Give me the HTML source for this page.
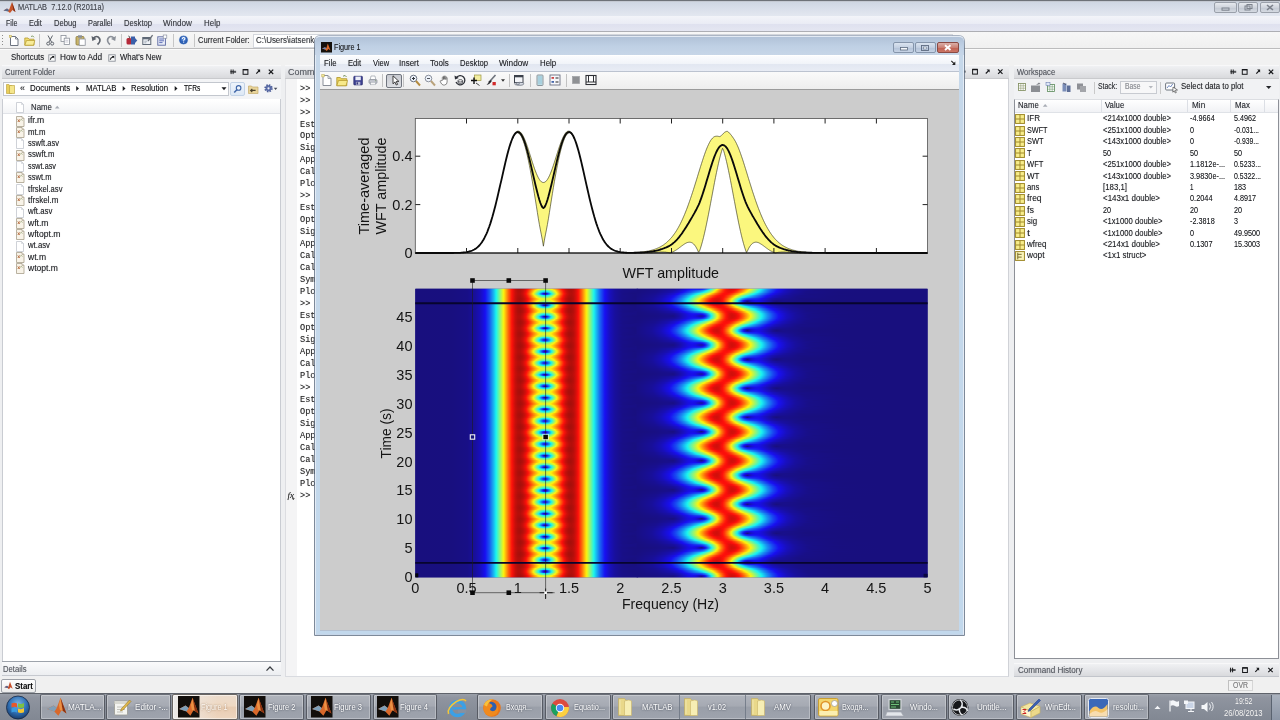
<!DOCTYPE html>
<html><head><meta charset="utf-8"><title>MATLAB 7.12.0 (R2011a)</title>
<style>
html,body{margin:0;padding:0;}
body{width:1280px;height:720px;overflow:hidden;position:relative;background:#f0f0f0;font-family:"Liberation Sans",sans-serif;}
#root{position:absolute;left:0;top:0;width:1280px;height:720px;overflow:hidden;will-change:transform;}
#root div{position:absolute;box-sizing:border-box;}
#root svg{position:absolute;overflow:visible;}
.t{position:absolute;white-space:pre;text-shadow:0 0 .7px rgba(30,30,35,.45);}
.fs{font-family:"Liberation Sans",sans-serif;}
.fm{font-family:"Liberation Mono",monospace;}
</style></head>
<body><div id="root">
<div style="left:0px;top:0px;width:1280px;height:16px;background:linear-gradient(#ccd4e0 0%,#d8dee9 50%,#e3e7f0 100%);"></div>
<div style="left:0px;top:0px;width:1280px;height:1px;background:#6e7278;"></div>
<div style="left:0px;top:1px;width:1280px;height:1px;background:#c4c9d2;"></div>
<svg style="left:3px;top:1px" width="13" height="13" viewBox="0 0 13 13"><path d="M0.5 9.5 L4 7.5 L6 9 L9 1 L12.5 11 L9.5 9 L7 12 L4.5 10 Z" fill="#c8552a"/><path d="M0.5 9.5 L4 7.5 L6 9 L5 10.5 Z" fill="#5a6b8c"/><path d="M9 1 L12.5 11 L10.5 9.5 Z" fill="#7a2a14"/></svg>
<span class="t fs" style="left:18.00px;top:1.00px;font-size:8.6px;line-height:12px;color:#4a4e57;transform:scaleX(0.860);transform-origin:0 50%;">MATLAB  7.12.0 (R2011a)</span>
<div style="left:1214px;top:2px;width:23px;height:11px;border:1px solid #9aa0aa;border-radius:2px;background:linear-gradient(#e6e9ee,#cfd4dc 50%,#c2c8d2 51%,#d5dae2);"></div>
<div style="left:1238px;top:2px;width:20px;height:11px;border:1px solid #9aa0aa;border-radius:2px;background:linear-gradient(#e6e9ee,#cfd4dc 50%,#c2c8d2 51%,#d5dae2);"></div>
<div style="left:1260px;top:2px;width:20px;height:11px;border:1px solid #9aa0aa;border-radius:2px;background:linear-gradient(#e6e9ee,#cfd4dc 50%,#c2c8d2 51%,#d5dae2);"></div>
<svg style="left:1214px;top:2px" width="66" height="11" viewBox="0 0 66 11"><rect x="8" y="6" width="7" height="2.2" fill="none" stroke="#7c828c" stroke-width="1"/><rect x="31" y="4" width="5" height="4" fill="none" stroke="#7c828c"/><rect x="33" y="2.5" width="5" height="4" fill="none" stroke="#7c828c"/><path d="M53 3 L59 8 M59 3 L53 8" stroke="#7c828c" stroke-width="1.6"/></svg>
<div style="left:0px;top:16px;width:1280px;height:16px;background:linear-gradient(#f3f4f9 0%,#eaecf5 48%,#dfe1ef 52%,#e5e7f2 100%);"></div>
<div style="left:0px;top:31px;width:1280px;height:1px;background:#adaeb4;"></div>
<span class="t fs" style="left:5.50px;top:17.10px;font-size:8.4px;line-height:12px;color:#3c3f46;transform:scaleX(0.852);transform-origin:0 50%;">File</span>
<span class="t fs" style="left:28.60px;top:17.10px;font-size:8.4px;line-height:12px;color:#3c3f46;transform:scaleX(0.887);transform-origin:0 50%;">Edit</span>
<span class="t fs" style="left:53.60px;top:17.10px;font-size:8.4px;line-height:12px;color:#3c3f46;transform:scaleX(0.907);transform-origin:0 50%;">Debug</span>
<span class="t fs" style="left:87.50px;top:17.10px;font-size:8.4px;line-height:12px;color:#3c3f46;transform:scaleX(0.877);transform-origin:0 50%;">Parallel</span>
<span class="t fs" style="left:124.00px;top:17.10px;font-size:8.4px;line-height:12px;color:#3c3f46;transform:scaleX(0.911);transform-origin:0 50%;">Desktop</span>
<span class="t fs" style="left:163.00px;top:17.10px;font-size:8.4px;line-height:12px;color:#3c3f46;transform:scaleX(0.973);transform-origin:0 50%;">Window</span>
<span class="t fs" style="left:203.70px;top:17.10px;font-size:8.4px;line-height:12px;color:#3c3f46;transform:scaleX(0.946);transform-origin:0 50%;">Help</span>
<div style="left:0px;top:32px;width:1280px;height:17px;background:linear-gradient(#f7f7f7,#efefef);"></div>
<div style="left:0px;top:48px;width:1280px;height:1px;background:#bcbcbd;"></div>
<div style="left:0px;top:49px;width:1280px;height:1px;background:#fbfbfb;"></div>
<svg style="left:1px;top:33px" width="4" height="30" viewBox="0 0 4 30"><g fill="#8c8c8c"><rect x="1" y="2" width="1" height="1"/><rect x="1" y="5" width="1" height="1"/><rect x="1" y="8" width="1" height="1"/><rect x="1" y="11" width="1" height="1"/><rect x="1" y="19" width="1" height="1"/><rect x="1" y="22" width="1" height="1"/><rect x="1" y="25" width="1" height="1"/></g></svg>
<svg style="left:8.6px;top:34px" width="11" height="12" viewBox="0 0 11 12"><path d="M1.5 2.5 h5 l2.5 2.5 v6.5 h-7.5z" fill="#fff" stroke="#6d7480" stroke-width="1"/><path d="M6.5 2.5 v2.5 h2.5" fill="none" stroke="#6d7480" stroke-width=".8"/><rect x="0.3" y="1.3" width="2.2" height="2.2" fill="#f4e9a0" stroke="#b9a64a" stroke-width=".5"/></svg>
<svg style="left:23.5px;top:34px" width="11" height="12" viewBox="0 0 11 12"><path d="M0.8 4 h3.2 l1 1.2 h5 v6 h-9.2z" fill="#f0dc6e" stroke="#b59a2e" stroke-width=".8"/><path d="M2.5 6.5 h8.3 l-1.3 4.7 h-8.7z" fill="#f8ec98" stroke="#b59a2e" stroke-width=".7"/><path d="M7 2.5 q2-1.5 3 .8" fill="none" stroke="#6a8a4a" stroke-width=".8"/></svg>
<svg style="left:45px;top:34px" width="11" height="12" viewBox="0 0 11 12"><path d="M3 1.5 L6.5 8 M7.5 1.5 L4 8" stroke="#60656d" stroke-width="1"/><circle cx="3.2" cy="9.6" r="1.5" fill="none" stroke="#60656d" stroke-width="1"/><circle cx="7.2" cy="9.6" r="1.5" fill="none" stroke="#60656d" stroke-width="1"/></svg>
<svg style="left:60px;top:34px" width="11" height="12" viewBox="0 0 11 12"><rect x="1" y="1.5" width="5" height="6" fill="#fff" stroke="#8a9099" stroke-width=".8"/><rect x="4.2" y="4.2" width="5.3" height="6.3" fill="#fff" stroke="#8a9099" stroke-width=".8"/><path d="M5.3 6.3h3M5.3 8h3" stroke="#aab" stroke-width=".6"/></svg>
<svg style="left:75px;top:34px" width="11" height="12" viewBox="0 0 11 12"><rect x="1" y="2.5" width="8" height="8.5" rx="1" fill="#c9b46a" stroke="#8a7a3a" stroke-width=".8"/><rect x="3" y="1.3" width="4" height="2.4" fill="#8a8f98"/><rect x="4.2" y="5" width="6" height="6.3" fill="#fff" stroke="#8a9099" stroke-width=".8"/></svg>
<svg style="left:91px;top:34px" width="11" height="12" viewBox="0 0 11 12"><path d="M2 4.5 q4-4 6.5 0 q1.5 3-2 6" fill="none" stroke="#5d626b" stroke-width="1.7"/><path d="M0.5 2 L1.3 7 L5.5 5z" fill="#5d626b"/></svg>
<svg style="left:106px;top:34px" width="11" height="12" viewBox="0 0 11 12"><path d="M8.5 4.5 q-4-4 -6.5 0 q-1.5 3 2 6" fill="none" stroke="#8b9099" stroke-width="1.7"/><path d="M10 2 L9.2 7 L5 5z" fill="#8b9099"/></svg>
<svg style="left:126px;top:34px" width="11" height="12" viewBox="0 0 11 12"><rect x="0.5" y="4" width="5" height="6.5" rx="1.5" fill="#b52a3a"/><rect x="5" y="2.5" width="4" height="8" fill="#3b5fa8"/><path d="M9 4 l2.3 2.5 l-2.3 2.5z" fill="#3b5fa8"/><path d="M2 1.3 l2.5 1.7 l-1 1.5z" fill="#5a5a5a"/></svg>
<svg style="left:142px;top:34px" width="11" height="12" viewBox="0 0 11 12"><rect x="0.8" y="3.5" width="8" height="7" fill="#eef1f6" stroke="#5e6876" stroke-width="1"/><rect x="0.8" y="3.5" width="8" height="1.8" fill="#5e6876"/><path d="M6 7 L10.6 1.2" stroke="#6a707a" stroke-width="1.3"/><path d="M2.3 7.2h3M2.3 8.8h2" stroke="#8d96a5" stroke-width=".7"/></svg>
<svg style="left:157px;top:34px" width="11" height="12" viewBox="0 0 11 12"><rect x="0.8" y="2.8" width="7.6" height="8.4" fill="#e9edf8" stroke="#5a67a0" stroke-width=".9"/><path d="M2.2 5h4.8M2.2 6.8h4.8M2.2 8.6h3.3" stroke="#5463b0" stroke-width=".9"/><rect x="6.2" y="1" width="3.6" height="3.2" fill="#fff" stroke="#7d8496" stroke-width=".6"/></svg>
<svg style="left:178px;top:34px" width="11" height="12" viewBox="0 0 11 12"><circle cx="5.5" cy="6" r="4.9" fill="#cfe0f6" opacity=".7"/><circle cx="5.5" cy="6" r="4" fill="#2f62b8" stroke="#214f9c" stroke-width=".5"/><circle cx="5.5" cy="4.800" r="2.500" fill="#6fa0ea" opacity=".5"/><path d="M4.300 4.900 q0-1.500 1.300-1.500 q1.300 0 1.300 1.200 q0 .8-1.200 1.500 v.6" fill="none" stroke="#fff" stroke-width="1.050"/><rect x="5.100" y="7.600" width="1.100" height="1" fill="#fff"/></svg>
<div style="left:39px;top:34px;width:1px;height:13px;background:#c6c6c6;"></div>
<div style="left:121px;top:34px;width:1px;height:13px;background:#c6c6c6;"></div>
<div style="left:172.5px;top:34px;width:1px;height:13px;background:#c6c6c6;"></div>
<div style="left:193.5px;top:34px;width:1px;height:13px;background:#c6c6c6;"></div>
<span class="t fs" style="left:198.40px;top:34.30px;font-size:8.4px;line-height:12px;color:#303236;transform:scaleX(0.916);transform-origin:0 50%;">Current Folder:</span>
<div style="left:253px;top:33.5px;width:700px;height:14px;background:#fff;border:1px solid #d3d6dc;"></div>
<span class="t fs" style="left:255.60px;top:34.30px;font-size:8.4px;line-height:12px;color:#3a3d42;transform:scaleX(0.949);transform-origin:0 50%;">C:\Users\iatsenko\</span>
<div style="left:0px;top:50px;width:1280px;height:16px;background:#f1f1f1;"></div>
<span class="t fs" style="left:10.60px;top:51.40px;font-size:8.5px;line-height:12px;color:#26282c;transform:scaleX(0.922);transform-origin:0 50%;">Shortcuts</span>
<svg style="left:48.2px;top:53.5px" width="8" height="8" viewBox="0 0 8 8"><rect x="0.800" y="0.800" width="6.400" height="6.400" fill="#fdfdfd" stroke="#8b9098" stroke-width=".9"/><path d="M2.300 5.800 q.3-2.300 2.600-2.500" stroke="#15171a" stroke-width="1.100" fill="none"/><path d="M3.600 2 h2.600 v2.600z" fill="#15171a"/></svg>
<span class="t fs" style="left:59.70px;top:51.40px;font-size:8.5px;line-height:12px;color:#26282c;transform:scaleX(0.970);transform-origin:0 50%;">How to Add</span>
<svg style="left:108.2px;top:53.5px" width="8" height="8" viewBox="0 0 8 8"><rect x="0.800" y="0.800" width="6.400" height="6.400" fill="#fdfdfd" stroke="#8b9098" stroke-width=".9"/><path d="M2.300 5.800 q.3-2.300 2.600-2.500" stroke="#15171a" stroke-width="1.100" fill="none"/><path d="M3.600 2 h2.600 v2.600z" fill="#15171a"/></svg>
<span class="t fs" style="left:120.30px;top:51.40px;font-size:8.5px;line-height:12px;color:#26282c;transform:scaleX(0.918);transform-origin:0 50%;">What's New</span>
<div style="left:0px;top:66px;width:1280px;height:628px;background:#eeeff1;"></div>
<div style="left:2px;top:65px;width:279px;height:13.5px;background:linear-gradient(#f0f1f3 0%,#e6e7ea 45%,#d9dadd 100%);border-top:1px solid #f8f8f9;border-bottom:1px solid #c9cacd;"></div>
<span class="t fs" style="left:5.00px;top:66.30px;font-size:8.3px;line-height:12px;color:#5c6068;transform:scaleX(0.935);transform-origin:0 50%;">Current Folder</span>
<svg style="left:0;top:0" width="1280" height="720"><path d="M230.3 71.8 h2.8 M231.1 69.5 v4.6 M233.1 69.5 v4.6" stroke="#17181b" stroke-width="1" fill="none"/><rect x="233.1" y="70.8" width="3" height="2" fill="#17181b" opacity=".7"/><rect x="243.1" y="69.5" width="4.8" height="4.8" fill="none" stroke="#17181b" stroke-width="1"/><path d="M243.1 69.8 h4.8" stroke="#17181b" stroke-width="1.3"/><path d="M256.3 73.7 L259.4 70.5" stroke="#17181b" stroke-width="1.15" fill="none"/><path d="M257.1 69.6 h3 v3z" fill="#17181b"/><path d="M268.8 69.6 L273.2 74.0 M273.2 69.6 L268.8 74.0" stroke="#17181b" stroke-width="1.2"/></svg>
<div style="left:2px;top:78.5px;width:279px;height:20.5px;background:#f3f4f6;"></div>
<div style="left:3px;top:81.5px;width:226px;height:14px;background:#fff;border:1px solid #c3c7ce;"></div>
<svg style="left:5.5px;top:83px" width="9" height="11" viewBox="0 0 9 11"><path d="M0.5 1.5 h2.4 l1 1 h1.6 v8 h-5z" fill="#e9cf5a" stroke="#b79c32" stroke-width=".6"/><path d="M3.5 2.5 h5 v8 h-5z" fill="#f5e68c" stroke="#b79c32" stroke-width=".6"/></svg>
<span class="t fs" style="left:20.00px;top:81.70px;font-size:9px;line-height:13px;color:#2a2c30;">«</span>
<span class="t fs" style="left:30.00px;top:82.00px;font-size:8.4px;line-height:12px;color:#111215;transform:scaleX(0.951);transform-origin:0 50%;">Documents</span>
<span class="t fs" style="left:85.60px;top:82.00px;font-size:8.4px;line-height:12px;color:#111215;transform:scaleX(0.924);transform-origin:0 50%;">MATLAB</span>
<span class="t fs" style="left:131.00px;top:82.00px;font-size:8.4px;line-height:12px;color:#111215;transform:scaleX(0.935);transform-origin:0 50%;">Resolution</span>
<span class="t fs" style="left:183.70px;top:82.00px;font-size:8.4px;line-height:12px;color:#111215;transform:scaleX(0.796);transform-origin:0 50%;">TFRs</span>
<svg style="left:0;top:0" width="1280" height="720"><path d="M76.2 86.1 L79.0 88.5 L76.2 90.9z" fill="#1c1d20"/><path d="M122.7 86.1 L125.5 88.5 L122.7 90.9z" fill="#1c1d20"/><path d="M174.7 86.1 L177.5 88.5 L174.7 90.9z" fill="#1c1d20"/><path d="M221.5 87.2 h5 l-2.5 3z" fill="#1c1d20"/></svg>
<div style="left:229.5px;top:81.5px;width:15px;height:14px;background:linear-gradient(#eef4fb,#dde8f5);border:1px solid #c3d3e6;border-radius:2px;"></div>
<svg style="left:232px;top:83.5px" width="11" height="11" viewBox="0 0 11 11"><circle cx="6.6" cy="3.9" r="2.3" fill="#eef4fb" stroke="#3f66a8" stroke-width="1.1"/><path d="M4.9 5.7 L2.2 8.6" stroke="#3f66a8" stroke-width="1.5"/></svg>
<svg style="left:248px;top:83.5px" width="11" height="11" viewBox="0 0 11 11"><path d="M0.5 2 h3 l1 1 h5.5 v6.5 h-9.5z" fill="#e8d49a" stroke="#c4ab6a" stroke-width=".7"/><path d="M2.6 6.400 h5 M4.300 4.800 L2.600 6.400 L4.300 8" stroke="#4a412a" stroke-width="1.100" fill="none"/></svg>
<svg style="left:263px;top:83px" width="16" height="12" viewBox="0 0 16 12"><circle cx="5.500" cy="5.300" r="3.300" fill="none" stroke="#4b5d9a" stroke-width="1.800" stroke-dasharray="1.500 1.090"/><circle cx="5.500" cy="5.300" r="2.700" fill="#5c6fae" stroke="#44568f" stroke-width=".5"/><circle cx="5.500" cy="5.300" r="1.100" fill="#eef0f6"/><path d="M10.800 4.800 h3.600 l-1.800 2.200z" fill="#444a5a"/></svg>
<div style="left:2px;top:99px;width:279px;height:563px;background:#fff;border-left:1px solid #c9ccd2;border-right:1px solid #c9ccd2;"></div>
<div style="left:3px;top:100px;width:277px;height:14px;background:linear-gradient(#ffffff,#f3f4f6);border-bottom:1px solid #e1e3e8;"></div>
<svg style="left:15.8px;top:101.5px" width="9" height="11" viewBox="0 0 9 11"><path d="M0.5 0.5 h5 l2 2 v8 h-7z" fill="#fff" stroke="#c3c7ce" stroke-width=".8"/><path d="M5.5 0.5 v2 h2" fill="none" stroke="#c3c7ce" stroke-width=".6"/></svg>
<span class="t fs" style="left:30.60px;top:101.30px;font-size:8.4px;line-height:12px;color:#2d3036;transform:scaleX(0.940);transform-origin:0 50%;">Name</span>
<svg style="left:0;top:0" width="1280" height="720"><path d="M54.8 108.6 l2.4-2.8 l2.4 2.8z" fill="#a9adb5"/></svg>
<svg style="left:15.5px;top:115.6px" width="9" height="11" viewBox="0 0 9 11"><path d="M0.5 0.5 h5.5 l2 2 v8 h-7.5z" fill="#f8f3e8" stroke="#a89f8c" stroke-width=".8"/><path d="M6 0.5 v2 h2" fill="none" stroke="#a89f8c" stroke-width=".6"/><path d="M1.800 3.400 l1.900 2.600 M3.700 3.400 l-1.900 2.600" stroke="#b3683a" stroke-width=".9"/><path d="M4.300 4.200 q1.200-1.300 2.200.2" stroke="#7d8f5a" stroke-width=".7" fill="none"/></svg>
<span class="t fs" style="left:27.50px;top:115.30px;font-size:8.2px;line-height:12px;color:#1f2125;transform:scaleX(1.047);transform-origin:0 50%;">ifr.m</span>
<svg style="left:15.5px;top:126.97px" width="9" height="11" viewBox="0 0 9 11"><path d="M0.5 0.5 h5.5 l2 2 v8 h-7.5z" fill="#f8f3e8" stroke="#a89f8c" stroke-width=".8"/><path d="M6 0.5 v2 h2" fill="none" stroke="#a89f8c" stroke-width=".6"/><path d="M1.800 3.400 l1.900 2.600 M3.700 3.400 l-1.900 2.600" stroke="#b3683a" stroke-width=".9"/><path d="M4.300 4.200 q1.200-1.300 2.200.2" stroke="#7d8f5a" stroke-width=".7" fill="none"/></svg>
<span class="t fs" style="left:27.50px;top:126.67px;font-size:8.2px;line-height:12px;color:#1f2125;transform:scaleX(0.961);transform-origin:0 50%;">mt.m</span>
<svg style="left:15.5px;top:138.34px" width="9" height="11" viewBox="0 0 9 11"><path d="M0.5 0.5 h5 l2 2 v8 h-7z" fill="#fff" stroke="#c3c7ce" stroke-width=".8"/><path d="M5.5 0.5 v2 h2" fill="none" stroke="#c3c7ce" stroke-width=".6"/></svg>
<span class="t fs" style="left:27.50px;top:138.04px;font-size:8.2px;line-height:12px;color:#1f2125;transform:scaleX(0.921);transform-origin:0 50%;">sswft.asv</span>
<svg style="left:15.5px;top:149.70999999999998px" width="9" height="11" viewBox="0 0 9 11"><path d="M0.5 0.5 h5.5 l2 2 v8 h-7.5z" fill="#f8f3e8" stroke="#a89f8c" stroke-width=".8"/><path d="M6 0.5 v2 h2" fill="none" stroke="#a89f8c" stroke-width=".6"/><path d="M1.800 3.400 l1.900 2.600 M3.700 3.400 l-1.900 2.600" stroke="#b3683a" stroke-width=".9"/><path d="M4.300 4.200 q1.200-1.300 2.200.2" stroke="#7d8f5a" stroke-width=".7" fill="none"/></svg>
<span class="t fs" style="left:27.50px;top:149.41px;font-size:8.2px;line-height:12px;color:#1f2125;transform:scaleX(0.955);transform-origin:0 50%;">sswft.m</span>
<svg style="left:15.5px;top:161.07999999999998px" width="9" height="11" viewBox="0 0 9 11"><path d="M0.5 0.5 h5 l2 2 v8 h-7z" fill="#fff" stroke="#c3c7ce" stroke-width=".8"/><path d="M5.5 0.5 v2 h2" fill="none" stroke="#c3c7ce" stroke-width=".6"/></svg>
<span class="t fs" style="left:27.50px;top:160.78px;font-size:8.2px;line-height:12px;color:#1f2125;transform:scaleX(0.892);transform-origin:0 50%;">sswt.asv</span>
<svg style="left:15.5px;top:172.45px" width="9" height="11" viewBox="0 0 9 11"><path d="M0.5 0.5 h5.5 l2 2 v8 h-7.5z" fill="#f8f3e8" stroke="#a89f8c" stroke-width=".8"/><path d="M6 0.5 v2 h2" fill="none" stroke="#a89f8c" stroke-width=".6"/><path d="M1.800 3.400 l1.900 2.600 M3.700 3.400 l-1.900 2.600" stroke="#b3683a" stroke-width=".9"/><path d="M4.300 4.200 q1.200-1.300 2.200.2" stroke="#7d8f5a" stroke-width=".7" fill="none"/></svg>
<span class="t fs" style="left:27.50px;top:172.15px;font-size:8.2px;line-height:12px;color:#1f2125;transform:scaleX(0.922);transform-origin:0 50%;">sswt.m</span>
<svg style="left:15.5px;top:183.82px" width="9" height="11" viewBox="0 0 9 11"><path d="M0.5 0.5 h5 l2 2 v8 h-7z" fill="#fff" stroke="#c3c7ce" stroke-width=".8"/><path d="M5.5 0.5 v2 h2" fill="none" stroke="#c3c7ce" stroke-width=".6"/></svg>
<span class="t fs" style="left:27.50px;top:183.52px;font-size:8.2px;line-height:12px;color:#1f2125;transform:scaleX(0.936);transform-origin:0 50%;">tfrskel.asv</span>
<svg style="left:15.5px;top:195.19px" width="9" height="11" viewBox="0 0 9 11"><path d="M0.5 0.5 h5.5 l2 2 v8 h-7.5z" fill="#f8f3e8" stroke="#a89f8c" stroke-width=".8"/><path d="M6 0.5 v2 h2" fill="none" stroke="#a89f8c" stroke-width=".6"/><path d="M1.800 3.400 l1.900 2.600 M3.700 3.400 l-1.900 2.600" stroke="#b3683a" stroke-width=".9"/><path d="M4.300 4.200 q1.200-1.300 2.200.2" stroke="#7d8f5a" stroke-width=".7" fill="none"/></svg>
<span class="t fs" style="left:27.50px;top:194.89px;font-size:8.2px;line-height:12px;color:#1f2125;transform:scaleX(0.986);transform-origin:0 50%;">tfrskel.m</span>
<svg style="left:15.5px;top:206.56px" width="9" height="11" viewBox="0 0 9 11"><path d="M0.5 0.5 h5 l2 2 v8 h-7z" fill="#fff" stroke="#c3c7ce" stroke-width=".8"/><path d="M5.5 0.5 v2 h2" fill="none" stroke="#c3c7ce" stroke-width=".6"/></svg>
<span class="t fs" style="left:27.50px;top:206.26px;font-size:8.2px;line-height:12px;color:#1f2125;transform:scaleX(0.961);transform-origin:0 50%;">wft.asv</span>
<svg style="left:15.5px;top:217.93px" width="9" height="11" viewBox="0 0 9 11"><path d="M0.5 0.5 h5.5 l2 2 v8 h-7.5z" fill="#f8f3e8" stroke="#a89f8c" stroke-width=".8"/><path d="M6 0.5 v2 h2" fill="none" stroke="#a89f8c" stroke-width=".6"/><path d="M1.800 3.400 l1.900 2.600 M3.700 3.400 l-1.900 2.600" stroke="#b3683a" stroke-width=".9"/><path d="M4.300 4.200 q1.200-1.300 2.200.2" stroke="#7d8f5a" stroke-width=".7" fill="none"/></svg>
<span class="t fs" style="left:27.50px;top:217.63px;font-size:8.2px;line-height:12px;color:#1f2125;transform:scaleX(1.048);transform-origin:0 50%;">wft.m</span>
<svg style="left:15.5px;top:229.29999999999998px" width="9" height="11" viewBox="0 0 9 11"><path d="M0.5 0.5 h5.5 l2 2 v8 h-7.5z" fill="#f8f3e8" stroke="#a89f8c" stroke-width=".8"/><path d="M6 0.5 v2 h2" fill="none" stroke="#a89f8c" stroke-width=".6"/><path d="M1.800 3.400 l1.900 2.600 M3.700 3.400 l-1.900 2.600" stroke="#b3683a" stroke-width=".9"/><path d="M4.300 4.200 q1.200-1.300 2.200.2" stroke="#7d8f5a" stroke-width=".7" fill="none"/></svg>
<span class="t fs" style="left:27.50px;top:229.00px;font-size:8.2px;line-height:12px;color:#1f2125;transform:scaleX(1.050);transform-origin:0 50%;">wftopt.m</span>
<svg style="left:15.5px;top:240.67px" width="9" height="11" viewBox="0 0 9 11"><path d="M0.5 0.5 h5 l2 2 v8 h-7z" fill="#fff" stroke="#c3c7ce" stroke-width=".8"/><path d="M5.5 0.5 v2 h2" fill="none" stroke="#c3c7ce" stroke-width=".6"/></svg>
<span class="t fs" style="left:27.50px;top:240.37px;font-size:8.2px;line-height:12px;color:#1f2125;transform:scaleX(0.948);transform-origin:0 50%;">wt.asv</span>
<svg style="left:15.5px;top:252.03999999999996px" width="9" height="11" viewBox="0 0 9 11"><path d="M0.5 0.5 h5.5 l2 2 v8 h-7.5z" fill="#f8f3e8" stroke="#a89f8c" stroke-width=".8"/><path d="M6 0.5 v2 h2" fill="none" stroke="#a89f8c" stroke-width=".6"/><path d="M1.800 3.400 l1.900 2.600 M3.700 3.400 l-1.900 2.600" stroke="#b3683a" stroke-width=".9"/><path d="M4.300 4.200 q1.200-1.300 2.200.2" stroke="#7d8f5a" stroke-width=".7" fill="none"/></svg>
<span class="t fs" style="left:27.50px;top:251.74px;font-size:8.2px;line-height:12px;color:#1f2125;transform:scaleX(1.041);transform-origin:0 50%;">wt.m</span>
<svg style="left:15.5px;top:263.40999999999997px" width="9" height="11" viewBox="0 0 9 11"><path d="M0.5 0.5 h5.5 l2 2 v8 h-7.5z" fill="#f8f3e8" stroke="#a89f8c" stroke-width=".8"/><path d="M6 0.5 v2 h2" fill="none" stroke="#a89f8c" stroke-width=".6"/><path d="M1.800 3.400 l1.900 2.600 M3.700 3.400 l-1.900 2.600" stroke="#b3683a" stroke-width=".9"/><path d="M4.300 4.200 q1.200-1.300 2.200.2" stroke="#7d8f5a" stroke-width=".7" fill="none"/></svg>
<span class="t fs" style="left:27.50px;top:263.11px;font-size:8.2px;line-height:12px;color:#1f2125;transform:scaleX(1.046);transform-origin:0 50%;">wtopt.m</span>
<div style="left:2px;top:661px;width:279px;height:15px;background:linear-gradient(#fafafb,#eceef1);border-top:1px solid #9ea3ab;border-bottom:1px solid #c6c9cf;"></div>
<span class="t fs" style="left:3.00px;top:663.00px;font-size:8.4px;line-height:12px;color:#5e626a;transform:scaleX(0.918);transform-origin:0 50%;">Details</span>
<svg style="left:0;top:0" width="1280" height="720"><path d="M266.5 670.6 L270 667 L273.5 670.6" fill="none" stroke="#3a3d42" stroke-width="1.3"/></svg>
<div style="left:285px;top:65px;width:724px;height:13.5px;background:linear-gradient(#f0f1f3 0%,#e6e7ea 45%,#d9dadd 100%);border-top:1px solid #f8f8f9;border-bottom:1px solid #c9cacd;"></div>
<span class="t fs" style="left:288.00px;top:66.30px;font-size:8.3px;line-height:12px;color:#5c6068;transform:scaleX(1.084);transform-origin:0 50%;">Command Window</span>
<svg style="left:0;top:0" width="1280" height="720"><path d="M959.8 71.6 h2.8 M960.6 69.3 v4.6 M962.6 69.3 v4.6" stroke="#17181b" stroke-width="1" fill="none"/><rect x="962.6" y="70.6" width="3" height="2" fill="#17181b" opacity=".7"/><rect x="972.6" y="69.3" width="4.8" height="4.8" fill="none" stroke="#17181b" stroke-width="1"/><path d="M972.6 69.6 h4.8" stroke="#17181b" stroke-width="1.3"/><path d="M985.8 73.5 L988.9 70.3" stroke="#17181b" stroke-width="1.15" fill="none"/><path d="M986.6 69.39999999999999 h3 v3z" fill="#17181b"/><path d="M998.0999999999999 69.39999999999999 L1002.5 73.8 M1002.5 69.39999999999999 L998.0999999999999 73.8" stroke="#17181b" stroke-width="1.2"/></svg>
<div style="left:285px;top:78.5px;width:724px;height:598.5px;background:#fff;border-left:1px solid #dcdde1;border-right:1px solid #d0d2d7;border-bottom:1px solid #d9dbe0;"></div>
<div style="left:286px;top:78.5px;width:11px;height:597.5px;background:#f4f4f5;"></div>
<span class="t fm" style="left:300.00px;top:82.60px;font-size:8.6px;line-height:12px;color:#2b2b2b;">&gt;&gt;</span>
<span class="t fm" style="left:300.00px;top:94.57px;font-size:8.6px;line-height:12px;color:#2b2b2b;">&gt;&gt;</span>
<span class="t fm" style="left:300.00px;top:106.54px;font-size:8.6px;line-height:12px;color:#2b2b2b;">&gt;&gt;</span>
<span class="t fm" style="left:300.00px;top:118.51px;font-size:8.6px;line-height:12px;color:#2b2b2b;">Estim</span>
<span class="t fm" style="left:300.00px;top:130.48px;font-size:8.6px;line-height:12px;color:#2b2b2b;">Optim</span>
<span class="t fm" style="left:300.00px;top:142.45px;font-size:8.6px;line-height:12px;color:#2b2b2b;">Sigma</span>
<span class="t fm" style="left:300.00px;top:154.42px;font-size:8.6px;line-height:12px;color:#2b2b2b;">Appro</span>
<span class="t fm" style="left:300.00px;top:166.39px;font-size:8.6px;line-height:12px;color:#2b2b2b;">Calcu</span>
<span class="t fm" style="left:300.00px;top:178.36px;font-size:8.6px;line-height:12px;color:#2b2b2b;">Plott</span>
<span class="t fm" style="left:300.00px;top:190.33px;font-size:8.6px;line-height:12px;color:#2b2b2b;">&gt;&gt;</span>
<span class="t fm" style="left:300.00px;top:202.30px;font-size:8.6px;line-height:12px;color:#2b2b2b;">Estim</span>
<span class="t fm" style="left:300.00px;top:214.27px;font-size:8.6px;line-height:12px;color:#2b2b2b;">Optim</span>
<span class="t fm" style="left:300.00px;top:226.24px;font-size:8.6px;line-height:12px;color:#2b2b2b;">Sigma</span>
<span class="t fm" style="left:300.00px;top:238.21px;font-size:8.6px;line-height:12px;color:#2b2b2b;">Appro</span>
<span class="t fm" style="left:300.00px;top:250.18px;font-size:8.6px;line-height:12px;color:#2b2b2b;">Calcu</span>
<span class="t fm" style="left:300.00px;top:262.15px;font-size:8.6px;line-height:12px;color:#2b2b2b;">Calcu</span>
<span class="t fm" style="left:300.00px;top:274.12px;font-size:8.6px;line-height:12px;color:#2b2b2b;">Symbo</span>
<span class="t fm" style="left:300.00px;top:286.09px;font-size:8.6px;line-height:12px;color:#2b2b2b;">Plott</span>
<span class="t fm" style="left:300.00px;top:298.06px;font-size:8.6px;line-height:12px;color:#2b2b2b;">&gt;&gt;</span>
<span class="t fm" style="left:300.00px;top:310.03px;font-size:8.6px;line-height:12px;color:#2b2b2b;">Estim</span>
<span class="t fm" style="left:300.00px;top:322.00px;font-size:8.6px;line-height:12px;color:#2b2b2b;">Optim</span>
<span class="t fm" style="left:300.00px;top:333.97px;font-size:8.6px;line-height:12px;color:#2b2b2b;">Sigma</span>
<span class="t fm" style="left:300.00px;top:345.94px;font-size:8.6px;line-height:12px;color:#2b2b2b;">Appro</span>
<span class="t fm" style="left:300.00px;top:357.91px;font-size:8.6px;line-height:12px;color:#2b2b2b;">Calcu</span>
<span class="t fm" style="left:300.00px;top:369.88px;font-size:8.6px;line-height:12px;color:#2b2b2b;">Plott</span>
<span class="t fm" style="left:300.00px;top:381.85px;font-size:8.6px;line-height:12px;color:#2b2b2b;">&gt;&gt;</span>
<span class="t fm" style="left:300.00px;top:393.82px;font-size:8.6px;line-height:12px;color:#2b2b2b;">Estim</span>
<span class="t fm" style="left:300.00px;top:405.79px;font-size:8.6px;line-height:12px;color:#2b2b2b;">Optim</span>
<span class="t fm" style="left:300.00px;top:417.76px;font-size:8.6px;line-height:12px;color:#2b2b2b;">Sigma</span>
<span class="t fm" style="left:300.00px;top:429.73px;font-size:8.6px;line-height:12px;color:#2b2b2b;">Appro</span>
<span class="t fm" style="left:300.00px;top:441.70px;font-size:8.6px;line-height:12px;color:#2b2b2b;">Calcu</span>
<span class="t fm" style="left:300.00px;top:453.67px;font-size:8.6px;line-height:12px;color:#2b2b2b;">Calcu</span>
<span class="t fm" style="left:300.00px;top:465.64px;font-size:8.6px;line-height:12px;color:#2b2b2b;">Symbo</span>
<span class="t fm" style="left:300.00px;top:477.61px;font-size:8.6px;line-height:12px;color:#2b2b2b;">Plott</span>
<span class="t fm" style="left:300.00px;top:489.58px;font-size:8.6px;line-height:12px;color:#2b2b2b;">&gt;&gt;</span>
<span class="t" style="left:287.5px;top:487.5px;font-family:'Liberation Serif',serif;font-style:italic;font-size:9px;line-height:14px;color:#222;">fx</span>
<svg style="left:0;top:0" width="1280" height="720"><path d="M291.8 498.2 h3 l-1.500 1.800z" fill="#222"/></svg>
<div style="left:1014px;top:65px;width:265px;height:13.5px;background:linear-gradient(#f0f1f3 0%,#e6e7ea 45%,#d9dadd 100%);border-top:1px solid #f8f8f9;border-bottom:1px solid #c9cacd;"></div>
<span class="t fs" style="left:1017.30px;top:66.30px;font-size:8.3px;line-height:12px;color:#5c6068;transform:scaleX(0.924);transform-origin:0 50%;">Workspace</span>
<svg style="left:0;top:0" width="1280" height="720"><path d="M1230.3999999999999 71.8 h2.8 M1231.1999999999998 69.5 v4.6 M1233.1999999999998 69.5 v4.6" stroke="#17181b" stroke-width="1" fill="none"/><rect x="1233.1999999999998" y="70.8" width="3" height="2" fill="#17181b" opacity=".7"/><rect x="1242.3" y="69.5" width="4.8" height="4.8" fill="none" stroke="#17181b" stroke-width="1"/><path d="M1242.3 69.8 h4.8" stroke="#17181b" stroke-width="1.3"/><path d="M1256.3 73.7 L1259.4 70.5" stroke="#17181b" stroke-width="1.15" fill="none"/><path d="M1257.1 69.6 h3 v3z" fill="#17181b"/><path d="M1268.8 69.6 L1273.2 74.0 M1273.2 69.6 L1268.8 74.0" stroke="#17181b" stroke-width="1.2"/></svg>
<div style="left:1014px;top:78.5px;width:265px;height:20.5px;background:#f1f2f4;"></div>
<svg style="left:1017px;top:82px" width="78" height="11" viewBox="0 0 78 11"><rect x="1.5" y="1.5" width="7" height="7" fill="#fff" stroke="#7d8a5a" stroke-width=".8"/><path d="M3.8 1.5v7M6.2 1.5v7M1.5 3.8h7M1.5 6.2h7" stroke="#7d8a5a" stroke-width=".5"/>
<rect x="14" y="3.5" width="9" height="6.5" fill="#8b8e93"/><path d="M19 3 l3-2.5 l1.5 1.5z" fill="#7b7e84"/>
<rect x="30.5" y="2.5" width="7" height="7" fill="#fff" stroke="#5a8a5a" stroke-width=".8"/><path d="M32.8 2.5v7M35.2 2.5v7M30.500 4.8h7M30.5 7.200h7" stroke="#5a8a5a" stroke-width=".5"/><rect x="29" y="0.5" width="4" height="3" fill="#dfe8f7" stroke="#5a6fa8" stroke-width=".5"/>
<rect x="45.5" y="1.5" width="4" height="8" fill="#7a8db8"/><rect x="50" y="3.500" width="3.500" height="6.5" fill="#5e6f98"/><path d="M46 1 l3 1.500" stroke="#445" stroke-width=".8"/>
<rect x="60" y="1.5" width="6" height="6" fill="#8e9096"/><rect x="63" y="4" width="6" height="6" fill="#a3a5aa"/></svg>
<div style="left:1093.5px;top:82px;width:1px;height:12px;background:#c9c9c9;"></div>
<span class="t fs" style="left:1097.80px;top:81.00px;font-size:8.2px;line-height:12px;color:#2f3237;transform:scaleX(0.843);transform-origin:0 50%;">Stack:</span>
<div style="left:1119.7px;top:81px;width:37px;height:13px;background:#f7f7f8;border:1px solid #c8cbd1;"></div>
<span class="t fs" style="left:1125.00px;top:81.00px;font-size:8.2px;line-height:12px;color:#9a9da3;transform:scaleX(0.830);transform-origin:0 50%;">Base</span>
<svg style="left:0;top:0" width="1280" height="720"><path d="M1148.6 86 h4.400 l-2.2 2.600z" fill="#b5b8be"/><path d="M1266 86 h5.4 l-2.700 3z" fill="#24262a"/></svg>
<div style="left:1159.5px;top:82px;width:1px;height:12px;background:#c9c9c9;"></div>
<svg style="left:1164.5px;top:81.5px" width="14" height="12" viewBox="0 0 14 12"><rect x="0.600" y="1" width="9" height="7" rx="1" fill="#fff" stroke="#5f6670" stroke-width=".9"/><path d="M2 6 l2-2.500 l1.500 1.500 l2.200-3" fill="none" stroke="#4a6ab0" stroke-width=".8"/><path d="M8 5 l4.500 3 l-2.200.3 l1 2.200 l-1 .5 l-1-2.200 l-1.500 1.400z" fill="#fff" stroke="#333" stroke-width=".6"/></svg>
<span class="t fs" style="left:1180.50px;top:81.00px;font-size:8.2px;line-height:12px;color:#26282c;transform:scaleX(0.954);transform-origin:0 50%;">Select data to plot</span>
<div style="left:1014px;top:99px;width:265px;height:560px;background:#fff;border:1px solid #8d9097;border-top:1px solid #dcdee2;"></div>
<div style="left:1015px;top:100px;width:263px;height:13px;background:linear-gradient(#ffffff,#f1f2f5);border-bottom:1px solid #dfe2e7;"></div>
<div style="left:1100.5px;top:100px;width:1px;height:12px;background:#dcdfe5;"></div>
<div style="left:1187.3px;top:100px;width:1px;height:12px;background:#dcdfe5;"></div>
<div style="left:1230px;top:100px;width:1px;height:12px;background:#dcdfe5;"></div>
<div style="left:1263.8px;top:100px;width:1px;height:12px;background:#dcdfe5;"></div>
<span class="t fs" style="left:1018.30px;top:99.40px;font-size:8.3px;line-height:12px;color:#2d3036;transform:scaleX(0.935);transform-origin:0 50%;">Name</span>
<svg style="left:0;top:0" width="1280" height="720"><path d="M1042.8 106.8 l2.400-2.800 l2.400 2.800z" fill="#a9adb5"/></svg>
<span class="t fs" style="left:1104.80px;top:99.40px;font-size:8.3px;line-height:12px;color:#2d3036;transform:scaleX(0.932);transform-origin:0 50%;">Value</span>
<span class="t fs" style="left:1191.60px;top:99.40px;font-size:8.3px;line-height:12px;color:#2d3036;transform:scaleX(0.987);transform-origin:0 50%;">Min</span>
<span class="t fs" style="left:1235.00px;top:99.40px;font-size:8.3px;line-height:12px;color:#2d3036;transform:scaleX(0.956);transform-origin:0 50%;">Max</span>
<svg style="left:1014.8px;top:114.2px" width="10" height="10" viewBox="0 0 9 9"><rect x="0.500" y="0.500" width="8" height="8" fill="#f7ec8a" stroke="#a08a2a" stroke-width=".9"/><path d="M4.500 0.500v8M0.500 4.500h8" stroke="#a08a2a" stroke-width=".9"/></svg>
<span class="t fs" style="left:1027.00px;top:113.40px;font-size:8.2px;line-height:12px;color:#1f2125;transform:scaleX(0.985);transform-origin:0 50%;">IFR</span>
<span class="t fs" style="left:1103.40px;top:113.40px;font-size:8.2px;line-height:12px;color:#1f2125;transform:scaleX(0.939);transform-origin:0 50%;">&lt;214x1000 double&gt;</span>
<span class="t fs" style="left:1190.20px;top:113.40px;font-size:8.2px;line-height:12px;color:#1f2125;transform:scaleX(0.889);transform-origin:0 50%;">-4.9664</span>
<span class="t fs" style="left:1233.60px;top:113.40px;font-size:8.2px;line-height:12px;color:#1f2125;transform:scaleX(0.878);transform-origin:0 50%;">5.4962</span>
<svg style="left:1014.8px;top:125.62px" width="10" height="10" viewBox="0 0 9 9"><rect x="0.500" y="0.500" width="8" height="8" fill="#f7ec8a" stroke="#a08a2a" stroke-width=".9"/><path d="M4.500 0.500v8M0.500 4.500h8" stroke="#a08a2a" stroke-width=".9"/></svg>
<span class="t fs" style="left:1027.00px;top:124.82px;font-size:8.2px;line-height:12px;color:#1f2125;transform:scaleX(0.884);transform-origin:0 50%;">SWFT</span>
<span class="t fs" style="left:1103.40px;top:124.82px;font-size:8.2px;line-height:12px;color:#1f2125;transform:scaleX(0.939);transform-origin:0 50%;">&lt;251x1000 double&gt;</span>
<span class="t fs" style="left:1190.20px;top:124.82px;font-size:8.2px;line-height:12px;color:#1f2125;transform:scaleX(0.877);transform-origin:0 50%;">0</span>
<span class="t fs" style="left:1233.60px;top:124.82px;font-size:8.2px;line-height:12px;color:#1f2125;transform:scaleX(0.832);transform-origin:0 50%;">-0.031...</span>
<svg style="left:1014.8px;top:137.04px" width="10" height="10" viewBox="0 0 9 9"><rect x="0.500" y="0.500" width="8" height="8" fill="#f7ec8a" stroke="#a08a2a" stroke-width=".9"/><path d="M4.500 0.500v8M0.500 4.500h8" stroke="#a08a2a" stroke-width=".9"/></svg>
<span class="t fs" style="left:1027.00px;top:136.24px;font-size:8.2px;line-height:12px;color:#1f2125;transform:scaleX(0.906);transform-origin:0 50%;">SWT</span>
<span class="t fs" style="left:1103.40px;top:136.24px;font-size:8.2px;line-height:12px;color:#1f2125;transform:scaleX(0.939);transform-origin:0 50%;">&lt;143x1000 double&gt;</span>
<span class="t fs" style="left:1190.20px;top:136.24px;font-size:8.2px;line-height:12px;color:#1f2125;transform:scaleX(0.877);transform-origin:0 50%;">0</span>
<span class="t fs" style="left:1233.60px;top:136.24px;font-size:8.2px;line-height:12px;color:#1f2125;transform:scaleX(0.832);transform-origin:0 50%;">-0.939...</span>
<svg style="left:1014.8px;top:148.46px" width="10" height="10" viewBox="0 0 9 9"><rect x="0.500" y="0.500" width="8" height="8" fill="#f7ec8a" stroke="#a08a2a" stroke-width=".9"/><path d="M4.500 0.500v8M0.500 4.500h8" stroke="#a08a2a" stroke-width=".9"/></svg>
<span class="t fs" style="left:1027.00px;top:147.66px;font-size:8.2px;line-height:12px;color:#1f2125;transform:scaleX(0.897);transform-origin:0 50%;">T</span>
<span class="t fs" style="left:1103.40px;top:147.66px;font-size:8.2px;line-height:12px;color:#1f2125;transform:scaleX(0.878);transform-origin:0 50%;">50</span>
<span class="t fs" style="left:1190.20px;top:147.66px;font-size:8.2px;line-height:12px;color:#1f2125;transform:scaleX(0.878);transform-origin:0 50%;">50</span>
<span class="t fs" style="left:1233.60px;top:147.66px;font-size:8.2px;line-height:12px;color:#1f2125;transform:scaleX(0.878);transform-origin:0 50%;">50</span>
<svg style="left:1014.8px;top:159.88px" width="10" height="10" viewBox="0 0 9 9"><rect x="0.500" y="0.500" width="8" height="8" fill="#f7ec8a" stroke="#a08a2a" stroke-width=".9"/><path d="M4.500 0.500v8M0.500 4.500h8" stroke="#a08a2a" stroke-width=".9"/></svg>
<span class="t fs" style="left:1027.00px;top:159.08px;font-size:8.2px;line-height:12px;color:#1f2125;transform:scaleX(0.930);transform-origin:0 50%;">WFT</span>
<span class="t fs" style="left:1103.40px;top:159.08px;font-size:8.2px;line-height:12px;color:#1f2125;transform:scaleX(0.939);transform-origin:0 50%;">&lt;251x1000 double&gt;</span>
<span class="t fs" style="left:1190.20px;top:159.08px;font-size:8.2px;line-height:12px;color:#1f2125;transform:scaleX(0.894);transform-origin:0 50%;">1.1812e-...</span>
<span class="t fs" style="left:1233.60px;top:159.08px;font-size:8.2px;line-height:12px;color:#1f2125;transform:scaleX(0.847);transform-origin:0 50%;">0.5233...</span>
<svg style="left:1014.8px;top:171.3px" width="10" height="10" viewBox="0 0 9 9"><rect x="0.500" y="0.500" width="8" height="8" fill="#f7ec8a" stroke="#a08a2a" stroke-width=".9"/><path d="M4.500 0.500v8M0.500 4.500h8" stroke="#a08a2a" stroke-width=".9"/></svg>
<span class="t fs" style="left:1027.00px;top:170.50px;font-size:8.2px;line-height:12px;color:#1f2125;transform:scaleX(0.982);transform-origin:0 50%;">WT</span>
<span class="t fs" style="left:1103.40px;top:170.50px;font-size:8.2px;line-height:12px;color:#1f2125;transform:scaleX(0.939);transform-origin:0 50%;">&lt;143x1000 double&gt;</span>
<span class="t fs" style="left:1190.20px;top:170.50px;font-size:8.2px;line-height:12px;color:#1f2125;transform:scaleX(0.894);transform-origin:0 50%;">3.9830e-...</span>
<span class="t fs" style="left:1233.60px;top:170.50px;font-size:8.2px;line-height:12px;color:#1f2125;transform:scaleX(0.847);transform-origin:0 50%;">0.5322...</span>
<svg style="left:1014.8px;top:182.72px" width="10" height="10" viewBox="0 0 9 9"><rect x="0.500" y="0.500" width="8" height="8" fill="#f7ec8a" stroke="#a08a2a" stroke-width=".9"/><path d="M4.500 0.500v8M0.500 4.500h8" stroke="#a08a2a" stroke-width=".9"/></svg>
<span class="t fs" style="left:1027.00px;top:181.92px;font-size:8.2px;line-height:12px;color:#1f2125;transform:scaleX(0.947);transform-origin:0 50%;">ans</span>
<span class="t fs" style="left:1103.40px;top:181.92px;font-size:8.2px;line-height:12px;color:#1f2125;transform:scaleX(0.958);transform-origin:0 50%;">[183,1]</span>
<span class="t fs" style="left:1190.20px;top:181.92px;font-size:8.2px;line-height:12px;color:#1f2125;transform:scaleX(0.767);transform-origin:0 50%;">1</span>
<span class="t fs" style="left:1233.60px;top:181.92px;font-size:8.2px;line-height:12px;color:#1f2125;transform:scaleX(0.878);transform-origin:0 50%;">183</span>
<svg style="left:1014.8px;top:194.14px" width="10" height="10" viewBox="0 0 9 9"><rect x="0.500" y="0.500" width="8" height="8" fill="#f7ec8a" stroke="#a08a2a" stroke-width=".9"/><path d="M4.500 0.500v8M0.500 4.500h8" stroke="#a08a2a" stroke-width=".9"/></svg>
<span class="t fs" style="left:1027.00px;top:193.34px;font-size:8.2px;line-height:12px;color:#1f2125;transform:scaleX(1.028);transform-origin:0 50%;">freq</span>
<span class="t fs" style="left:1103.40px;top:193.34px;font-size:8.2px;line-height:12px;color:#1f2125;transform:scaleX(0.970);transform-origin:0 50%;">&lt;143x1 double&gt;</span>
<span class="t fs" style="left:1190.20px;top:193.34px;font-size:8.2px;line-height:12px;color:#1f2125;transform:scaleX(0.898);transform-origin:0 50%;">0.2044</span>
<span class="t fs" style="left:1233.60px;top:193.34px;font-size:8.2px;line-height:12px;color:#1f2125;transform:scaleX(0.878);transform-origin:0 50%;">4.8917</span>
<svg style="left:1014.8px;top:205.56px" width="10" height="10" viewBox="0 0 9 9"><rect x="0.500" y="0.500" width="8" height="8" fill="#f7ec8a" stroke="#a08a2a" stroke-width=".9"/><path d="M4.500 0.500v8M0.500 4.500h8" stroke="#a08a2a" stroke-width=".9"/></svg>
<span class="t fs" style="left:1027.00px;top:204.76px;font-size:8.2px;line-height:12px;color:#1f2125;transform:scaleX(1.098);transform-origin:0 50%;">fs</span>
<span class="t fs" style="left:1103.40px;top:204.76px;font-size:8.2px;line-height:12px;color:#1f2125;transform:scaleX(0.878);transform-origin:0 50%;">20</span>
<span class="t fs" style="left:1190.20px;top:204.76px;font-size:8.2px;line-height:12px;color:#1f2125;transform:scaleX(0.878);transform-origin:0 50%;">20</span>
<span class="t fs" style="left:1233.60px;top:204.76px;font-size:8.2px;line-height:12px;color:#1f2125;transform:scaleX(0.878);transform-origin:0 50%;">20</span>
<svg style="left:1014.8px;top:216.98000000000002px" width="10" height="10" viewBox="0 0 9 9"><rect x="0.500" y="0.500" width="8" height="8" fill="#f7ec8a" stroke="#a08a2a" stroke-width=".9"/><path d="M4.500 0.500v8M0.500 4.500h8" stroke="#a08a2a" stroke-width=".9"/></svg>
<span class="t fs" style="left:1027.00px;top:216.18px;font-size:8.2px;line-height:12px;color:#1f2125;transform:scaleX(0.955);transform-origin:0 50%;">sig</span>
<span class="t fs" style="left:1103.40px;top:216.18px;font-size:8.2px;line-height:12px;color:#1f2125;transform:scaleX(0.940);transform-origin:0 50%;">&lt;1x1000 double&gt;</span>
<span class="t fs" style="left:1190.20px;top:216.18px;font-size:8.2px;line-height:12px;color:#1f2125;transform:scaleX(0.889);transform-origin:0 50%;">-2.3818</span>
<span class="t fs" style="left:1233.60px;top:216.18px;font-size:8.2px;line-height:12px;color:#1f2125;transform:scaleX(0.877);transform-origin:0 50%;">3</span>
<svg style="left:1014.8px;top:228.4px" width="10" height="10" viewBox="0 0 9 9"><rect x="0.500" y="0.500" width="8" height="8" fill="#f7ec8a" stroke="#a08a2a" stroke-width=".9"/><path d="M4.500 0.500v8M0.500 4.500h8" stroke="#a08a2a" stroke-width=".9"/></svg>
<span class="t fs" style="left:1027.00px;top:227.60px;font-size:8.2px;line-height:12px;color:#1f2125;transform:scaleX(1.315);transform-origin:0 50%;">t</span>
<span class="t fs" style="left:1103.40px;top:227.60px;font-size:8.2px;line-height:12px;color:#1f2125;transform:scaleX(0.940);transform-origin:0 50%;">&lt;1x1000 double&gt;</span>
<span class="t fs" style="left:1190.20px;top:227.60px;font-size:8.2px;line-height:12px;color:#1f2125;transform:scaleX(0.877);transform-origin:0 50%;">0</span>
<span class="t fs" style="left:1233.60px;top:227.60px;font-size:8.2px;line-height:12px;color:#1f2125;transform:scaleX(0.878);transform-origin:0 50%;">49.9500</span>
<svg style="left:1014.8px;top:239.82px" width="10" height="10" viewBox="0 0 9 9"><rect x="0.500" y="0.500" width="8" height="8" fill="#f7ec8a" stroke="#a08a2a" stroke-width=".9"/><path d="M4.500 0.500v8M0.500 4.500h8" stroke="#a08a2a" stroke-width=".9"/></svg>
<span class="t fs" style="left:1027.00px;top:239.02px;font-size:8.2px;line-height:12px;color:#1f2125;transform:scaleX(0.973);transform-origin:0 50%;">wfreq</span>
<span class="t fs" style="left:1103.40px;top:239.02px;font-size:8.2px;line-height:12px;color:#1f2125;transform:scaleX(0.970);transform-origin:0 50%;">&lt;214x1 double&gt;</span>
<span class="t fs" style="left:1190.20px;top:239.02px;font-size:8.2px;line-height:12px;color:#1f2125;transform:scaleX(0.898);transform-origin:0 50%;">0.1307</span>
<span class="t fs" style="left:1233.60px;top:239.02px;font-size:8.2px;line-height:12px;color:#1f2125;transform:scaleX(0.878);transform-origin:0 50%;">15.3003</span>
<svg style="left:1014.8px;top:251.24px" width="10" height="10" viewBox="0 0 9 9"><rect x="0.500" y="0.500" width="8" height="8" fill="#f9f3b8" stroke="#a08a2a" stroke-width=".9"/><path d="M2.500 1.500v6M2.500 3h3.500M2.500 5.500h3.500" stroke="#6b5e1f" stroke-width=".8" fill="none"/></svg>
<span class="t fs" style="left:1027.00px;top:250.44px;font-size:8.2px;line-height:12px;color:#1f2125;transform:scaleX(1.012);transform-origin:0 50%;">wopt</span>
<span class="t fs" style="left:1103.40px;top:250.44px;font-size:8.2px;line-height:12px;color:#1f2125;transform:scaleX(0.965);transform-origin:0 50%;">&lt;1x1 struct&gt;</span>
<div style="left:1014px;top:663px;width:265px;height:14px;background:linear-gradient(#f0f1f3 0%,#e6e7ea 45%,#d9dadd 100%);border-top:1px solid #f8f8f9;border-bottom:1px solid #c9cacd;border-bottom:1px solid #c2c5cb;"></div>
<span class="t fs" style="left:1018.00px;top:664.00px;font-size:8.3px;line-height:12px;color:#5c6068;transform:scaleX(0.971);transform-origin:0 50%;">Command History</span>
<svg style="left:0;top:0" width="1280" height="720"><path d="M1229.8 670 h2.8 M1230.6 667.7 v4.6 M1232.6 667.7 v4.6" stroke="#17181b" stroke-width="1" fill="none"/><rect x="1232.6" y="669" width="3" height="2" fill="#17181b" opacity=".7"/><rect x="1242.6" y="667.7" width="4.8" height="4.8" fill="none" stroke="#17181b" stroke-width="1"/><path d="M1242.6 668 h4.8" stroke="#17181b" stroke-width="1.3"/><path d="M1255.3 671.9 L1258.4 668.7" stroke="#17181b" stroke-width="1.15" fill="none"/><path d="M1256.1 667.8 h3 v3z" fill="#17181b"/><path d="M1268.3 667.8 L1272.7 672.2 M1272.7 667.8 L1268.3 672.2" stroke="#17181b" stroke-width="1.2"/></svg>
<div style="left:0px;top:677px;width:1280px;height:17px;background:#f0f0f0;"></div>
<div style="left:1px;top:678.5px;width:35px;height:14px;background:linear-gradient(#fdfdfd,#ececec);border:1px solid #9da1a8;border-radius:2px;"></div>
<svg style="left:4px;top:681px" width="9" height="9" viewBox="0 0 9 9"><path d="M0.300 6.300 L3 4.800 L4.300 6 L6 0.800 L8.700 7.700 L6.500 6.200 L5 8.300 L3.200 6.800z" fill="#c54e2a"/><path d="M0.300 6.300 L3 4.800 L4.300 6 L3.500 7z" fill="#4f6696"/></svg>
<span class="t fs" style="left:14.50px;top:679.80px;font-size:8.8px;line-height:13px;color:#111;font-weight:bold;transform:scaleX(0.898);transform-origin:0 50%;">Start</span>
<div style="left:1228px;top:680px;width:25px;height:11px;border:1px solid #d6d6d6;border-top-color:#c0c0c0;border-left-color:#c0c0c0;background:#f3f3f3;"></div>
<span class="t fs" style="left:1232.50px;top:679.70px;font-size:8.2px;line-height:12px;color:#8d8d8d;transform:scaleX(0.845);transform-origin:0 50%;">OVR</span>
<div style="left:314px;top:35px;width:651px;height:601px;background:linear-gradient(#9aa6b8 0px,#5d6c80 14px);border-radius:6px 6px 1px 1px;opacity:.8;"></div>
<div style="left:315px;top:36px;width:649px;height:599px;background:linear-gradient(#b3c4da 0px,#c3d3e6 12px,#c6d8ea 20px,#c2d8ec 100%);border-radius:5px 5px 0 0;border:1px solid #e4ecf6;border-bottom-color:#c5d5e8;"></div>
<div style="left:315px;top:36px;width:649px;height:19px;background:linear-gradient(#b1c2d8,#bfd0e4 50%,#c7d6e8);border-radius:5px 5px 0 0;border-top:1px solid #e2eaf4;"></div>
<svg style="left:320.5px;top:42px" width="11" height="10.5" viewBox="0 0 11 10.5"><rect width="11" height="10.500" fill="#15100c"/><path d="M1 6.500 L4 5.300 L5.300 6.300 L6.800 1.500 L9.500 8.500 L7.300 7 L5.800 9 L4 7.600z" fill="#d9682a"/><path d="M1 6.500 L4 5.300 L5.300 6.300 L4.400 7.400z" fill="#6c84b4"/></svg>
<span class="t fs" style="left:334.40px;top:41.30px;font-size:8.4px;line-height:12px;color:#1e2024;transform:scaleX(0.865);transform-origin:0 50%;">Figure 1</span>
<div style="left:893px;top:42px;width:21px;height:11px;border:1px solid #8595ab;border-radius:2px;background:linear-gradient(#dbe4f0,#c3d0e2 50%,#b2c2d8 51%,#c6d3e5);"></div>
<div style="left:915px;top:42px;width:21px;height:11px;border:1px solid #8595ab;border-radius:2px;background:linear-gradient(#dbe4f0,#c3d0e2 50%,#b2c2d8 51%,#c6d3e5);"></div>
<div style="left:937px;top:42px;width:21.5px;height:11px;border:1px solid #8a4a44;border-radius:2px;background:linear-gradient(#dbb0a9,#cb8074 50%,#bf6052 51%,#cb7565);"></div>
<svg style="left:893px;top:42px" width="66" height="11" viewBox="0 0 66 11"><rect x="7.500" y="5.500" width="7" height="2.500" fill="#f4f7fb" stroke="#5d6b80" stroke-width=".8"/><rect x="28.500" y="3.500" width="7" height="5" fill="none" stroke="#5d6b80" stroke-width=".9"/><rect x="30.500" y="5" width="3" height="2" fill="#f4f7fb" stroke="#5d6b80" stroke-width=".5"/><path d="M52 3.200 L57.500 8 M57.500 3.200 L52 8" stroke="#fff" stroke-width="1.800"/></svg>
<div style="left:320px;top:55px;width:639px;height:17px;background:linear-gradient(#fbfcfe 0%,#f1f4f9 48%,#e2e7f1 52%,#e9edf5 100%);border-top:1px solid #fff;"></div>
<div style="left:320px;top:71px;width:639px;height:1px;background:#bcc3d0;"></div>
<span class="t fs" style="left:324.40px;top:57.20px;font-size:8.4px;line-height:12px;color:#26282d;transform:scaleX(0.926);transform-origin:0 50%;">File</span>
<span class="t fs" style="left:347.80px;top:57.20px;font-size:8.4px;line-height:12px;color:#26282d;transform:scaleX(0.914);transform-origin:0 50%;">Edit</span>
<span class="t fs" style="left:372.80px;top:57.20px;font-size:8.4px;line-height:12px;color:#26282d;transform:scaleX(0.899);transform-origin:0 50%;">View</span>
<span class="t fs" style="left:399.40px;top:57.20px;font-size:8.4px;line-height:12px;color:#26282d;transform:scaleX(0.955);transform-origin:0 50%;">Insert</span>
<span class="t fs" style="left:430.30px;top:57.20px;font-size:8.4px;line-height:12px;color:#26282d;transform:scaleX(0.956);transform-origin:0 50%;">Tools</span>
<span class="t fs" style="left:460.00px;top:57.20px;font-size:8.4px;line-height:12px;color:#26282d;transform:scaleX(0.911);transform-origin:0 50%;">Desktop</span>
<span class="t fs" style="left:499.40px;top:57.20px;font-size:8.4px;line-height:12px;color:#26282d;transform:scaleX(0.983);transform-origin:0 50%;">Window</span>
<span class="t fs" style="left:540.00px;top:57.20px;font-size:8.4px;line-height:12px;color:#26282d;transform:scaleX(0.940);transform-origin:0 50%;">Help</span>
<svg style="left:0;top:0" width="1280" height="720"><path d="M951.300 60.800 L954.600 64.100" stroke="#222" stroke-width="1.100" fill="none"/><path d="M955.300 61.600 v3.300 h-3.300z" fill="#222"/></svg>
<div style="left:320px;top:72px;width:639px;height:17px;background:linear-gradient(#fafafa,#eeeeee);"></div>
<div style="left:320px;top:89px;width:639px;height:1px;background:#9b9b9b;"></div>
<div style="left:386.3px;top:73.5px;width:15.5px;height:14px;border:1px solid #70757e;border-radius:2px;background:linear-gradient(#c9cbd1,#dddfe3);"></div>
<svg style="left:321px;top:74.2px" width="12" height="12" viewBox="0 0 12 12"><path d="M2 1.500 h5 l3 3 v7 h-8z" fill="#fff" stroke="#8a8f98" stroke-width="1"/><path d="M7 1.500 v3 h3" fill="none" stroke="#8a8f98" stroke-width=".8"/><rect x="0.800" y="0.500" width="2.400" height="2.400" fill="#f5eaa0" stroke="#bba84a" stroke-width=".5"/></svg>
<svg style="left:336px;top:74.2px" width="12" height="12" viewBox="0 0 12 12"><path d="M0.800 3.500 h3.500 l1 1.200 h5.500 v7 h-10z" fill="#ead25a" stroke="#b0952a" stroke-width=".8"/><path d="M2.500 6.500 h9 l-1.500 5.200 h-9.200z" fill="#f7e98a" stroke="#b0952a" stroke-width=".7"/><path d="M7 2.200 q2.500-1.800 3.500.8" fill="none" stroke="#5a7a3a" stroke-width=".8"/></svg>
<svg style="left:352px;top:74.2px" width="12" height="12" viewBox="0 0 12 12"><rect x="1.800" y="2.300" width="8.600" height="8.600" rx=".6" fill="#3f4292" stroke="#2a2c6e" stroke-width=".7"/><rect x="3.400" y="2.600" width="5.400" height="3.600" fill="#eceef8"/><rect x="3.900" y="7.800" width="4.400" height="3.100" fill="#b9bbd6"/><rect x="4.600" y="8.300" width="1.300" height="2.200" fill="#2a2c6e"/></svg>
<svg style="left:367px;top:74.2px" width="12" height="12" viewBox="0 0 12 12"><path d="M4 2 h4 l.8 3.800 h-5.600z" fill="#fff" stroke="#9a9fa8" stroke-width=".7"/><rect x="2" y="5.600" width="8" height="3.800" rx="1" fill="#c5c8cf" stroke="#858a93" stroke-width=".7"/><rect x="3.600" y="8.200" width="4.800" height="2.600" fill="#f6f6f6" stroke="#9a9fa8" stroke-width=".5"/><circle cx="8.600" cy="6.800" r=".5" fill="#6a8a5a"/></svg>
<svg style="left:388.5px;top:74.2px" width="12" height="12" viewBox="0 0 12 12"><path d="M4 1.800 v8 l1.900-1.800 l1.400 3 l1.300-.6 l-1.400-3 h2.700z" fill="#fff" stroke="#222" stroke-width=".85"/></svg>
<svg style="left:408.5px;top:74.2px" width="12" height="12" viewBox="0 0 12 12"><circle cx="4.500" cy="4.500" r="3.300" fill="#eef3fb" stroke="#6c7482" stroke-width="1"/><path d="M3 4.500h3M4.500 3v3" stroke="#30343b" stroke-width="1"/><path d="M7 7 L11 11.500" stroke="#b48a3c" stroke-width="1.900"/></svg>
<svg style="left:423.5px;top:74.2px" width="12" height="12" viewBox="0 0 12 12"><circle cx="4.500" cy="4.500" r="3.300" fill="#eef3fb" stroke="#8a909c" stroke-width="1"/><path d="M3 4.500h3" stroke="#50545b" stroke-width="1"/><path d="M7 7 L11 11.500" stroke="#b9a27a" stroke-width="1.900"/></svg>
<svg style="left:438.5px;top:74.2px" width="12" height="12" viewBox="0 0 12 12"><path d="M3.300 6.500 v-3.300 q.6-.8 1.200 0 v2.300 v-3.300 q.6-.8 1.200 0 v3.200 v-2.800 q.6-.8 1.200 0 v3 v-2 q.6-.8 1.200 0 v4.400 q0 2.600-2.400 3 h-1.600 q-1.400-.3-2.800-3.200 q-.5-1.300.7-1.100z" fill="#fff" stroke="#5a5a5a" stroke-width=".7" stroke-linejoin="round"/></svg>
<svg style="left:454px;top:74.2px" width="12" height="12" viewBox="0 0 12 12"><path d="M2.500 3.500 A4.600 4.600 0 1 1 2 8" fill="none" stroke="#2c2f36" stroke-width="1.300"/><path d="M0.500 1.500 L1 5.500 L4.800 4z" fill="#2c2f36"/><ellipse cx="6.300" cy="6.800" rx="2.300" ry="1.200" fill="none" stroke="#2c2f36" stroke-width=".7"/><path d="M4 6.800 v2 q2.300 1.500 4.600 0 v-2" fill="none" stroke="#2c2f36" stroke-width=".7"/></svg>
<svg style="left:469.5px;top:74.2px" width="12" height="12" viewBox="0 0 12 12"><rect x="4.500" y="1" width="6.500" height="5.500" fill="#f3eea0" stroke="#9a9440" stroke-width=".7"/><path d="M1 6.500 h6 M4 3.500 v6.500" stroke="#111" stroke-width="1.400"/><path d="M6 9 l3.500 2.500" stroke="#333" stroke-width=".9"/></svg>
<svg style="left:485px;top:74.2px" width="12" height="12" viewBox="0 0 12 12"><path d="M10.500 1 L5.500 6.500" stroke="#6d727b" stroke-width="1.600"/><path d="M5.800 6 l1 1 q-2 3.500-5.300 3.700 q2.500-1.800 2.300-3.800z" fill="#2a2c30"/><rect x="7.500" y="8" width="3.300" height="3.300" fill="#d22a2a"/></svg>
<svg style="left:513px;top:74.2px" width="12" height="12" viewBox="0 0 12 12"><rect x="1.500" y="1.500" width="8.500" height="7" fill="#f5f6f9" stroke="#3c414a" stroke-width="1"/><rect x="1.500" y="1.500" width="8.500" height="1.800" fill="#3c414a"/><ellipse cx="7" cy="9.800" rx="3.800" ry="1.500" fill="#d9dde5" stroke="#6d7480" stroke-width=".8"/><ellipse cx="4" cy="9.800" rx="2.500" ry="1.200" fill="none" stroke="#6d7480" stroke-width=".8"/></svg>
<svg style="left:534px;top:74.2px" width="12" height="12" viewBox="0 0 12 12"><rect x="3" y="1" width="6" height="10.500" rx=".800" fill="#cfe6e9" stroke="#7f8a93" stroke-width=".9"/><rect x="4" y="2" width="4" height="8.500" fill="#a8d0de"/></svg>
<svg style="left:549.3px;top:74.2px" width="12" height="12" viewBox="0 0 12 12"><rect x="1" y="1" width="10" height="10" fill="#f7f7fb" stroke="#6b6f80" stroke-width=".9"/><rect x="2.500" y="3" width="2.500" height="1.800" fill="#c44"/><rect x="2.500" y="7" width="2.500" height="1.800" fill="#46a"/><path d="M6.500 4h3M6.500 8h3" stroke="#222" stroke-width="1.200"/></svg>
<svg style="left:570px;top:74.2px" width="12" height="12" viewBox="0 0 12 12"><rect x="2.500" y="2.500" width="7" height="7" fill="#8f9194" stroke="#a3a5a8" stroke-width=".8"/></svg>
<svg style="left:585.3px;top:74.2px" width="12" height="12" viewBox="0 0 12 12"><rect x="1" y="1.500" width="10" height="9" fill="#fff" stroke="#2e3035" stroke-width="1.100"/><path d="M3.500 1.500 v6.500 M8.500 1.500 v6.500 M1 8 h10" stroke="#2e3035" stroke-width="1"/></svg>
<div style="left:382px;top:74px;width:1px;height:13px;background:#c2c2c2;"></div>
<div style="left:403.3px;top:74px;width:1px;height:13px;background:#c2c2c2;"></div>
<div style="left:508.7px;top:74px;width:1px;height:13px;background:#c2c2c2;"></div>
<div style="left:529.7px;top:74px;width:1px;height:13px;background:#c2c2c2;"></div>
<div style="left:565.6px;top:74px;width:1px;height:13px;background:#c2c2c2;"></div>
<svg style="left:0;top:0" width="1280" height="720"><path d="M501 79.300 h4 l-2 2.500z" fill="#333"/></svg>
<div style="left:320px;top:90px;width:639px;height:539.5px;background:#cccccc;"></div>
<div style="left:320px;top:629.5px;width:639px;height:1px;background:#b4c0d0;"></div>
<svg style="left:0;top:0;font-family:'Liberation Sans',sans-serif" width="1280" height="720" viewBox="0 0 1280 720"><rect x="415.3" y="118.5" width="512.3" height="134.5" fill="#fff"/><polygon points="512.4,138.2 513.4,136.0 514.4,134.2 515.4,132.8 516.4,131.8 517.4,131.2 518.4,131.1 519.4,131.4 520.4,132.1 521.4,133.2 522.4,134.7 523.4,136.5 524.4,138.7 525.4,141.1 526.4,143.8 527.4,146.6 528.4,149.6 529.4,152.8 530.4,155.9 531.4,159.1 532.4,162.3 533.4,165.3 534.4,168.3 535.4,171.0 536.4,173.5 537.4,175.8 538.4,177.8 539.4,179.5 540.4,180.8 541.4,181.8 542.4,182.3 543.4,182.5 544.4,182.3 545.4,181.8 546.4,180.8 547.4,179.5 548.4,177.8 549.4,175.8 550.4,173.5 551.4,171.0 552.4,168.3 553.4,165.3 554.4,162.3 555.4,159.1 556.4,155.9 557.4,152.8 558.4,149.6 559.4,146.6 560.4,143.8 561.4,141.1 562.4,138.7 563.4,136.5 564.4,134.7 565.4,133.2 566.4,132.1 567.4,131.4 568.4,131.1 569.4,131.2 570.4,131.8 571.4,132.8 572.4,134.2 573.4,136.0 574.4,138.2 574.4,138.8 573.4,136.7 572.4,135.0 571.4,133.8 570.4,133.1 569.4,132.8 568.4,133.1 567.4,133.8 566.4,134.9 565.4,136.6 564.4,138.8 563.4,141.4 562.4,144.4 561.4,147.8 560.4,151.7 559.4,155.9 558.4,160.5 557.4,165.4 556.4,170.6 555.4,176.0 554.4,181.7 553.4,187.6 552.4,193.7 551.4,199.9 550.4,206.2 549.4,212.6 548.4,218.8 547.4,224.6 546.4,229.9 545.4,234.9 544.4,240.1 543.4,246.2 542.4,240.1 541.4,234.9 540.4,229.9 539.4,224.6 538.4,218.8 537.4,212.6 536.4,206.2 535.4,199.9 534.4,193.7 533.4,187.6 532.4,181.7 531.4,176.0 530.4,170.6 529.4,165.4 528.4,160.5 527.4,155.9 526.4,151.7 525.4,147.8 524.4,144.4 523.4,141.4 522.4,138.8 521.4,136.6 520.4,134.9 519.4,133.8 518.4,133.1 517.4,132.8 516.4,133.1 515.4,133.8 514.4,135.0 513.4,136.7 512.4,138.8" fill="#fbf77e" stroke="#2a2a10" stroke-width="0.6" stroke-linejoin="round"/><polygon points="634.4,252.5 635.4,252.4 636.4,252.4 637.4,252.3 638.4,252.2 639.4,252.2 640.4,252.1 641.4,252.0 642.4,251.9 643.4,251.8 644.4,251.6 645.4,251.5 646.4,251.3 647.4,251.1 648.4,251.0 649.4,250.7 650.4,250.5 651.4,250.3 652.4,250.0 653.4,249.7 654.4,249.4 655.4,249.0 656.4,248.7 657.4,248.2 658.4,247.8 659.4,247.3 660.4,246.8 661.4,246.2 662.4,245.6 663.4,245.0 664.4,244.2 665.4,243.5 666.4,242.7 667.4,241.8 668.4,240.8 669.4,239.8 670.4,238.7 671.5,237.6 672.5,236.3 673.5,235.0 674.5,233.6 675.5,232.2 676.5,230.6 677.5,228.9 678.5,227.2 679.5,225.3 680.5,223.4 681.5,221.3 682.5,219.2 683.5,216.9 684.5,214.6 685.5,212.1 686.5,209.6 687.5,207.0 688.5,204.2 689.5,201.4 690.5,198.5 691.5,195.5 692.5,192.5 693.5,189.4 694.5,186.2 695.5,183.0 696.5,179.8 697.5,176.5 698.5,173.2 699.5,170.0 700.5,166.7 701.5,163.6 702.5,160.5 703.5,157.4 704.5,154.5 705.5,151.7 706.5,149.1 707.5,146.7 708.5,144.5 709.5,142.5 710.5,140.7 711.5,139.3 712.5,138.1 713.5,137.2 714.5,136.6 715.5,136.3 716.5,136.2 717.5,136.2 718.5,136.4 719.5,136.6 720.5,136.2 721.5,135.4 722.5,134.4 723.5,133.3 724.5,132.4 725.5,131.8 726.5,131.4 727.5,131.4 728.5,132.1 729.5,133.1 730.5,134.3 731.5,135.5 732.5,136.9 733.5,138.3 734.5,139.9 735.5,141.6 736.5,143.6 737.5,145.8 738.5,148.1 739.5,150.7 740.5,153.4 741.5,156.3 742.5,159.2 743.5,162.3 744.5,165.5 745.5,168.7 746.5,171.9 747.5,175.2 748.5,178.5 749.5,181.7 750.5,184.9 751.5,188.1 752.5,191.3 753.5,194.3 754.5,197.3 755.5,200.3 756.5,203.1 757.5,205.9 758.5,208.6 759.5,211.1 760.5,213.6 761.5,216.0 762.5,218.3 763.5,220.5 764.5,222.6 765.5,224.6 766.5,226.4 767.5,228.2 768.5,229.9 769.5,231.5 770.5,233.1 771.5,234.5 772.5,235.8 773.5,237.1 774.5,238.3 775.5,239.4 776.5,240.4 777.5,241.4 778.5,242.3 779.5,243.2 780.5,243.9 781.5,244.7 782.5,245.4 783.5,246.0 784.5,246.6 785.5,247.1 786.5,247.6 787.5,248.1 788.5,248.5 789.5,248.9 790.5,249.2 791.5,249.6 792.5,249.9 793.5,250.2 794.5,250.4 795.5,250.7 796.5,250.9 797.5,251.1 798.5,251.3 799.5,251.4 800.5,251.6 801.5,251.7 802.5,251.8 803.5,251.9 804.5,252.0 805.5,252.1 806.5,252.2 807.5,252.3 808.5,252.4 809.5,252.4 809.5,252.9 808.5,252.9 807.5,252.9 806.5,252.9 805.5,252.9 804.5,252.9 803.5,253.0 802.5,253.0 801.5,253.0 800.5,253.0 799.5,253.0 798.5,252.9 797.5,252.9 796.5,252.8 795.5,252.8 794.5,252.7 793.5,252.6 792.5,252.6 791.5,252.5 790.5,252.4 789.5,252.3 788.5,252.2 787.5,252.2 786.5,252.1 785.5,252.1 784.5,252.0 783.5,252.0 782.5,252.0 781.5,252.0 780.5,252.1 779.5,252.2 778.5,252.3 777.5,252.5 776.5,252.7 775.5,253.0 774.5,252.7 773.5,252.3 772.5,251.8 771.5,251.3 770.5,250.8 769.5,250.2 768.5,249.5 767.5,248.8 766.5,248.1 765.5,247.3 764.5,246.6 763.5,245.8 762.5,245.1 761.5,244.4 760.5,243.8 759.5,243.2 758.5,242.7 757.5,242.4 756.5,242.2 755.5,242.2 754.5,242.4 753.5,242.8 752.5,243.4 751.5,244.3 750.5,245.5 749.5,246.9 748.5,248.7 747.5,250.8 746.5,252.6 745.5,250.0 744.5,246.9 743.5,243.5 742.5,239.8 741.5,235.8 740.5,231.5 739.5,226.9 738.5,222.2 737.5,217.2 736.5,212.1 735.5,206.9 734.5,201.6 733.5,196.3 732.5,190.9 731.5,185.7 730.5,180.5 729.5,175.4 728.5,170.6 727.5,165.9 726.5,161.5 725.5,157.4 724.5,153.7 723.5,150.2 722.5,148.3 721.5,151.6 720.5,155.1 719.5,159.0 718.5,163.3 717.5,167.8 716.5,172.5 715.5,177.4 714.5,182.5 713.5,187.8 712.5,193.1 711.5,198.4 710.5,203.7 709.5,209.0 708.5,214.2 707.5,219.2 706.5,224.1 705.5,228.8 704.5,233.2 703.5,237.4 702.5,241.3 701.5,244.9 700.5,248.2 699.5,251.1 698.5,252.2 697.5,249.9 696.5,248.0 695.5,246.3 694.5,245.0 693.5,243.9 692.5,243.1 691.5,242.6 690.5,242.3 689.5,242.2 688.5,242.3 687.5,242.5 686.5,242.9 685.5,243.4 684.5,244.0 683.5,244.7 682.5,245.4 681.5,246.1 680.5,246.9 679.5,247.6 678.5,248.4 677.5,249.1 676.5,249.8 675.5,250.4 674.5,251.0 673.5,251.5 672.5,252.0 671.5,252.4 670.4,252.8 669.4,252.9 668.4,252.6 667.4,252.4 666.4,252.3 665.4,252.1 664.4,252.1 663.4,252.0 662.4,252.0 661.4,252.0 660.4,252.0 659.4,252.1 658.4,252.1 657.4,252.2 656.4,252.3 655.4,252.4 654.4,252.4 653.4,252.5 652.4,252.6 651.4,252.7 650.4,252.7 649.4,252.8 648.4,252.8 647.4,252.9 646.4,252.9 645.4,253.0 644.4,253.0 643.4,253.0 642.4,253.0 641.4,253.0 640.4,252.9 639.4,252.9 638.4,252.9 637.4,252.9 636.4,252.9 635.4,253.0 634.4,253.0" fill="#fbf77e" stroke="#2a2a10" stroke-width="0.6" stroke-linejoin="round"/><polyline points="415.3,253.0 416.3,253.0 417.3,253.0 418.3,253.0 419.3,253.0 420.3,253.0 421.3,253.0 422.3,253.0 423.3,253.0 424.3,253.0 425.3,253.0 426.3,253.0 427.3,253.0 428.3,253.0 429.3,253.0 430.3,253.0 431.3,253.0 432.3,253.0 433.3,253.0 434.3,253.0 435.3,253.0 436.3,253.0 437.3,253.0 438.3,253.0 439.3,253.0 440.3,253.0 441.3,253.0 442.3,253.0 443.3,253.0 444.3,253.0 445.3,253.0 446.3,253.0 447.3,253.0 448.3,253.0 449.3,253.0 450.3,253.0 451.3,253.0 452.3,253.0 453.3,253.0 454.3,252.9 455.3,252.9 456.3,252.9 457.3,252.9 458.3,252.8 459.3,252.8 460.3,252.8 461.3,252.7 462.3,252.6 463.3,252.5 464.3,252.4 465.3,252.3 466.3,252.2 467.3,252.0 468.3,251.8 469.3,251.5 470.3,251.2 471.3,250.9 472.3,250.5 473.3,250.0 474.3,249.5 475.3,248.9 476.3,248.2 477.3,247.4 478.3,246.5 479.3,245.5 480.3,244.3 481.3,243.0 482.3,241.6 483.3,240.0 484.3,238.2 485.3,236.2 486.3,234.1 487.3,231.8 488.3,229.2 489.3,226.5 490.3,223.6 491.3,220.4 492.3,217.1 493.3,213.5 494.3,209.8 495.3,205.9 496.3,201.9 497.3,197.7 498.3,193.4 499.3,189.0 500.3,184.6 501.4,180.1 502.4,175.6 503.4,171.1 504.4,166.7 505.4,162.4 506.4,158.3 507.4,154.3 508.4,150.5 509.4,147.1 510.4,143.9 511.4,141.0 512.4,138.5 513.4,136.3 514.4,134.6 515.4,133.3 516.4,132.4 517.4,132.0 518.4,132.1 519.4,132.6 520.4,133.5 521.4,134.9 522.4,136.7 523.4,138.9 524.4,141.5 525.4,144.4 526.4,147.7 527.4,151.2 528.4,155.0 529.4,159.0 530.4,163.1 531.4,167.4 532.4,171.7 533.4,176.1 534.4,180.4 535.4,184.7 536.4,188.8 537.4,192.8 538.4,196.6 539.4,200.0 540.4,203.0 541.4,205.5 542.4,207.3 543.4,208.1 544.4,207.3 545.4,205.5 546.4,203.0 547.4,200.0 548.4,196.6 549.4,192.8 550.4,188.8 551.4,184.7 552.4,180.4 553.4,176.1 554.4,171.7 555.4,167.4 556.4,163.1 557.4,159.0 558.4,155.0 559.4,151.2 560.4,147.7 561.4,144.4 562.4,141.5 563.4,138.9 564.4,136.7 565.4,134.9 566.4,133.5 567.4,132.6 568.4,132.1 569.4,132.0 570.4,132.4 571.4,133.3 572.4,134.6 573.4,136.3 574.4,138.5 575.4,141.0 576.4,143.9 577.4,147.1 578.4,150.5 579.4,154.3 580.4,158.3 581.4,162.4 582.4,166.7 583.4,171.1 584.4,175.6 585.4,180.1 586.4,184.6 587.4,189.0 588.4,193.4 589.4,197.7 590.4,201.9 591.4,205.9 592.4,209.8 593.4,213.5 594.4,217.1 595.4,220.4 596.4,223.6 597.4,226.5 598.4,229.2 599.4,231.8 600.4,234.1 601.4,236.2 602.4,238.2 603.4,240.0 604.4,241.6 605.4,243.0 606.4,244.3 607.4,245.5 608.4,246.5 609.4,247.4 610.4,248.2 611.4,248.9 612.4,249.5 613.4,250.0 614.4,250.5 615.4,250.9 616.4,251.2 617.4,251.5 618.4,251.8 619.4,252.0 620.4,252.2 621.4,252.3 622.4,252.4 623.4,252.5 624.4,252.6 625.4,252.7 626.4,252.7 627.4,252.8 628.4,252.8 629.4,252.8 630.4,252.8 631.4,252.8 632.4,252.8 633.4,252.8 634.4,252.7 635.4,252.7 636.4,252.7 637.4,252.6 638.4,252.6 639.4,252.6 640.4,252.5 641.4,252.5 642.4,252.4 643.4,252.3 644.4,252.3 645.4,252.2 646.4,252.1 647.4,252.0 648.4,251.9 649.4,251.8 650.4,251.6 651.4,251.5 652.4,251.3 653.4,251.2 654.4,251.0 655.4,250.8 656.4,250.6 657.4,250.3 658.4,250.1 659.4,249.8 660.4,249.5 661.4,249.2 662.4,248.9 663.4,248.5 664.4,248.1 665.4,247.7 666.4,247.3 667.4,246.8 668.4,246.3 669.4,245.8 670.4,245.2 671.5,244.5 672.5,243.8 673.5,242.9 674.5,242.1 675.5,241.1 676.5,240.1 677.5,239.0 678.5,237.8 679.5,236.6 680.5,235.3 681.5,234.0 682.5,232.6 683.5,231.1 684.5,229.6 685.5,228.0 686.5,226.4 687.5,224.8 688.5,223.2 689.5,221.5 690.5,219.8 691.5,218.1 692.5,216.4 693.5,214.6 694.5,212.9 695.5,211.0 696.5,209.2 697.5,207.2 698.5,205.1 699.5,202.8 700.5,200.2 701.5,197.4 702.5,194.5 703.5,191.4 704.5,188.2 705.5,185.0 706.5,181.6 707.5,178.3 708.5,174.9 709.5,171.6 710.5,168.3 711.5,165.1 712.5,162.0 713.5,159.1 714.5,156.4 715.5,154.0 716.5,151.7 717.5,149.8 718.5,148.1 719.5,146.8 720.5,145.9 721.5,145.2 722.5,145.0 723.5,145.1 724.5,145.6 725.5,146.4 726.5,147.6 727.5,149.1 728.5,150.9 729.5,153.0 730.5,155.4 731.5,158.0 732.5,160.9 733.5,163.9 734.5,167.0 735.5,170.2 736.5,173.6 737.5,176.9 738.5,180.3 739.5,183.6 740.5,186.9 741.5,190.2 742.5,193.3 743.5,196.3 744.5,199.1 745.5,201.8 746.5,204.2 747.5,206.4 748.5,208.4 749.5,210.3 750.5,212.1 751.5,213.9 752.5,215.7 753.5,217.4 754.5,219.1 755.5,220.8 756.5,222.5 757.5,224.2 758.5,225.8 759.5,227.4 760.5,229.0 761.5,230.5 762.5,232.0 763.5,233.4 764.5,234.8 765.5,236.1 766.5,237.3 767.5,238.5 768.5,239.7 769.5,240.7 770.5,241.7 771.5,242.6 772.5,243.4 773.5,244.2 774.5,244.9 775.5,245.6 776.5,246.1 777.5,246.7 778.5,247.1 779.5,247.6 780.5,248.0 781.5,248.4 782.5,248.7 783.5,249.1 784.5,249.4 785.5,249.7 786.5,250.0 787.5,250.2 788.5,250.5 789.5,250.7 790.5,250.9 791.5,251.1 792.5,251.3 793.5,251.4 794.5,251.6 795.5,251.7 796.5,251.8 797.5,252.0 798.5,252.1 799.5,252.2 800.5,252.2 801.5,252.3 802.5,252.4 803.5,252.4 804.5,252.5 805.5,252.5 806.5,252.6 807.5,252.6 808.5,252.7 809.5,252.7 810.5,252.7 811.5,252.7 812.5,252.8 813.5,252.8 814.5,252.8 815.5,252.8 816.5,252.9 817.5,252.9 818.5,252.9 819.5,252.9 820.5,252.9 821.5,252.9 822.5,252.9 823.5,252.9 824.5,252.9 825.5,252.9 826.5,253.0 827.5,253.0 828.5,253.0 829.5,253.0 830.5,253.0 831.5,253.0 832.5,253.0 833.5,253.0 834.5,253.0 835.5,253.0 836.5,253.0 837.5,253.0 838.5,253.0 839.5,253.0 840.5,253.0 841.5,253.0 842.6,253.0 843.6,253.0 844.6,253.0 845.6,253.0 846.6,253.0 847.6,253.0 848.6,253.0 849.6,253.0 850.6,253.0 851.6,253.0 852.6,253.0 853.6,253.0 854.6,253.0 855.6,253.0 856.6,253.0 857.6,253.0 858.6,253.0 859.6,253.0 860.6,253.0 861.6,253.0 862.6,253.0 863.6,253.0 864.6,253.0 865.6,253.0 866.6,253.0 867.6,253.0 868.6,253.0 869.6,253.0 870.6,253.0 871.6,253.0 872.6,253.0 873.6,253.0 874.6,253.0 875.6,253.0 876.6,253.0 877.6,253.0 878.6,253.0 879.6,253.0 880.6,253.0 881.6,253.0 882.6,253.0 883.6,253.0 884.6,253.0 885.6,253.0 886.6,253.0 887.6,253.0 888.6,253.0 889.6,253.0 890.6,253.0 891.6,253.0 892.6,253.0 893.6,253.0 894.6,253.0 895.6,253.0 896.6,253.0 897.6,253.0 898.6,253.0 899.6,253.0 900.6,253.0 901.6,253.0 902.6,253.0 903.6,253.0 904.6,253.0 905.6,253.0 906.6,253.0 907.6,253.0 908.6,253.0 909.6,253.0 910.6,253.0 911.6,253.0 912.6,253.0 913.6,253.0 914.6,253.0 915.6,253.0 916.6,253.0 917.6,253.0 918.6,253.0 919.6,253.0 920.6,253.0 921.6,253.0 922.6,253.0 923.6,253.0 924.6,253.0 925.6,253.0 926.6,253.0 927.6,253.0" fill="none" stroke="#0a0a0a" stroke-width="1.85" stroke-linejoin="round"/><path d="M466.5 253.0 v-5 M466.5 118.5 v5 M517.8 253.0 v-5 M517.8 118.5 v5 M569.0 253.0 v-5 M569.0 118.5 v5 M620.2 253.0 v-5 M620.2 118.5 v5 M671.5 253.0 v-5 M671.5 118.5 v5 M722.7 253.0 v-5 M722.7 118.5 v5 M773.9 253.0 v-5 M773.9 118.5 v5 M825.1 253.0 v-5 M825.1 118.5 v5 M876.4 253.0 v-5 M876.4 118.5 v5 M415.3 204.6 h5 M927.6 204.6 h-5 M415.3 156.2 h5 M927.6 156.2 h-5" stroke="#222" stroke-width="1" fill="none"/><rect x="415.3" y="118.5" width="512.3" height="134.5" fill="none" stroke="#2a2a2a" stroke-width=".8" opacity=".8"/><path d="M415.3 253.0 H927.6" stroke="#000" stroke-width="1.2"/><text x="412.5" y="258.2" text-anchor="end" font-size="14.5" fill="#141414">0</text><text x="412.5" y="209.79999999999998" text-anchor="end" font-size="14.5" fill="#141414">0.2</text><text x="412.5" y="161.39999999999998" text-anchor="end" font-size="14.5" fill="#141414">0.4</text><text x="369.2" y="186" text-anchor="middle" font-size="14.5" fill="#141414" transform="rotate(-90 369.2 186)" textLength="97" lengthAdjust="spacingAndGlyphs">Time-averaged</text><text x="386" y="186" text-anchor="middle" font-size="14.5" fill="#141414" transform="rotate(-90 386 186)" textLength="97" lengthAdjust="spacingAndGlyphs">WFT amplitude</text><text x="670.8" y="278" text-anchor="middle" font-size="14.5" fill="#141414" textLength="96.5" lengthAdjust="spacingAndGlyphs">WFT amplitude</text><text x="412.5" y="581.9" text-anchor="end" font-size="14.5" fill="#141414">0</text><text x="412.5" y="553.05" text-anchor="end" font-size="14.5" fill="#141414">5</text><text x="412.5" y="524.1999999999999" text-anchor="end" font-size="14.5" fill="#141414">10</text><text x="412.5" y="495.35" text-anchor="end" font-size="14.5" fill="#141414">15</text><text x="412.5" y="466.5" text-anchor="end" font-size="14.5" fill="#141414">20</text><text x="412.5" y="437.65" text-anchor="end" font-size="14.5" fill="#141414">25</text><text x="412.5" y="408.8" text-anchor="end" font-size="14.5" fill="#141414">30</text><text x="412.5" y="379.95000000000005" text-anchor="end" font-size="14.5" fill="#141414">35</text><text x="412.5" y="351.1" text-anchor="end" font-size="14.5" fill="#141414">40</text><text x="412.5" y="322.25000000000006" text-anchor="end" font-size="14.5" fill="#141414">45</text><text x="415.3" y="592.5" text-anchor="middle" font-size="14.5" fill="#141414">0</text><text x="466.53000000000003" y="592.5" text-anchor="middle" font-size="14.5" fill="#141414">0.5</text><text x="517.76" y="592.5" text-anchor="middle" font-size="14.5" fill="#141414">1</text><text x="568.99" y="592.5" text-anchor="middle" font-size="14.5" fill="#141414">1.5</text><text x="620.22" y="592.5" text-anchor="middle" font-size="14.5" fill="#141414">2</text><text x="671.45" y="592.5" text-anchor="middle" font-size="14.5" fill="#141414">2.5</text><text x="722.6800000000001" y="592.5" text-anchor="middle" font-size="14.5" fill="#141414">3</text><text x="773.91" y="592.5" text-anchor="middle" font-size="14.5" fill="#141414">3.5</text><text x="825.14" y="592.5" text-anchor="middle" font-size="14.5" fill="#141414">4</text><text x="876.37" y="592.5" text-anchor="middle" font-size="14.5" fill="#141414">4.5</text><text x="927.5999999999999" y="592.5" text-anchor="middle" font-size="14.5" fill="#141414">5</text><text x="670.5" y="609" text-anchor="middle" font-size="14.5" fill="#141414" textLength="97" lengthAdjust="spacingAndGlyphs">Frequency (Hz)</text><text x="390.5" y="433.5" text-anchor="middle" font-size="14.5" fill="#141414" transform="rotate(-90 390.5 433.5)" textLength="50" lengthAdjust="spacingAndGlyphs">Time (s)</text><defs><linearGradient id="a0" gradientUnits="userSpaceOnUse" x1="417.00" y1="0" x2="638.31" y2="0"><stop offset="0.0000" stop-color="#180f7e"/><stop offset="0.1544" stop-color="#180f7f"/><stop offset="0.2278" stop-color="#180f86"/><stop offset="0.2625" stop-color="#180f9c"/><stop offset="0.2857" stop-color="#180fbc"/><stop offset="0.3050" stop-color="#180fe9"/><stop offset="0.3089" stop-color="#1813f1"/><stop offset="0.3282" stop-color="#185bf1"/><stop offset="0.3475" stop-color="#18bbf1"/><stop offset="0.3552" stop-color="#18e8f1"/><stop offset="0.3591" stop-color="#23f5e6"/><stop offset="0.3900" stop-color="#f4f515"/><stop offset="0.3938" stop-color="#fee40b"/><stop offset="0.4131" stop-color="#fe650b"/><stop offset="0.4286" stop-color="#fe100b"/><stop offset="0.4402" stop-color="#d00f0b"/><stop offset="0.4517" stop-color="#b10f0b"/><stop offset="0.4633" stop-color="#a60f0b"/><stop offset="0.4749" stop-color="#ad0f0b"/><stop offset="0.4865" stop-color="#c50f0b"/><stop offset="0.5019" stop-color="#fb0f0b"/><stop offset="0.5174" stop-color="#fe530b"/><stop offset="0.5405" stop-color="#febf0b"/><stop offset="0.5521" stop-color="#feeb0b"/><stop offset="0.5560" stop-color="#fcf50d"/><stop offset="0.5676" stop-color="#e3f526"/><stop offset="0.5792" stop-color="#daf52f"/><stop offset="0.5907" stop-color="#e4f525"/><stop offset="0.6023" stop-color="#fef40b"/><stop offset="0.6178" stop-color="#febc0b"/><stop offset="0.6525" stop-color="#fe1a0b"/><stop offset="0.6564" stop-color="#f80f0b"/><stop offset="0.6718" stop-color="#c20f0b"/><stop offset="0.6834" stop-color="#ab0f0b"/><stop offset="0.6950" stop-color="#a60f0b"/><stop offset="0.7066" stop-color="#b30f0b"/><stop offset="0.7181" stop-color="#d30f0b"/><stop offset="0.7259" stop-color="#f10f0b"/><stop offset="0.7297" stop-color="#fe150b"/><stop offset="0.7452" stop-color="#fe6a0b"/><stop offset="0.7645" stop-color="#feea0b"/><stop offset="0.7683" stop-color="#eef51c"/><stop offset="0.7954" stop-color="#36f5d4"/><stop offset="0.7992" stop-color="#1df5ec"/><stop offset="0.8069" stop-color="#18ccf1"/><stop offset="0.8263" stop-color="#1868f1"/><stop offset="0.8456" stop-color="#181cf1"/><stop offset="0.8494" stop-color="#1810f1"/><stop offset="0.8726" stop-color="#180fba"/><stop offset="0.8958" stop-color="#180f9b"/><stop offset="0.9305" stop-color="#180f86"/><stop offset="0.9961" stop-color="#180f7f"/><stop offset="1.0000" stop-color="#180f7f"/></linearGradient><linearGradient id="a1" gradientUnits="userSpaceOnUse" x1="417.00" y1="0" x2="638.31" y2="0"><stop offset="0.0000" stop-color="#180f7e"/><stop offset="0.1544" stop-color="#180f7f"/><stop offset="0.2278" stop-color="#180f86"/><stop offset="0.2625" stop-color="#180f9c"/><stop offset="0.2857" stop-color="#180fbc"/><stop offset="0.3050" stop-color="#180fe9"/><stop offset="0.3089" stop-color="#1813f1"/><stop offset="0.3282" stop-color="#185bf1"/><stop offset="0.3475" stop-color="#18bbf1"/><stop offset="0.3552" stop-color="#18e8f1"/><stop offset="0.3591" stop-color="#23f5e6"/><stop offset="0.3900" stop-color="#f4f515"/><stop offset="0.3938" stop-color="#fee40b"/><stop offset="0.4131" stop-color="#fe650b"/><stop offset="0.4286" stop-color="#fe100b"/><stop offset="0.4440" stop-color="#c40f0b"/><stop offset="0.4556" stop-color="#ac0f0b"/><stop offset="0.4672" stop-color="#a60f0b"/><stop offset="0.4788" stop-color="#b40f0b"/><stop offset="0.4903" stop-color="#d20f0b"/><stop offset="0.5019" stop-color="#fd0f0b"/><stop offset="0.5444" stop-color="#fed60b"/><stop offset="0.5521" stop-color="#fef20b"/><stop offset="0.5676" stop-color="#daf530"/><stop offset="0.5792" stop-color="#d1f538"/><stop offset="0.5907" stop-color="#dbf52e"/><stop offset="0.6023" stop-color="#f7f513"/><stop offset="0.6062" stop-color="#feef0b"/><stop offset="0.6216" stop-color="#feb00b"/><stop offset="0.6525" stop-color="#fe1c0b"/><stop offset="0.6564" stop-color="#fa0f0b"/><stop offset="0.6718" stop-color="#c30f0b"/><stop offset="0.6834" stop-color="#ac0f0b"/><stop offset="0.6950" stop-color="#a60f0b"/><stop offset="0.7066" stop-color="#b30f0b"/><stop offset="0.7181" stop-color="#d30f0b"/><stop offset="0.7259" stop-color="#f10f0b"/><stop offset="0.7297" stop-color="#fe150b"/><stop offset="0.7452" stop-color="#fe6a0b"/><stop offset="0.7645" stop-color="#feea0b"/><stop offset="0.7683" stop-color="#eef51c"/><stop offset="0.7954" stop-color="#36f5d4"/><stop offset="0.7992" stop-color="#1df5ec"/><stop offset="0.8069" stop-color="#18ccf1"/><stop offset="0.8263" stop-color="#1868f1"/><stop offset="0.8456" stop-color="#181cf1"/><stop offset="0.8494" stop-color="#1810f1"/><stop offset="0.8726" stop-color="#180fba"/><stop offset="0.8958" stop-color="#180f9b"/><stop offset="0.9305" stop-color="#180f86"/><stop offset="0.9961" stop-color="#180f7f"/><stop offset="1.0000" stop-color="#180f7f"/></linearGradient><linearGradient id="a2" gradientUnits="userSpaceOnUse" x1="417.00" y1="0" x2="638.31" y2="0"><stop offset="0.0000" stop-color="#180f7e"/><stop offset="0.1544" stop-color="#180f7f"/><stop offset="0.2278" stop-color="#180f86"/><stop offset="0.2625" stop-color="#180f9c"/><stop offset="0.2857" stop-color="#180fbc"/><stop offset="0.3050" stop-color="#180fe9"/><stop offset="0.3089" stop-color="#1813f1"/><stop offset="0.3282" stop-color="#185bf1"/><stop offset="0.3475" stop-color="#18bbf1"/><stop offset="0.3552" stop-color="#18e8f1"/><stop offset="0.3591" stop-color="#23f5e6"/><stop offset="0.3900" stop-color="#f4f515"/><stop offset="0.3938" stop-color="#fee40b"/><stop offset="0.4131" stop-color="#fe650b"/><stop offset="0.4286" stop-color="#fe110b"/><stop offset="0.4440" stop-color="#c40f0b"/><stop offset="0.4556" stop-color="#ad0f0b"/><stop offset="0.4672" stop-color="#a80f0b"/><stop offset="0.4788" stop-color="#b60f0b"/><stop offset="0.4903" stop-color="#d50f0b"/><stop offset="0.4981" stop-color="#f20f0b"/><stop offset="0.5019" stop-color="#fe150b"/><stop offset="0.5444" stop-color="#fee90b"/><stop offset="0.5483" stop-color="#f9f510"/><stop offset="0.5598" stop-color="#d0f539"/><stop offset="0.5714" stop-color="#b9f550"/><stop offset="0.5830" stop-color="#b6f553"/><stop offset="0.5946" stop-color="#c8f541"/><stop offset="0.6062" stop-color="#edf51c"/><stop offset="0.6100" stop-color="#fdf50c"/><stop offset="0.6255" stop-color="#feac0b"/><stop offset="0.6525" stop-color="#fe220b"/><stop offset="0.6564" stop-color="#fe110b"/><stop offset="0.6718" stop-color="#c70f0b"/><stop offset="0.6834" stop-color="#ae0f0b"/><stop offset="0.6950" stop-color="#a70f0b"/><stop offset="0.7066" stop-color="#b40f0b"/><stop offset="0.7181" stop-color="#d30f0b"/><stop offset="0.7259" stop-color="#f20f0b"/><stop offset="0.7297" stop-color="#fe150b"/><stop offset="0.7452" stop-color="#fe6a0b"/><stop offset="0.7645" stop-color="#feea0b"/><stop offset="0.7683" stop-color="#eef51c"/><stop offset="0.7954" stop-color="#36f5d4"/><stop offset="0.7992" stop-color="#1df5ec"/><stop offset="0.8069" stop-color="#18ccf1"/><stop offset="0.8263" stop-color="#1868f1"/><stop offset="0.8456" stop-color="#181cf1"/><stop offset="0.8494" stop-color="#1810f1"/><stop offset="0.8726" stop-color="#180fba"/><stop offset="0.8958" stop-color="#180f9b"/><stop offset="0.9305" stop-color="#180f86"/><stop offset="1.0000" stop-color="#180f7f"/></linearGradient><linearGradient id="a3" gradientUnits="userSpaceOnUse" x1="417.00" y1="0" x2="638.31" y2="0"><stop offset="0.0000" stop-color="#180f7e"/><stop offset="0.1544" stop-color="#180f7f"/><stop offset="0.2278" stop-color="#180f86"/><stop offset="0.2625" stop-color="#180f9c"/><stop offset="0.2857" stop-color="#180fbc"/><stop offset="0.3050" stop-color="#180fe9"/><stop offset="0.3089" stop-color="#1813f1"/><stop offset="0.3282" stop-color="#185bf1"/><stop offset="0.3475" stop-color="#18bbf1"/><stop offset="0.3552" stop-color="#18e8f1"/><stop offset="0.3591" stop-color="#23f5e6"/><stop offset="0.3900" stop-color="#f4f515"/><stop offset="0.3938" stop-color="#fee40b"/><stop offset="0.4131" stop-color="#fe650b"/><stop offset="0.4286" stop-color="#fe110b"/><stop offset="0.4440" stop-color="#c50f0b"/><stop offset="0.4556" stop-color="#ae0f0b"/><stop offset="0.4672" stop-color="#aa0f0b"/><stop offset="0.4788" stop-color="#ba0f0b"/><stop offset="0.4903" stop-color="#db0f0b"/><stop offset="0.4981" stop-color="#fa0f0b"/><stop offset="0.5058" stop-color="#fe300b"/><stop offset="0.5405" stop-color="#fef30b"/><stop offset="0.5560" stop-color="#b6f553"/><stop offset="0.5676" stop-color="#92f577"/><stop offset="0.5792" stop-color="#86f583"/><stop offset="0.5907" stop-color="#94f575"/><stop offset="0.6023" stop-color="#baf54f"/><stop offset="0.6139" stop-color="#f0f519"/><stop offset="0.6178" stop-color="#feee0b"/><stop offset="0.6525" stop-color="#fe2c0b"/><stop offset="0.6564" stop-color="#fe190b"/><stop offset="0.6602" stop-color="#f60f0b"/><stop offset="0.6718" stop-color="#cb0f0b"/><stop offset="0.6834" stop-color="#b10f0b"/><stop offset="0.6950" stop-color="#a90f0b"/><stop offset="0.7066" stop-color="#b50f0b"/><stop offset="0.7181" stop-color="#d40f0b"/><stop offset="0.7259" stop-color="#f20f0b"/><stop offset="0.7297" stop-color="#fe150b"/><stop offset="0.7452" stop-color="#fe6a0b"/><stop offset="0.7645" stop-color="#feea0b"/><stop offset="0.7683" stop-color="#eef51c"/><stop offset="0.7954" stop-color="#36f5d4"/><stop offset="0.7992" stop-color="#1df5ec"/><stop offset="0.8069" stop-color="#18ccf1"/><stop offset="0.8263" stop-color="#1868f1"/><stop offset="0.8456" stop-color="#181cf1"/><stop offset="0.8494" stop-color="#1810f1"/><stop offset="0.8687" stop-color="#180fc2"/><stop offset="0.8919" stop-color="#180f9f"/><stop offset="0.9228" stop-color="#180f89"/><stop offset="0.9807" stop-color="#180f80"/><stop offset="1.0000" stop-color="#180f80"/></linearGradient><linearGradient id="a4" gradientUnits="userSpaceOnUse" x1="417.00" y1="0" x2="638.31" y2="0"><stop offset="0.0000" stop-color="#180f7e"/><stop offset="0.1544" stop-color="#180f7f"/><stop offset="0.2278" stop-color="#180f86"/><stop offset="0.2625" stop-color="#180f9c"/><stop offset="0.2857" stop-color="#180fbc"/><stop offset="0.3050" stop-color="#180fe9"/><stop offset="0.3089" stop-color="#1813f1"/><stop offset="0.3282" stop-color="#185bf1"/><stop offset="0.3475" stop-color="#18bbf1"/><stop offset="0.3552" stop-color="#18e8f1"/><stop offset="0.3591" stop-color="#23f5e6"/><stop offset="0.3900" stop-color="#f4f515"/><stop offset="0.3938" stop-color="#fee40b"/><stop offset="0.4131" stop-color="#fe650b"/><stop offset="0.4286" stop-color="#fe120b"/><stop offset="0.4440" stop-color="#c60f0b"/><stop offset="0.4556" stop-color="#b00f0b"/><stop offset="0.4672" stop-color="#ad0f0b"/><stop offset="0.4788" stop-color="#be0f0b"/><stop offset="0.4903" stop-color="#e20f0b"/><stop offset="0.4981" stop-color="#fe150b"/><stop offset="0.5135" stop-color="#fe680b"/><stop offset="0.5328" stop-color="#fee40b"/><stop offset="0.5367" stop-color="#f6f513"/><stop offset="0.5521" stop-color="#98f571"/><stop offset="0.5637" stop-color="#64f5a6"/><stop offset="0.5714" stop-color="#4ef5bb"/><stop offset="0.5792" stop-color="#47f5c2"/><stop offset="0.5869" stop-color="#50f5b9"/><stop offset="0.5946" stop-color="#67f5a2"/><stop offset="0.6062" stop-color="#9df56c"/><stop offset="0.6216" stop-color="#fcf50e"/><stop offset="0.6486" stop-color="#fe4c0b"/><stop offset="0.6602" stop-color="#fe100b"/><stop offset="0.6718" stop-color="#d10f0b"/><stop offset="0.6834" stop-color="#b50f0b"/><stop offset="0.6950" stop-color="#ac0f0b"/><stop offset="0.7066" stop-color="#b60f0b"/><stop offset="0.7181" stop-color="#d50f0b"/><stop offset="0.7259" stop-color="#f30f0b"/><stop offset="0.7297" stop-color="#fe160b"/><stop offset="0.7452" stop-color="#fe6b0b"/><stop offset="0.7645" stop-color="#feea0b"/><stop offset="0.7683" stop-color="#edf51c"/><stop offset="0.7954" stop-color="#36f5d4"/><stop offset="0.7992" stop-color="#1df5ec"/><stop offset="0.8069" stop-color="#18ccf1"/><stop offset="0.8263" stop-color="#1868f1"/><stop offset="0.8456" stop-color="#181cf1"/><stop offset="0.8494" stop-color="#1810f1"/><stop offset="0.8687" stop-color="#180fc2"/><stop offset="0.8919" stop-color="#180f9f"/><stop offset="0.9228" stop-color="#180f89"/><stop offset="0.9846" stop-color="#180f80"/><stop offset="1.0000" stop-color="#180f80"/></linearGradient><linearGradient id="a5" gradientUnits="userSpaceOnUse" x1="417.00" y1="0" x2="638.31" y2="0"><stop offset="0.0000" stop-color="#180f7e"/><stop offset="0.1544" stop-color="#180f7f"/><stop offset="0.2278" stop-color="#180f86"/><stop offset="0.2625" stop-color="#180f9c"/><stop offset="0.2857" stop-color="#180fbc"/><stop offset="0.3050" stop-color="#180fe9"/><stop offset="0.3089" stop-color="#1813f1"/><stop offset="0.3282" stop-color="#185bf1"/><stop offset="0.3475" stop-color="#18bbf1"/><stop offset="0.3552" stop-color="#18e8f1"/><stop offset="0.3591" stop-color="#23f5e6"/><stop offset="0.3900" stop-color="#f4f516"/><stop offset="0.3938" stop-color="#fee40b"/><stop offset="0.4131" stop-color="#fe650b"/><stop offset="0.4286" stop-color="#fe120b"/><stop offset="0.4440" stop-color="#c70f0b"/><stop offset="0.4556" stop-color="#b10f0b"/><stop offset="0.4672" stop-color="#af0f0b"/><stop offset="0.4788" stop-color="#c20f0b"/><stop offset="0.4903" stop-color="#e90f0b"/><stop offset="0.4942" stop-color="#f90f0b"/><stop offset="0.5019" stop-color="#fe320b"/><stop offset="0.5174" stop-color="#fe920b"/><stop offset="0.5290" stop-color="#fee50b"/><stop offset="0.5328" stop-color="#f1f518"/><stop offset="0.5521" stop-color="#65f5a5"/><stop offset="0.5637" stop-color="#20f5e9"/><stop offset="0.5676" stop-color="#18ecf1"/><stop offset="0.5753" stop-color="#18d8f1"/><stop offset="0.5830" stop-color="#18daf1"/><stop offset="0.5907" stop-color="#18f0f1"/><stop offset="0.5946" stop-color="#25f5e5"/><stop offset="0.6062" stop-color="#6bf59f"/><stop offset="0.6255" stop-color="#f8f511"/><stop offset="0.6332" stop-color="#fec20b"/><stop offset="0.6486" stop-color="#fe5a0b"/><stop offset="0.6602" stop-color="#fe190b"/><stop offset="0.6641" stop-color="#f50f0b"/><stop offset="0.6757" stop-color="#ca0f0b"/><stop offset="0.6873" stop-color="#b20f0b"/><stop offset="0.6988" stop-color="#af0f0b"/><stop offset="0.7104" stop-color="#c00f0b"/><stop offset="0.7220" stop-color="#e30f0b"/><stop offset="0.7259" stop-color="#f30f0b"/><stop offset="0.7297" stop-color="#fe160b"/><stop offset="0.7452" stop-color="#fe6b0b"/><stop offset="0.7645" stop-color="#feea0b"/><stop offset="0.7683" stop-color="#edf51c"/><stop offset="0.7954" stop-color="#36f5d4"/><stop offset="0.7992" stop-color="#1df5ec"/><stop offset="0.8069" stop-color="#18ccf1"/><stop offset="0.8263" stop-color="#1868f1"/><stop offset="0.8456" stop-color="#181cf1"/><stop offset="0.8494" stop-color="#1810f1"/><stop offset="0.8687" stop-color="#180fc2"/><stop offset="0.8919" stop-color="#180f9f"/><stop offset="0.9228" stop-color="#180f89"/><stop offset="0.9846" stop-color="#180f80"/><stop offset="1.0000" stop-color="#180f80"/></linearGradient><linearGradient id="a6" gradientUnits="userSpaceOnUse" x1="417.00" y1="0" x2="638.31" y2="0"><stop offset="0.0000" stop-color="#180f7e"/><stop offset="0.1544" stop-color="#180f7f"/><stop offset="0.2278" stop-color="#180f86"/><stop offset="0.2625" stop-color="#180f9c"/><stop offset="0.2857" stop-color="#180fbc"/><stop offset="0.3050" stop-color="#180fe9"/><stop offset="0.3089" stop-color="#1813f1"/><stop offset="0.3282" stop-color="#185bf1"/><stop offset="0.3475" stop-color="#18bbf1"/><stop offset="0.3552" stop-color="#18e8f1"/><stop offset="0.3591" stop-color="#23f5e6"/><stop offset="0.3900" stop-color="#f4f516"/><stop offset="0.3938" stop-color="#fee40b"/><stop offset="0.4131" stop-color="#fe660b"/><stop offset="0.4286" stop-color="#fe120b"/><stop offset="0.4440" stop-color="#c80f0b"/><stop offset="0.4556" stop-color="#b30f0b"/><stop offset="0.4672" stop-color="#b20f0b"/><stop offset="0.4788" stop-color="#c60f0b"/><stop offset="0.4903" stop-color="#ee0f0b"/><stop offset="0.4942" stop-color="#fe120b"/><stop offset="0.5058" stop-color="#fe520b"/><stop offset="0.5212" stop-color="#febf0b"/><stop offset="0.5251" stop-color="#fedd0b"/><stop offset="0.5290" stop-color="#f6f513"/><stop offset="0.5521" stop-color="#32f5d7"/><stop offset="0.5560" stop-color="#18eff1"/><stop offset="0.5637" stop-color="#18b5f1"/><stop offset="0.5714" stop-color="#188af1"/><stop offset="0.5753" stop-color="#187ff1"/><stop offset="0.5792" stop-color="#187bf1"/><stop offset="0.5830" stop-color="#1881f1"/><stop offset="0.5869" stop-color="#188ef1"/><stop offset="0.5946" stop-color="#18bbf1"/><stop offset="0.6023" stop-color="#19f5f0"/><stop offset="0.6293" stop-color="#fef50b"/><stop offset="0.6448" stop-color="#fe7f0b"/><stop offset="0.6564" stop-color="#fe360b"/><stop offset="0.6641" stop-color="#fc0f0b"/><stop offset="0.6757" stop-color="#ce0f0b"/><stop offset="0.6873" stop-color="#b50f0b"/><stop offset="0.6988" stop-color="#b00f0b"/><stop offset="0.7104" stop-color="#c10f0b"/><stop offset="0.7220" stop-color="#e40f0b"/><stop offset="0.7259" stop-color="#f40f0b"/><stop offset="0.7297" stop-color="#fe170b"/><stop offset="0.7452" stop-color="#fe6b0b"/><stop offset="0.7645" stop-color="#feea0b"/><stop offset="0.7683" stop-color="#edf51c"/><stop offset="0.7954" stop-color="#36f5d4"/><stop offset="0.7992" stop-color="#1df5ec"/><stop offset="0.8069" stop-color="#18ccf1"/><stop offset="0.8263" stop-color="#1868f1"/><stop offset="0.8456" stop-color="#181cf1"/><stop offset="0.8494" stop-color="#1810f1"/><stop offset="0.8687" stop-color="#180fc2"/><stop offset="0.8919" stop-color="#180f9f"/><stop offset="0.9228" stop-color="#180f89"/><stop offset="0.9846" stop-color="#180f80"/><stop offset="1.0000" stop-color="#180f80"/></linearGradient><linearGradient id="a7" gradientUnits="userSpaceOnUse" x1="417.00" y1="0" x2="638.31" y2="0"><stop offset="0.0000" stop-color="#180f7e"/><stop offset="0.1544" stop-color="#180f7f"/><stop offset="0.2278" stop-color="#180f86"/><stop offset="0.2625" stop-color="#180f9c"/><stop offset="0.2857" stop-color="#180fbc"/><stop offset="0.3050" stop-color="#180fe9"/><stop offset="0.3089" stop-color="#1813f1"/><stop offset="0.3282" stop-color="#185bf1"/><stop offset="0.3475" stop-color="#18bbf1"/><stop offset="0.3552" stop-color="#18e8f1"/><stop offset="0.3591" stop-color="#23f5e6"/><stop offset="0.3900" stop-color="#f4f516"/><stop offset="0.3938" stop-color="#fee40b"/><stop offset="0.4131" stop-color="#fe660b"/><stop offset="0.4286" stop-color="#fe130b"/><stop offset="0.4440" stop-color="#c80f0b"/><stop offset="0.4556" stop-color="#b40f0b"/><stop offset="0.4672" stop-color="#b30f0b"/><stop offset="0.4788" stop-color="#c80f0b"/><stop offset="0.4903" stop-color="#f20f0b"/><stop offset="0.4942" stop-color="#fe160b"/><stop offset="0.5058" stop-color="#fe590b"/><stop offset="0.5174" stop-color="#feac0b"/><stop offset="0.5251" stop-color="#feeb0b"/><stop offset="0.5290" stop-color="#e6f523"/><stop offset="0.5483" stop-color="#31f5d8"/><stop offset="0.5521" stop-color="#18e7f1"/><stop offset="0.5676" stop-color="#1851f1"/><stop offset="0.5714" stop-color="#1832f1"/><stop offset="0.5753" stop-color="#181cf1"/><stop offset="0.5792" stop-color="#1814f1"/><stop offset="0.5830" stop-color="#1820f1"/><stop offset="0.5869" stop-color="#1839f1"/><stop offset="0.5985" stop-color="#18a3f1"/><stop offset="0.6062" stop-color="#18f0f1"/><stop offset="0.6178" stop-color="#84f585"/><stop offset="0.6293" stop-color="#eef51b"/><stop offset="0.6332" stop-color="#fee30b"/><stop offset="0.6486" stop-color="#fe6d0b"/><stop offset="0.6602" stop-color="#fe260b"/><stop offset="0.6641" stop-color="#fe120b"/><stop offset="0.6757" stop-color="#d10f0b"/><stop offset="0.6873" stop-color="#b70f0b"/><stop offset="0.6988" stop-color="#b10f0b"/><stop offset="0.7104" stop-color="#c10f0b"/><stop offset="0.7220" stop-color="#e40f0b"/><stop offset="0.7259" stop-color="#f40f0b"/><stop offset="0.7297" stop-color="#fe170b"/><stop offset="0.7452" stop-color="#fe6b0b"/><stop offset="0.7645" stop-color="#feea0b"/><stop offset="0.7683" stop-color="#edf51c"/><stop offset="0.7954" stop-color="#36f5d4"/><stop offset="0.7992" stop-color="#1df5ec"/><stop offset="0.8069" stop-color="#18ccf1"/><stop offset="0.8263" stop-color="#1868f1"/><stop offset="0.8456" stop-color="#181cf1"/><stop offset="0.8494" stop-color="#1810f1"/><stop offset="0.8726" stop-color="#180fba"/><stop offset="0.8958" stop-color="#180f9b"/><stop offset="0.9305" stop-color="#180f86"/><stop offset="0.9923" stop-color="#180f80"/><stop offset="1.0000" stop-color="#180f81"/></linearGradient><linearGradient id="a8" gradientUnits="userSpaceOnUse" x1="417.00" y1="0" x2="638.31" y2="0"><stop offset="0.0000" stop-color="#180f7e"/><stop offset="0.1544" stop-color="#180f7f"/><stop offset="0.2278" stop-color="#180f86"/><stop offset="0.2625" stop-color="#180f9c"/><stop offset="0.2857" stop-color="#180fbc"/><stop offset="0.3050" stop-color="#180fe9"/><stop offset="0.3089" stop-color="#1813f1"/><stop offset="0.3282" stop-color="#185bf1"/><stop offset="0.3475" stop-color="#18bbf1"/><stop offset="0.3552" stop-color="#18e8f1"/><stop offset="0.3591" stop-color="#23f5e6"/><stop offset="0.3900" stop-color="#f4f516"/><stop offset="0.3938" stop-color="#fee40b"/><stop offset="0.4131" stop-color="#fe660b"/><stop offset="0.4286" stop-color="#fe130b"/><stop offset="0.4440" stop-color="#c90f0b"/><stop offset="0.4556" stop-color="#b40f0b"/><stop offset="0.4672" stop-color="#b40f0b"/><stop offset="0.4788" stop-color="#c90f0b"/><stop offset="0.4903" stop-color="#f40f0b"/><stop offset="0.4942" stop-color="#fe180b"/><stop offset="0.5058" stop-color="#fe5c0b"/><stop offset="0.5174" stop-color="#feb00b"/><stop offset="0.5251" stop-color="#fef00b"/><stop offset="0.5328" stop-color="#bdf54c"/><stop offset="0.5483" stop-color="#24f5e5"/><stop offset="0.5521" stop-color="#18d8f1"/><stop offset="0.5676" stop-color="#182cf1"/><stop offset="0.5714" stop-color="#180fdf"/><stop offset="0.5753" stop-color="#180faf"/><stop offset="0.5792" stop-color="#180f86"/><stop offset="0.5869" stop-color="#180fea"/><stop offset="0.5907" stop-color="#1836f1"/><stop offset="0.6062" stop-color="#18e2f1"/><stop offset="0.6100" stop-color="#2ef5dc"/><stop offset="0.6255" stop-color="#c5f544"/><stop offset="0.6293" stop-color="#e8f521"/><stop offset="0.6332" stop-color="#fee80b"/><stop offset="0.6448" stop-color="#fe8c0b"/><stop offset="0.6564" stop-color="#fe3e0b"/><stop offset="0.6641" stop-color="#fe130b"/><stop offset="0.6795" stop-color="#c70f0b"/><stop offset="0.6911" stop-color="#b30f0b"/><stop offset="0.7027" stop-color="#b50f0b"/><stop offset="0.7143" stop-color="#cb0f0b"/><stop offset="0.7259" stop-color="#f40f0b"/><stop offset="0.7297" stop-color="#fe170b"/><stop offset="0.7452" stop-color="#fe6b0b"/><stop offset="0.7645" stop-color="#feea0b"/><stop offset="0.7683" stop-color="#edf51c"/><stop offset="0.7954" stop-color="#36f5d4"/><stop offset="0.7992" stop-color="#1df5ec"/><stop offset="0.8069" stop-color="#18ccf1"/><stop offset="0.8263" stop-color="#1868f1"/><stop offset="0.8456" stop-color="#181cf1"/><stop offset="0.8494" stop-color="#1810f1"/><stop offset="0.8726" stop-color="#180fba"/><stop offset="0.8958" stop-color="#180f9b"/><stop offset="0.9305" stop-color="#180f86"/><stop offset="0.9807" stop-color="#180f7f"/><stop offset="1.0000" stop-color="#180f81"/></linearGradient><linearGradient id="a9" gradientUnits="userSpaceOnUse" x1="417.00" y1="0" x2="638.31" y2="0"><stop offset="0.0000" stop-color="#180f7e"/><stop offset="0.1544" stop-color="#180f7f"/><stop offset="0.2278" stop-color="#180f86"/><stop offset="0.2625" stop-color="#180f9c"/><stop offset="0.2857" stop-color="#180fbc"/><stop offset="0.3050" stop-color="#180fe9"/><stop offset="0.3089" stop-color="#1813f1"/><stop offset="0.3282" stop-color="#185bf1"/><stop offset="0.3475" stop-color="#18bbf1"/><stop offset="0.3552" stop-color="#18e8f1"/><stop offset="0.3591" stop-color="#23f5e6"/><stop offset="0.3900" stop-color="#f4f516"/><stop offset="0.3938" stop-color="#fee40b"/><stop offset="0.4131" stop-color="#fe660b"/><stop offset="0.4286" stop-color="#fe130b"/><stop offset="0.4440" stop-color="#c80f0b"/><stop offset="0.4556" stop-color="#b40f0b"/><stop offset="0.4672" stop-color="#b30f0b"/><stop offset="0.4788" stop-color="#c80f0b"/><stop offset="0.4903" stop-color="#f20f0b"/><stop offset="0.4942" stop-color="#fe160b"/><stop offset="0.5058" stop-color="#fe590b"/><stop offset="0.5174" stop-color="#feac0b"/><stop offset="0.5251" stop-color="#feeb0b"/><stop offset="0.5290" stop-color="#e6f523"/><stop offset="0.5483" stop-color="#31f5d8"/><stop offset="0.5521" stop-color="#18e7f1"/><stop offset="0.5676" stop-color="#1851f1"/><stop offset="0.5714" stop-color="#1832f1"/><stop offset="0.5753" stop-color="#181cf1"/><stop offset="0.5792" stop-color="#1814f1"/><stop offset="0.5830" stop-color="#1820f1"/><stop offset="0.5869" stop-color="#1839f1"/><stop offset="0.5985" stop-color="#18a3f1"/><stop offset="0.6062" stop-color="#18f0f1"/><stop offset="0.6178" stop-color="#84f585"/><stop offset="0.6293" stop-color="#eef51b"/><stop offset="0.6332" stop-color="#fee30b"/><stop offset="0.6486" stop-color="#fe6d0b"/><stop offset="0.6602" stop-color="#fe260b"/><stop offset="0.6641" stop-color="#fe120b"/><stop offset="0.6757" stop-color="#d10f0b"/><stop offset="0.6873" stop-color="#b70f0b"/><stop offset="0.6988" stop-color="#b10f0b"/><stop offset="0.7104" stop-color="#c10f0b"/><stop offset="0.7220" stop-color="#e40f0b"/><stop offset="0.7259" stop-color="#f40f0b"/><stop offset="0.7297" stop-color="#fe170b"/><stop offset="0.7452" stop-color="#fe6b0b"/><stop offset="0.7645" stop-color="#feea0b"/><stop offset="0.7683" stop-color="#edf51c"/><stop offset="0.7954" stop-color="#36f5d4"/><stop offset="0.7992" stop-color="#1df5ec"/><stop offset="0.8069" stop-color="#18ccf1"/><stop offset="0.8263" stop-color="#1868f1"/><stop offset="0.8456" stop-color="#181cf1"/><stop offset="0.8494" stop-color="#1810f1"/><stop offset="0.8687" stop-color="#180fc2"/><stop offset="0.8919" stop-color="#180f9f"/><stop offset="0.9228" stop-color="#180f88"/><stop offset="0.9730" stop-color="#180f80"/><stop offset="1.0000" stop-color="#180f82"/></linearGradient><linearGradient id="a10" gradientUnits="userSpaceOnUse" x1="417.00" y1="0" x2="638.31" y2="0"><stop offset="0.0000" stop-color="#180f7e"/><stop offset="0.1544" stop-color="#180f7f"/><stop offset="0.2278" stop-color="#180f86"/><stop offset="0.2625" stop-color="#180f9c"/><stop offset="0.2857" stop-color="#180fbc"/><stop offset="0.3050" stop-color="#180fe9"/><stop offset="0.3089" stop-color="#1813f1"/><stop offset="0.3282" stop-color="#185bf1"/><stop offset="0.3475" stop-color="#18bbf1"/><stop offset="0.3552" stop-color="#18e8f1"/><stop offset="0.3591" stop-color="#23f5e6"/><stop offset="0.3900" stop-color="#f4f516"/><stop offset="0.3938" stop-color="#fee40b"/><stop offset="0.4131" stop-color="#fe660b"/><stop offset="0.4286" stop-color="#fe120b"/><stop offset="0.4440" stop-color="#c80f0b"/><stop offset="0.4556" stop-color="#b30f0b"/><stop offset="0.4672" stop-color="#b20f0b"/><stop offset="0.4788" stop-color="#c60f0b"/><stop offset="0.4903" stop-color="#ee0f0b"/><stop offset="0.4942" stop-color="#fe120b"/><stop offset="0.5058" stop-color="#fe520b"/><stop offset="0.5212" stop-color="#febf0b"/><stop offset="0.5251" stop-color="#fedd0b"/><stop offset="0.5290" stop-color="#f6f513"/><stop offset="0.5521" stop-color="#32f5d7"/><stop offset="0.5560" stop-color="#18eff1"/><stop offset="0.5637" stop-color="#18b5f1"/><stop offset="0.5714" stop-color="#188af1"/><stop offset="0.5753" stop-color="#187ff1"/><stop offset="0.5792" stop-color="#187bf1"/><stop offset="0.5830" stop-color="#1881f1"/><stop offset="0.5869" stop-color="#188ef1"/><stop offset="0.5946" stop-color="#18bbf1"/><stop offset="0.6023" stop-color="#19f5f0"/><stop offset="0.6293" stop-color="#fef50b"/><stop offset="0.6448" stop-color="#fe7f0b"/><stop offset="0.6564" stop-color="#fe360b"/><stop offset="0.6641" stop-color="#fc0f0b"/><stop offset="0.6757" stop-color="#ce0f0b"/><stop offset="0.6873" stop-color="#b50f0b"/><stop offset="0.6988" stop-color="#b00f0b"/><stop offset="0.7104" stop-color="#c10f0b"/><stop offset="0.7220" stop-color="#e40f0b"/><stop offset="0.7259" stop-color="#f40f0b"/><stop offset="0.7297" stop-color="#fe170b"/><stop offset="0.7452" stop-color="#fe6b0b"/><stop offset="0.7645" stop-color="#feea0b"/><stop offset="0.7683" stop-color="#edf51c"/><stop offset="0.7954" stop-color="#36f5d4"/><stop offset="0.7992" stop-color="#1df5ec"/><stop offset="0.8069" stop-color="#18ccf1"/><stop offset="0.8263" stop-color="#1868f1"/><stop offset="0.8456" stop-color="#181cf1"/><stop offset="0.8494" stop-color="#1810f1"/><stop offset="0.8687" stop-color="#180fc2"/><stop offset="0.8919" stop-color="#180f9f"/><stop offset="0.9228" stop-color="#180f89"/><stop offset="0.9730" stop-color="#180f81"/><stop offset="1.0000" stop-color="#180f82"/></linearGradient><linearGradient id="a11" gradientUnits="userSpaceOnUse" x1="417.00" y1="0" x2="638.31" y2="0"><stop offset="0.0000" stop-color="#180f7e"/><stop offset="0.1544" stop-color="#180f7f"/><stop offset="0.2278" stop-color="#180f86"/><stop offset="0.2625" stop-color="#180f9c"/><stop offset="0.2857" stop-color="#180fbc"/><stop offset="0.3050" stop-color="#180fe9"/><stop offset="0.3089" stop-color="#1813f1"/><stop offset="0.3282" stop-color="#185bf1"/><stop offset="0.3475" stop-color="#18bbf1"/><stop offset="0.3552" stop-color="#18e8f1"/><stop offset="0.3591" stop-color="#23f5e6"/><stop offset="0.3900" stop-color="#f4f516"/><stop offset="0.3938" stop-color="#fee40b"/><stop offset="0.4131" stop-color="#fe650b"/><stop offset="0.4286" stop-color="#fe120b"/><stop offset="0.4440" stop-color="#c70f0b"/><stop offset="0.4556" stop-color="#b10f0b"/><stop offset="0.4672" stop-color="#af0f0b"/><stop offset="0.4788" stop-color="#c20f0b"/><stop offset="0.4903" stop-color="#e90f0b"/><stop offset="0.4942" stop-color="#f90f0b"/><stop offset="0.5019" stop-color="#fe320b"/><stop offset="0.5174" stop-color="#fe920b"/><stop offset="0.5290" stop-color="#fee50b"/><stop offset="0.5328" stop-color="#f1f518"/><stop offset="0.5521" stop-color="#65f5a5"/><stop offset="0.5637" stop-color="#20f5e9"/><stop offset="0.5676" stop-color="#18ecf1"/><stop offset="0.5753" stop-color="#18d8f1"/><stop offset="0.5830" stop-color="#18daf1"/><stop offset="0.5907" stop-color="#18f0f1"/><stop offset="0.5946" stop-color="#25f5e5"/><stop offset="0.6062" stop-color="#6bf59f"/><stop offset="0.6255" stop-color="#f8f511"/><stop offset="0.6332" stop-color="#fec20b"/><stop offset="0.6486" stop-color="#fe5a0b"/><stop offset="0.6602" stop-color="#fe190b"/><stop offset="0.6641" stop-color="#f50f0b"/><stop offset="0.6757" stop-color="#ca0f0b"/><stop offset="0.6873" stop-color="#b20f0b"/><stop offset="0.6988" stop-color="#af0f0b"/><stop offset="0.7104" stop-color="#c00f0b"/><stop offset="0.7220" stop-color="#e30f0b"/><stop offset="0.7259" stop-color="#f30f0b"/><stop offset="0.7297" stop-color="#fe160b"/><stop offset="0.7452" stop-color="#fe6b0b"/><stop offset="0.7645" stop-color="#feea0b"/><stop offset="0.7683" stop-color="#edf51c"/><stop offset="0.7954" stop-color="#36f5d4"/><stop offset="0.7992" stop-color="#1df5ec"/><stop offset="0.8069" stop-color="#18ccf1"/><stop offset="0.8263" stop-color="#1868f1"/><stop offset="0.8456" stop-color="#181cf1"/><stop offset="0.8494" stop-color="#1810f1"/><stop offset="0.8687" stop-color="#180fc2"/><stop offset="0.8919" stop-color="#180f9f"/><stop offset="0.9228" stop-color="#180f89"/><stop offset="0.9807" stop-color="#180f82"/><stop offset="1.0000" stop-color="#180f83"/></linearGradient><linearGradient id="a12" gradientUnits="userSpaceOnUse" x1="417.00" y1="0" x2="638.31" y2="0"><stop offset="0.0000" stop-color="#180f7e"/><stop offset="0.1544" stop-color="#180f7f"/><stop offset="0.2278" stop-color="#180f86"/><stop offset="0.2625" stop-color="#180f9c"/><stop offset="0.2857" stop-color="#180fbc"/><stop offset="0.3050" stop-color="#180fe9"/><stop offset="0.3089" stop-color="#1813f1"/><stop offset="0.3282" stop-color="#185bf1"/><stop offset="0.3475" stop-color="#18bbf1"/><stop offset="0.3552" stop-color="#18e8f1"/><stop offset="0.3591" stop-color="#23f5e6"/><stop offset="0.3900" stop-color="#f4f515"/><stop offset="0.3938" stop-color="#fee40b"/><stop offset="0.4131" stop-color="#fe650b"/><stop offset="0.4286" stop-color="#fe120b"/><stop offset="0.4440" stop-color="#c60f0b"/><stop offset="0.4556" stop-color="#b00f0b"/><stop offset="0.4672" stop-color="#ad0f0b"/><stop offset="0.4788" stop-color="#be0f0b"/><stop offset="0.4903" stop-color="#e20f0b"/><stop offset="0.4981" stop-color="#fe150b"/><stop offset="0.5135" stop-color="#fe680b"/><stop offset="0.5328" stop-color="#fee40b"/><stop offset="0.5367" stop-color="#f6f513"/><stop offset="0.5521" stop-color="#98f571"/><stop offset="0.5637" stop-color="#64f5a6"/><stop offset="0.5714" stop-color="#4ef5bb"/><stop offset="0.5792" stop-color="#47f5c2"/><stop offset="0.5869" stop-color="#50f5b9"/><stop offset="0.5946" stop-color="#67f5a2"/><stop offset="0.6062" stop-color="#9df56c"/><stop offset="0.6216" stop-color="#fcf50e"/><stop offset="0.6486" stop-color="#fe4c0b"/><stop offset="0.6602" stop-color="#fe100b"/><stop offset="0.6718" stop-color="#d10f0b"/><stop offset="0.6834" stop-color="#b50f0b"/><stop offset="0.6950" stop-color="#ac0f0b"/><stop offset="0.7066" stop-color="#b60f0b"/><stop offset="0.7181" stop-color="#d50f0b"/><stop offset="0.7259" stop-color="#f30f0b"/><stop offset="0.7297" stop-color="#fe160b"/><stop offset="0.7452" stop-color="#fe6b0b"/><stop offset="0.7645" stop-color="#feea0b"/><stop offset="0.7683" stop-color="#edf51c"/><stop offset="0.7954" stop-color="#36f5d4"/><stop offset="0.7992" stop-color="#1df5ec"/><stop offset="0.8069" stop-color="#18ccf1"/><stop offset="0.8263" stop-color="#1868f1"/><stop offset="0.8456" stop-color="#181cf1"/><stop offset="0.8494" stop-color="#1810f1"/><stop offset="0.8726" stop-color="#180fba"/><stop offset="0.8958" stop-color="#180f9b"/><stop offset="0.9305" stop-color="#180f87"/><stop offset="0.9961" stop-color="#180f83"/><stop offset="1.0000" stop-color="#180f83"/></linearGradient><linearGradient id="a13" gradientUnits="userSpaceOnUse" x1="417.00" y1="0" x2="638.31" y2="0"><stop offset="0.0000" stop-color="#180f7e"/><stop offset="0.1544" stop-color="#180f7f"/><stop offset="0.2278" stop-color="#180f86"/><stop offset="0.2625" stop-color="#180f9c"/><stop offset="0.2857" stop-color="#180fbc"/><stop offset="0.3050" stop-color="#180fe9"/><stop offset="0.3089" stop-color="#1813f1"/><stop offset="0.3282" stop-color="#185bf1"/><stop offset="0.3475" stop-color="#18bbf1"/><stop offset="0.3552" stop-color="#18e8f1"/><stop offset="0.3591" stop-color="#23f5e6"/><stop offset="0.3900" stop-color="#f4f515"/><stop offset="0.3938" stop-color="#fee40b"/><stop offset="0.4131" stop-color="#fe650b"/><stop offset="0.4286" stop-color="#fe110b"/><stop offset="0.4440" stop-color="#c50f0b"/><stop offset="0.4556" stop-color="#ae0f0b"/><stop offset="0.4672" stop-color="#aa0f0b"/><stop offset="0.4788" stop-color="#ba0f0b"/><stop offset="0.4903" stop-color="#db0f0b"/><stop offset="0.4981" stop-color="#fa0f0b"/><stop offset="0.5058" stop-color="#fe300b"/><stop offset="0.5405" stop-color="#fef30b"/><stop offset="0.5560" stop-color="#b6f553"/><stop offset="0.5676" stop-color="#92f577"/><stop offset="0.5792" stop-color="#86f583"/><stop offset="0.5907" stop-color="#94f575"/><stop offset="0.6023" stop-color="#baf54f"/><stop offset="0.6139" stop-color="#f0f519"/><stop offset="0.6178" stop-color="#feee0b"/><stop offset="0.6525" stop-color="#fe2c0b"/><stop offset="0.6564" stop-color="#fe190b"/><stop offset="0.6602" stop-color="#f60f0b"/><stop offset="0.6718" stop-color="#cb0f0b"/><stop offset="0.6834" stop-color="#b10f0b"/><stop offset="0.6950" stop-color="#a90f0b"/><stop offset="0.7066" stop-color="#b50f0b"/><stop offset="0.7181" stop-color="#d40f0b"/><stop offset="0.7259" stop-color="#f20f0b"/><stop offset="0.7297" stop-color="#fe150b"/><stop offset="0.7452" stop-color="#fe6a0b"/><stop offset="0.7645" stop-color="#feea0b"/><stop offset="0.7683" stop-color="#eef51c"/><stop offset="0.7954" stop-color="#36f5d4"/><stop offset="0.7992" stop-color="#1df5ec"/><stop offset="0.8069" stop-color="#18ccf1"/><stop offset="0.8263" stop-color="#1868f1"/><stop offset="0.8456" stop-color="#181df1"/><stop offset="0.8494" stop-color="#1810f1"/><stop offset="0.8726" stop-color="#180fbb"/><stop offset="0.8958" stop-color="#180f9b"/><stop offset="0.9305" stop-color="#180f87"/><stop offset="0.9923" stop-color="#180f83"/><stop offset="1.0000" stop-color="#180f84"/></linearGradient><linearGradient id="a14" gradientUnits="userSpaceOnUse" x1="417.00" y1="0" x2="638.31" y2="0"><stop offset="0.0000" stop-color="#180f7e"/><stop offset="0.1544" stop-color="#180f7f"/><stop offset="0.2278" stop-color="#180f86"/><stop offset="0.2625" stop-color="#180f9c"/><stop offset="0.2857" stop-color="#180fbc"/><stop offset="0.3050" stop-color="#180fe9"/><stop offset="0.3089" stop-color="#1813f1"/><stop offset="0.3282" stop-color="#185bf1"/><stop offset="0.3475" stop-color="#18bbf1"/><stop offset="0.3552" stop-color="#18e8f1"/><stop offset="0.3591" stop-color="#23f5e6"/><stop offset="0.3900" stop-color="#f4f515"/><stop offset="0.3938" stop-color="#fee40b"/><stop offset="0.4131" stop-color="#fe650b"/><stop offset="0.4286" stop-color="#fe110b"/><stop offset="0.4440" stop-color="#c40f0b"/><stop offset="0.4556" stop-color="#ad0f0b"/><stop offset="0.4672" stop-color="#a80f0b"/><stop offset="0.4788" stop-color="#b60f0b"/><stop offset="0.4903" stop-color="#d50f0b"/><stop offset="0.4981" stop-color="#f20f0b"/><stop offset="0.5019" stop-color="#fe150b"/><stop offset="0.5444" stop-color="#fee90b"/><stop offset="0.5483" stop-color="#f9f510"/><stop offset="0.5598" stop-color="#d0f539"/><stop offset="0.5714" stop-color="#b9f550"/><stop offset="0.5830" stop-color="#b6f553"/><stop offset="0.5946" stop-color="#c8f541"/><stop offset="0.6062" stop-color="#edf51c"/><stop offset="0.6100" stop-color="#fdf50c"/><stop offset="0.6255" stop-color="#feac0b"/><stop offset="0.6525" stop-color="#fe220b"/><stop offset="0.6564" stop-color="#fe110b"/><stop offset="0.6718" stop-color="#c70f0b"/><stop offset="0.6834" stop-color="#ae0f0b"/><stop offset="0.6950" stop-color="#a70f0b"/><stop offset="0.7066" stop-color="#b40f0b"/><stop offset="0.7181" stop-color="#d30f0b"/><stop offset="0.7259" stop-color="#f20f0b"/><stop offset="0.7297" stop-color="#fe150b"/><stop offset="0.7452" stop-color="#fe6a0b"/><stop offset="0.7645" stop-color="#feea0b"/><stop offset="0.7683" stop-color="#eef51c"/><stop offset="0.7954" stop-color="#36f5d4"/><stop offset="0.7992" stop-color="#1df5ec"/><stop offset="0.8069" stop-color="#18ccf1"/><stop offset="0.8263" stop-color="#1868f1"/><stop offset="0.8456" stop-color="#181df1"/><stop offset="0.8494" stop-color="#1810f1"/><stop offset="0.8726" stop-color="#180fba"/><stop offset="0.8958" stop-color="#180f9b"/><stop offset="0.9305" stop-color="#180f86"/><stop offset="0.9807" stop-color="#180f82"/><stop offset="1.0000" stop-color="#180f84"/></linearGradient><linearGradient id="a15" gradientUnits="userSpaceOnUse" x1="417.00" y1="0" x2="638.31" y2="0"><stop offset="0.0000" stop-color="#180f7e"/><stop offset="0.1544" stop-color="#180f7f"/><stop offset="0.2278" stop-color="#180f86"/><stop offset="0.2625" stop-color="#180f9c"/><stop offset="0.2857" stop-color="#180fbc"/><stop offset="0.3050" stop-color="#180fe9"/><stop offset="0.3089" stop-color="#1813f1"/><stop offset="0.3282" stop-color="#185bf1"/><stop offset="0.3475" stop-color="#18bbf1"/><stop offset="0.3552" stop-color="#18e8f1"/><stop offset="0.3591" stop-color="#23f5e6"/><stop offset="0.3900" stop-color="#f4f515"/><stop offset="0.3938" stop-color="#fee40b"/><stop offset="0.4131" stop-color="#fe650b"/><stop offset="0.4286" stop-color="#fe100b"/><stop offset="0.4440" stop-color="#c40f0b"/><stop offset="0.4556" stop-color="#ac0f0b"/><stop offset="0.4672" stop-color="#a60f0b"/><stop offset="0.4788" stop-color="#b40f0b"/><stop offset="0.4903" stop-color="#d20f0b"/><stop offset="0.5019" stop-color="#fd0f0b"/><stop offset="0.5444" stop-color="#fed60b"/><stop offset="0.5521" stop-color="#fef20b"/><stop offset="0.5676" stop-color="#daf530"/><stop offset="0.5792" stop-color="#d1f538"/><stop offset="0.5907" stop-color="#dbf52e"/><stop offset="0.6023" stop-color="#f7f513"/><stop offset="0.6062" stop-color="#feef0b"/><stop offset="0.6216" stop-color="#feb00b"/><stop offset="0.6525" stop-color="#fe1c0b"/><stop offset="0.6564" stop-color="#fa0f0b"/><stop offset="0.6718" stop-color="#c30f0b"/><stop offset="0.6834" stop-color="#ac0f0b"/><stop offset="0.6950" stop-color="#a60f0b"/><stop offset="0.7066" stop-color="#b30f0b"/><stop offset="0.7181" stop-color="#d30f0b"/><stop offset="0.7259" stop-color="#f10f0b"/><stop offset="0.7297" stop-color="#fe150b"/><stop offset="0.7452" stop-color="#fe6a0b"/><stop offset="0.7645" stop-color="#feea0b"/><stop offset="0.7683" stop-color="#eef51c"/><stop offset="0.7954" stop-color="#36f5d4"/><stop offset="0.7992" stop-color="#1df5ec"/><stop offset="0.8069" stop-color="#18ccf1"/><stop offset="0.8263" stop-color="#1868f1"/><stop offset="0.8456" stop-color="#181cf1"/><stop offset="0.8494" stop-color="#1810f1"/><stop offset="0.8687" stop-color="#180fc2"/><stop offset="0.8919" stop-color="#180f9f"/><stop offset="0.9228" stop-color="#180f88"/><stop offset="0.9653" stop-color="#180f80"/><stop offset="1.0000" stop-color="#180f85"/></linearGradient><linearGradient id="b0" gradientUnits="userSpaceOnUse" x1="638.31" y1="0" x2="929.30" y2="0"><stop offset="0.0000" stop-color="#180f7f"/><stop offset="0.0579" stop-color="#180f84"/><stop offset="0.1004" stop-color="#180f8b"/><stop offset="0.1197" stop-color="#180f87"/><stop offset="0.1390" stop-color="#180fa2"/><stop offset="0.1699" stop-color="#180fde"/><stop offset="0.1853" stop-color="#180fea"/><stop offset="0.1969" stop-color="#180fe0"/><stop offset="0.2124" stop-color="#180fb5"/><stop offset="0.2162" stop-color="#180fb0"/><stop offset="0.2201" stop-color="#180fb9"/><stop offset="0.2239" stop-color="#180fce"/><stop offset="0.2278" stop-color="#180fea"/><stop offset="0.2317" stop-color="#1829f1"/><stop offset="0.2432" stop-color="#189bf1"/><stop offset="0.2510" stop-color="#18eef1"/><stop offset="0.2548" stop-color="#3df5cd"/><stop offset="0.2703" stop-color="#e5f524"/><stop offset="0.2741" stop-color="#fee60b"/><stop offset="0.2857" stop-color="#fe7d0b"/><stop offset="0.2934" stop-color="#fe440b"/><stop offset="0.3012" stop-color="#fe170b"/><stop offset="0.3050" stop-color="#f40f0b"/><stop offset="0.3127" stop-color="#dc0f0b"/><stop offset="0.3205" stop-color="#d10f0b"/><stop offset="0.3320" stop-color="#d90f0b"/><stop offset="0.3436" stop-color="#f90f0b"/><stop offset="0.3475" stop-color="#fe1a0b"/><stop offset="0.3629" stop-color="#fe670b"/><stop offset="0.3861" stop-color="#fbf50f"/><stop offset="0.4131" stop-color="#51f5b8"/><stop offset="0.4208" stop-color="#25f5e4"/><stop offset="0.4247" stop-color="#18edf1"/><stop offset="0.4440" stop-color="#1890f1"/><stop offset="0.4633" stop-color="#1847f1"/><stop offset="0.4826" stop-color="#1810f1"/><stop offset="0.5097" stop-color="#180fbe"/><stop offset="0.5405" stop-color="#180f9d"/><stop offset="0.5869" stop-color="#180f87"/><stop offset="0.6988" stop-color="#180f7f"/><stop offset="0.8533" stop-color="#180f7e"/><stop offset="1.0000" stop-color="#180f7e"/></linearGradient><linearGradient id="b1" gradientUnits="userSpaceOnUse" x1="638.31" y1="0" x2="929.30" y2="0"><stop offset="0.0000" stop-color="#180f7f"/><stop offset="0.0541" stop-color="#180f83"/><stop offset="0.0965" stop-color="#180f8b"/><stop offset="0.1197" stop-color="#180f82"/><stop offset="0.1467" stop-color="#180fb0"/><stop offset="0.1699" stop-color="#180fdc"/><stop offset="0.1815" stop-color="#180fe7"/><stop offset="0.1931" stop-color="#180fe2"/><stop offset="0.2008" stop-color="#180fd1"/><stop offset="0.2085" stop-color="#180fb3"/><stop offset="0.2162" stop-color="#180f84"/><stop offset="0.2201" stop-color="#180f9a"/><stop offset="0.2278" stop-color="#180fdc"/><stop offset="0.2317" stop-color="#181ef1"/><stop offset="0.2471" stop-color="#18bef1"/><stop offset="0.2510" stop-color="#18e9f1"/><stop offset="0.2548" stop-color="#38f5d2"/><stop offset="0.2703" stop-color="#e2f528"/><stop offset="0.2741" stop-color="#fee90b"/><stop offset="0.2857" stop-color="#fe7f0b"/><stop offset="0.2934" stop-color="#fe450b"/><stop offset="0.3012" stop-color="#fe180b"/><stop offset="0.3050" stop-color="#f40f0b"/><stop offset="0.3127" stop-color="#dc0f0b"/><stop offset="0.3205" stop-color="#d00f0b"/><stop offset="0.3320" stop-color="#d70f0b"/><stop offset="0.3436" stop-color="#f70f0b"/><stop offset="0.3475" stop-color="#fe180b"/><stop offset="0.3629" stop-color="#fe650b"/><stop offset="0.3861" stop-color="#fdf50d"/><stop offset="0.4131" stop-color="#53f5b6"/><stop offset="0.4208" stop-color="#27f5e2"/><stop offset="0.4247" stop-color="#18eef1"/><stop offset="0.4440" stop-color="#1891f1"/><stop offset="0.4633" stop-color="#1847f1"/><stop offset="0.4826" stop-color="#1810f1"/><stop offset="0.5097" stop-color="#180fbe"/><stop offset="0.5405" stop-color="#180f9d"/><stop offset="0.5869" stop-color="#180f87"/><stop offset="0.6950" stop-color="#180f7f"/><stop offset="0.8494" stop-color="#180f7e"/><stop offset="1.0000" stop-color="#180f7e"/></linearGradient><linearGradient id="b2" gradientUnits="userSpaceOnUse" x1="638.31" y1="0" x2="929.30" y2="0"><stop offset="0.0000" stop-color="#180f7f"/><stop offset="0.0579" stop-color="#180f84"/><stop offset="0.1004" stop-color="#180f8b"/><stop offset="0.1197" stop-color="#180f88"/><stop offset="0.1390" stop-color="#180fa2"/><stop offset="0.1699" stop-color="#180fde"/><stop offset="0.1853" stop-color="#180feb"/><stop offset="0.1969" stop-color="#180fe1"/><stop offset="0.2124" stop-color="#180fb9"/><stop offset="0.2162" stop-color="#180fb4"/><stop offset="0.2201" stop-color="#180fbd"/><stop offset="0.2239" stop-color="#180fd1"/><stop offset="0.2278" stop-color="#180fed"/><stop offset="0.2317" stop-color="#182bf1"/><stop offset="0.2432" stop-color="#189cf1"/><stop offset="0.2510" stop-color="#18eff1"/><stop offset="0.2587" stop-color="#68f5a1"/><stop offset="0.2703" stop-color="#e5f524"/><stop offset="0.2741" stop-color="#fee60b"/><stop offset="0.2857" stop-color="#fe7d0b"/><stop offset="0.2934" stop-color="#fe440b"/><stop offset="0.3012" stop-color="#fe170b"/><stop offset="0.3050" stop-color="#f40f0b"/><stop offset="0.3127" stop-color="#dc0f0b"/><stop offset="0.3205" stop-color="#d10f0b"/><stop offset="0.3320" stop-color="#d90f0b"/><stop offset="0.3436" stop-color="#f90f0b"/><stop offset="0.3475" stop-color="#fe1a0b"/><stop offset="0.3629" stop-color="#fe680b"/><stop offset="0.3861" stop-color="#faf50f"/><stop offset="0.4131" stop-color="#51f5b8"/><stop offset="0.4208" stop-color="#25f5e4"/><stop offset="0.4247" stop-color="#18edf1"/><stop offset="0.4440" stop-color="#1890f1"/><stop offset="0.4633" stop-color="#1846f1"/><stop offset="0.4826" stop-color="#1810f1"/><stop offset="0.5097" stop-color="#180fbe"/><stop offset="0.5405" stop-color="#180f9d"/><stop offset="0.5869" stop-color="#180f87"/><stop offset="0.6988" stop-color="#180f7f"/><stop offset="0.8533" stop-color="#180f7e"/><stop offset="1.0000" stop-color="#180f7e"/></linearGradient><linearGradient id="b3" gradientUnits="userSpaceOnUse" x1="638.31" y1="0" x2="929.30" y2="0"><stop offset="0.0000" stop-color="#180f80"/><stop offset="0.0618" stop-color="#180f86"/><stop offset="0.1236" stop-color="#180f92"/><stop offset="0.1429" stop-color="#180fae"/><stop offset="0.1737" stop-color="#180fe9"/><stop offset="0.1853" stop-color="#1811f1"/><stop offset="0.2008" stop-color="#180feb"/><stop offset="0.2124" stop-color="#180fe0"/><stop offset="0.2162" stop-color="#180fe3"/><stop offset="0.2201" stop-color="#180fec"/><stop offset="0.2239" stop-color="#181af1"/><stop offset="0.2317" stop-color="#184bf1"/><stop offset="0.2432" stop-color="#18b2f1"/><stop offset="0.2471" stop-color="#18d9f1"/><stop offset="0.2510" stop-color="#25f5e5"/><stop offset="0.2703" stop-color="#f0f519"/><stop offset="0.2741" stop-color="#fedd0b"/><stop offset="0.2857" stop-color="#fe770b"/><stop offset="0.2973" stop-color="#fe290b"/><stop offset="0.3012" stop-color="#fe150b"/><stop offset="0.3089" stop-color="#e60f0b"/><stop offset="0.3166" stop-color="#d60f0b"/><stop offset="0.3243" stop-color="#d40f0b"/><stop offset="0.3359" stop-color="#e60f0b"/><stop offset="0.3436" stop-color="#fe110b"/><stop offset="0.3552" stop-color="#fe450b"/><stop offset="0.3745" stop-color="#feb50b"/><stop offset="0.3822" stop-color="#fee60b"/><stop offset="0.3861" stop-color="#f3f516"/><stop offset="0.4131" stop-color="#4bf5be"/><stop offset="0.4208" stop-color="#20f5e9"/><stop offset="0.4247" stop-color="#18e8f1"/><stop offset="0.4440" stop-color="#188cf1"/><stop offset="0.4633" stop-color="#1844f1"/><stop offset="0.4826" stop-color="#180fef"/><stop offset="0.5058" stop-color="#180fc3"/><stop offset="0.5367" stop-color="#180f9f"/><stop offset="0.5792" stop-color="#180f89"/><stop offset="0.6718" stop-color="#180f7f"/><stop offset="0.8263" stop-color="#180f7e"/><stop offset="0.9807" stop-color="#180f7e"/><stop offset="1.0000" stop-color="#180f7e"/></linearGradient><linearGradient id="b4" gradientUnits="userSpaceOnUse" x1="638.31" y1="0" x2="929.30" y2="0"><stop offset="0.0000" stop-color="#180f80"/><stop offset="0.0656" stop-color="#180f88"/><stop offset="0.1236" stop-color="#180f9a"/><stop offset="0.1429" stop-color="#180fb5"/><stop offset="0.1737" stop-color="#1810f1"/><stop offset="0.1892" stop-color="#1820f1"/><stop offset="0.2124" stop-color="#1827f1"/><stop offset="0.2201" stop-color="#1838f1"/><stop offset="0.2278" stop-color="#185cf1"/><stop offset="0.2355" stop-color="#1890f1"/><stop offset="0.2471" stop-color="#1af5f0"/><stop offset="0.2703" stop-color="#fef30b"/><stop offset="0.2819" stop-color="#fe8c0b"/><stop offset="0.2934" stop-color="#fe3a0b"/><stop offset="0.3012" stop-color="#fe120b"/><stop offset="0.3127" stop-color="#de0f0b"/><stop offset="0.3205" stop-color="#d80f0b"/><stop offset="0.3320" stop-color="#e40f0b"/><stop offset="0.3398" stop-color="#fa0f0b"/><stop offset="0.3475" stop-color="#fe2a0b"/><stop offset="0.3629" stop-color="#fe7b0b"/><stop offset="0.3822" stop-color="#fef20b"/><stop offset="0.4170" stop-color="#2df5dc"/><stop offset="0.4208" stop-color="#18f4f1"/><stop offset="0.4402" stop-color="#1896f1"/><stop offset="0.4595" stop-color="#184cf1"/><stop offset="0.4788" stop-color="#1814f1"/><stop offset="0.4865" stop-color="#180fe4"/><stop offset="0.5135" stop-color="#180fb6"/><stop offset="0.5483" stop-color="#180f96"/><stop offset="0.6023" stop-color="#180f84"/><stop offset="0.7568" stop-color="#180f7e"/><stop offset="0.9112" stop-color="#180f7e"/><stop offset="1.0000" stop-color="#180f7e"/></linearGradient><linearGradient id="b5" gradientUnits="userSpaceOnUse" x1="638.31" y1="0" x2="929.30" y2="0"><stop offset="0.0000" stop-color="#180f80"/><stop offset="0.0656" stop-color="#180f8a"/><stop offset="0.1197" stop-color="#180f9e"/><stop offset="0.1390" stop-color="#180fb7"/><stop offset="0.1660" stop-color="#180fee"/><stop offset="0.1931" stop-color="#1837f1"/><stop offset="0.2124" stop-color="#1850f1"/><stop offset="0.2201" stop-color="#1866f1"/><stop offset="0.2278" stop-color="#188af1"/><stop offset="0.2355" stop-color="#18bbf1"/><stop offset="0.2432" stop-color="#1cf5ee"/><stop offset="0.2664" stop-color="#f2f518"/><stop offset="0.2703" stop-color="#fede0b"/><stop offset="0.2819" stop-color="#fe7e0b"/><stop offset="0.2934" stop-color="#fe330b"/><stop offset="0.3012" stop-color="#fe0f0b"/><stop offset="0.3089" stop-color="#e70f0b"/><stop offset="0.3166" stop-color="#de0f0b"/><stop offset="0.3282" stop-color="#e60f0b"/><stop offset="0.3359" stop-color="#fa0f0b"/><stop offset="0.3398" stop-color="#fe180b"/><stop offset="0.3514" stop-color="#fe4b0b"/><stop offset="0.3707" stop-color="#feb90b"/><stop offset="0.3784" stop-color="#fee90b"/><stop offset="0.3822" stop-color="#f1f518"/><stop offset="0.4131" stop-color="#36f5d3"/><stop offset="0.4170" stop-color="#21f5e8"/><stop offset="0.4208" stop-color="#18e9f1"/><stop offset="0.4402" stop-color="#188ef1"/><stop offset="0.4595" stop-color="#1846f1"/><stop offset="0.4788" stop-color="#180ff1"/><stop offset="0.5058" stop-color="#180fbe"/><stop offset="0.5367" stop-color="#180f9d"/><stop offset="0.5830" stop-color="#180f88"/><stop offset="0.6911" stop-color="#180f7f"/><stop offset="0.8456" stop-color="#180f7e"/><stop offset="1.0000" stop-color="#180f7e"/></linearGradient><linearGradient id="b6" gradientUnits="userSpaceOnUse" x1="638.31" y1="0" x2="929.30" y2="0"><stop offset="0.0000" stop-color="#180f80"/><stop offset="0.0656" stop-color="#180f8b"/><stop offset="0.1158" stop-color="#180fa3"/><stop offset="0.1390" stop-color="#180fc0"/><stop offset="0.1622" stop-color="#1810f1"/><stop offset="0.2124" stop-color="#1878f1"/><stop offset="0.2239" stop-color="#18a4f1"/><stop offset="0.2355" stop-color="#18e8f1"/><stop offset="0.2394" stop-color="#27f5e2"/><stop offset="0.2548" stop-color="#a7f562"/><stop offset="0.2625" stop-color="#ebf51e"/><stop offset="0.2664" stop-color="#fee60b"/><stop offset="0.2780" stop-color="#fe890b"/><stop offset="0.2896" stop-color="#fe3e0b"/><stop offset="0.2973" stop-color="#fe1a0b"/><stop offset="0.3012" stop-color="#fb0f0b"/><stop offset="0.3089" stop-color="#e90f0b"/><stop offset="0.3205" stop-color="#e60f0b"/><stop offset="0.3320" stop-color="#fc0f0b"/><stop offset="0.3398" stop-color="#fe280b"/><stop offset="0.3552" stop-color="#fe730b"/><stop offset="0.3745" stop-color="#fee50b"/><stop offset="0.3784" stop-color="#f5f514"/><stop offset="0.4093" stop-color="#3cf5cd"/><stop offset="0.4170" stop-color="#18eff1"/><stop offset="0.4363" stop-color="#1894f1"/><stop offset="0.4556" stop-color="#184af1"/><stop offset="0.4749" stop-color="#1813f1"/><stop offset="0.4942" stop-color="#180fcd"/><stop offset="0.5251" stop-color="#180fa5"/><stop offset="0.5676" stop-color="#180f8c"/><stop offset="0.6486" stop-color="#180f80"/><stop offset="0.8031" stop-color="#180f7e"/><stop offset="0.9575" stop-color="#180f7e"/><stop offset="1.0000" stop-color="#180f7e"/></linearGradient><linearGradient id="b7" gradientUnits="userSpaceOnUse" x1="638.31" y1="0" x2="929.30" y2="0"><stop offset="0.0000" stop-color="#180f81"/><stop offset="0.0656" stop-color="#180f8d"/><stop offset="0.1120" stop-color="#180fa7"/><stop offset="0.1351" stop-color="#180fc4"/><stop offset="0.1544" stop-color="#180fec"/><stop offset="0.1622" stop-color="#181df1"/><stop offset="0.2085" stop-color="#1894f1"/><stop offset="0.2201" stop-color="#18bff1"/><stop offset="0.2278" stop-color="#18e6f1"/><stop offset="0.2317" stop-color="#20f5e9"/><stop offset="0.2432" stop-color="#70f599"/><stop offset="0.2587" stop-color="#ebf51e"/><stop offset="0.2625" stop-color="#fee80b"/><stop offset="0.2780" stop-color="#fe750b"/><stop offset="0.2896" stop-color="#fe330b"/><stop offset="0.2973" stop-color="#fe140b"/><stop offset="0.3050" stop-color="#f00f0b"/><stop offset="0.3166" stop-color="#ec0f0b"/><stop offset="0.3282" stop-color="#fe120b"/><stop offset="0.3398" stop-color="#fe3c0b"/><stop offset="0.3552" stop-color="#fe8a0b"/><stop offset="0.3707" stop-color="#fee60b"/><stop offset="0.3745" stop-color="#f5f514"/><stop offset="0.4054" stop-color="#3ff5cb"/><stop offset="0.4131" stop-color="#18f2f1"/><stop offset="0.4324" stop-color="#1897f1"/><stop offset="0.4517" stop-color="#184df1"/><stop offset="0.4710" stop-color="#1816f1"/><stop offset="0.4749" stop-color="#180fee"/><stop offset="0.5019" stop-color="#180fbd"/><stop offset="0.5328" stop-color="#180f9c"/><stop offset="0.5792" stop-color="#180f87"/><stop offset="0.6911" stop-color="#180f7f"/><stop offset="0.8456" stop-color="#180f7e"/><stop offset="1.0000" stop-color="#180f7e"/></linearGradient><linearGradient id="b8" gradientUnits="userSpaceOnUse" x1="638.31" y1="0" x2="929.30" y2="0"><stop offset="0.0000" stop-color="#180f81"/><stop offset="0.0656" stop-color="#180f90"/><stop offset="0.1081" stop-color="#180fab"/><stop offset="0.1313" stop-color="#180fc9"/><stop offset="0.1506" stop-color="#180ff1"/><stop offset="0.1892" stop-color="#187af1"/><stop offset="0.2085" stop-color="#18b9f1"/><stop offset="0.2201" stop-color="#18ebf1"/><stop offset="0.2239" stop-color="#22f5e8"/><stop offset="0.2355" stop-color="#66f5a3"/><stop offset="0.2548" stop-color="#f1f518"/><stop offset="0.2587" stop-color="#fee40b"/><stop offset="0.2741" stop-color="#fe780b"/><stop offset="0.2857" stop-color="#fe380b"/><stop offset="0.2973" stop-color="#fe100b"/><stop offset="0.3089" stop-color="#f10f0b"/><stop offset="0.3205" stop-color="#fd0f0b"/><stop offset="0.3320" stop-color="#fe320b"/><stop offset="0.3475" stop-color="#fe7b0b"/><stop offset="0.3668" stop-color="#feeb0b"/><stop offset="0.3707" stop-color="#f0f519"/><stop offset="0.4015" stop-color="#3df5cc"/><stop offset="0.4093" stop-color="#18f2f1"/><stop offset="0.4324" stop-color="#1888f1"/><stop offset="0.4517" stop-color="#1842f1"/><stop offset="0.4672" stop-color="#1817f1"/><stop offset="0.4710" stop-color="#180fef"/><stop offset="0.4981" stop-color="#180fbe"/><stop offset="0.5290" stop-color="#180f9d"/><stop offset="0.5753" stop-color="#180f88"/><stop offset="0.6834" stop-color="#180f7f"/><stop offset="0.8378" stop-color="#180f7e"/><stop offset="0.9923" stop-color="#180f7e"/><stop offset="1.0000" stop-color="#180f7e"/></linearGradient><linearGradient id="b9" gradientUnits="userSpaceOnUse" x1="638.31" y1="0" x2="929.30" y2="0"><stop offset="0.0000" stop-color="#180f82"/><stop offset="0.0618" stop-color="#180f90"/><stop offset="0.1042" stop-color="#180fae"/><stop offset="0.1313" stop-color="#180fd4"/><stop offset="0.1467" stop-color="#1813f1"/><stop offset="0.1737" stop-color="#1861f1"/><stop offset="0.2008" stop-color="#18bff1"/><stop offset="0.2124" stop-color="#18eff1"/><stop offset="0.2162" stop-color="#25f5e4"/><stop offset="0.2317" stop-color="#7af58f"/><stop offset="0.2510" stop-color="#fbf50e"/><stop offset="0.2703" stop-color="#fe770b"/><stop offset="0.2819" stop-color="#fe3a0b"/><stop offset="0.2934" stop-color="#fe140b"/><stop offset="0.3012" stop-color="#f70f0b"/><stop offset="0.3127" stop-color="#fc0f0b"/><stop offset="0.3205" stop-color="#fe1e0b"/><stop offset="0.3320" stop-color="#fe490b"/><stop offset="0.3475" stop-color="#fe980b"/><stop offset="0.3629" stop-color="#fef30b"/><stop offset="0.3938" stop-color="#4df5bc"/><stop offset="0.4015" stop-color="#25f5e4"/><stop offset="0.4054" stop-color="#18eef1"/><stop offset="0.4286" stop-color="#1886f1"/><stop offset="0.4517" stop-color="#1836f1"/><stop offset="0.4672" stop-color="#180fef"/><stop offset="0.4942" stop-color="#180fbe"/><stop offset="0.5290" stop-color="#180f9b"/><stop offset="0.5792" stop-color="#180f86"/><stop offset="0.7143" stop-color="#180f7e"/><stop offset="0.8687" stop-color="#180f7e"/><stop offset="1.0000" stop-color="#180f7e"/></linearGradient><linearGradient id="b10" gradientUnits="userSpaceOnUse" x1="638.31" y1="0" x2="929.30" y2="0"><stop offset="0.0000" stop-color="#180f82"/><stop offset="0.0579" stop-color="#180f91"/><stop offset="0.0965" stop-color="#180fac"/><stop offset="0.1236" stop-color="#180fd0"/><stop offset="0.1390" stop-color="#180ff0"/><stop offset="0.1583" stop-color="#1843f1"/><stop offset="0.1853" stop-color="#18a1f1"/><stop offset="0.2046" stop-color="#18f1f1"/><stop offset="0.2124" stop-color="#39f5d0"/><stop offset="0.2317" stop-color="#a4f565"/><stop offset="0.2432" stop-color="#eef51b"/><stop offset="0.2471" stop-color="#feeb0b"/><stop offset="0.2664" stop-color="#fe720b"/><stop offset="0.2780" stop-color="#fe3a0b"/><stop offset="0.2896" stop-color="#fe160b"/><stop offset="0.2934" stop-color="#fd0f0b"/><stop offset="0.3050" stop-color="#fb0f0b"/><stop offset="0.3127" stop-color="#fe190b"/><stop offset="0.3243" stop-color="#fe3f0b"/><stop offset="0.3398" stop-color="#fe8c0b"/><stop offset="0.3552" stop-color="#fee70b"/><stop offset="0.3591" stop-color="#f4f516"/><stop offset="0.3861" stop-color="#58f5b1"/><stop offset="0.3977" stop-color="#1df5ec"/><stop offset="0.4054" stop-color="#18d5f1"/><stop offset="0.4286" stop-color="#1874f1"/><stop offset="0.4517" stop-color="#1829f1"/><stop offset="0.4633" stop-color="#180fee"/><stop offset="0.4903" stop-color="#180fbd"/><stop offset="0.5251" stop-color="#180f9a"/><stop offset="0.5753" stop-color="#180f86"/><stop offset="0.7104" stop-color="#180f7e"/><stop offset="0.8649" stop-color="#180f7e"/><stop offset="1.0000" stop-color="#180f7e"/></linearGradient><linearGradient id="b11" gradientUnits="userSpaceOnUse" x1="638.31" y1="0" x2="929.30" y2="0"><stop offset="0.0000" stop-color="#180f83"/><stop offset="0.0579" stop-color="#180f93"/><stop offset="0.0965" stop-color="#180fb2"/><stop offset="0.1236" stop-color="#180fda"/><stop offset="0.1351" stop-color="#1812f1"/><stop offset="0.1583" stop-color="#1854f1"/><stop offset="0.1853" stop-color="#18baf1"/><stop offset="0.1969" stop-color="#18eef1"/><stop offset="0.2008" stop-color="#23f5e6"/><stop offset="0.2201" stop-color="#88f581"/><stop offset="0.2394" stop-color="#fcf50d"/><stop offset="0.2625" stop-color="#fe6c0b"/><stop offset="0.2741" stop-color="#fe360b"/><stop offset="0.2857" stop-color="#fe150b"/><stop offset="0.2934" stop-color="#fa0f0b"/><stop offset="0.3012" stop-color="#fd0f0b"/><stop offset="0.3089" stop-color="#fe1d0b"/><stop offset="0.3205" stop-color="#fe450b"/><stop offset="0.3359" stop-color="#fe950b"/><stop offset="0.3514" stop-color="#fef50b"/><stop offset="0.3745" stop-color="#74f596"/><stop offset="0.3900" stop-color="#24f5e5"/><stop offset="0.3938" stop-color="#18eff1"/><stop offset="0.4208" stop-color="#187ef1"/><stop offset="0.4440" stop-color="#1831f1"/><stop offset="0.4556" stop-color="#1812f1"/><stop offset="0.4865" stop-color="#180fbc"/><stop offset="0.5212" stop-color="#180f9a"/><stop offset="0.5714" stop-color="#180f86"/><stop offset="0.7104" stop-color="#180f7e"/><stop offset="0.8649" stop-color="#180f7e"/><stop offset="1.0000" stop-color="#180f7e"/></linearGradient><linearGradient id="b12" gradientUnits="userSpaceOnUse" x1="638.31" y1="0" x2="929.30" y2="0"><stop offset="0.0000" stop-color="#180f83"/><stop offset="0.0541" stop-color="#180f93"/><stop offset="0.0888" stop-color="#180fae"/><stop offset="0.1158" stop-color="#180fd5"/><stop offset="0.1274" stop-color="#180fed"/><stop offset="0.1351" stop-color="#181ef1"/><stop offset="0.1583" stop-color="#1865f1"/><stop offset="0.1815" stop-color="#18c2f1"/><stop offset="0.1931" stop-color="#1cf5ed"/><stop offset="0.2162" stop-color="#96f573"/><stop offset="0.2317" stop-color="#f2f517"/><stop offset="0.2355" stop-color="#fee90b"/><stop offset="0.2587" stop-color="#fe640b"/><stop offset="0.2703" stop-color="#fe310b"/><stop offset="0.2819" stop-color="#fe120b"/><stop offset="0.2934" stop-color="#f90f0b"/><stop offset="0.3012" stop-color="#fe150b"/><stop offset="0.3127" stop-color="#fe380b"/><stop offset="0.3243" stop-color="#fe700b"/><stop offset="0.3436" stop-color="#fee90b"/><stop offset="0.3475" stop-color="#f0f519"/><stop offset="0.3668" stop-color="#77f592"/><stop offset="0.3822" stop-color="#27f5e2"/><stop offset="0.3861" stop-color="#18f1f1"/><stop offset="0.4131" stop-color="#1885f1"/><stop offset="0.4402" stop-color="#182df1"/><stop offset="0.4517" stop-color="#180ff1"/><stop offset="0.4749" stop-color="#180fc4"/><stop offset="0.5058" stop-color="#180fa2"/><stop offset="0.5521" stop-color="#180f89"/><stop offset="0.6486" stop-color="#180f7f"/><stop offset="0.8031" stop-color="#180f7e"/><stop offset="0.9575" stop-color="#180f7e"/><stop offset="1.0000" stop-color="#180f7e"/></linearGradient><linearGradient id="b13" gradientUnits="userSpaceOnUse" x1="638.31" y1="0" x2="929.30" y2="0"><stop offset="0.0000" stop-color="#180f84"/><stop offset="0.0541" stop-color="#180f95"/><stop offset="0.0888" stop-color="#180fb3"/><stop offset="0.1158" stop-color="#180fdd"/><stop offset="0.1236" stop-color="#180fee"/><stop offset="0.1351" stop-color="#1829f1"/><stop offset="0.1583" stop-color="#1876f1"/><stop offset="0.1815" stop-color="#18daf1"/><stop offset="0.1853" stop-color="#18ecf1"/><stop offset="0.1892" stop-color="#23f5e6"/><stop offset="0.2162" stop-color="#b8f551"/><stop offset="0.2278" stop-color="#fdf50c"/><stop offset="0.2510" stop-color="#fe700b"/><stop offset="0.2625" stop-color="#fe3a0b"/><stop offset="0.2741" stop-color="#fe150b"/><stop offset="0.2819" stop-color="#f70f0b"/><stop offset="0.2934" stop-color="#fa0f0b"/><stop offset="0.2973" stop-color="#fe130b"/><stop offset="0.3089" stop-color="#fe380b"/><stop offset="0.3205" stop-color="#fe740b"/><stop offset="0.3398" stop-color="#fdf50c"/><stop offset="0.3591" stop-color="#7bf58e"/><stop offset="0.3745" stop-color="#25f5e4"/><stop offset="0.3784" stop-color="#18f0f1"/><stop offset="0.3977" stop-color="#18a2f1"/><stop offset="0.4324" stop-color="#1833f1"/><stop offset="0.4440" stop-color="#1814f1"/><stop offset="0.4517" stop-color="#180fe4"/><stop offset="0.4749" stop-color="#180fbc"/><stop offset="0.5097" stop-color="#180f9b"/><stop offset="0.5598" stop-color="#180f86"/><stop offset="0.6950" stop-color="#180f7e"/><stop offset="0.8494" stop-color="#180f7e"/><stop offset="1.0000" stop-color="#180f7e"/></linearGradient><linearGradient id="b14" gradientUnits="userSpaceOnUse" x1="638.31" y1="0" x2="929.30" y2="0"><stop offset="0.0000" stop-color="#180f84"/><stop offset="0.0541" stop-color="#180f97"/><stop offset="0.0888" stop-color="#180fb8"/><stop offset="0.1158" stop-color="#180fe5"/><stop offset="0.1236" stop-color="#1815f1"/><stop offset="0.1467" stop-color="#185af1"/><stop offset="0.1660" stop-color="#18a6f1"/><stop offset="0.1815" stop-color="#18f0f1"/><stop offset="0.1892" stop-color="#3bf5ce"/><stop offset="0.2201" stop-color="#eef51b"/><stop offset="0.2239" stop-color="#feed0b"/><stop offset="0.2471" stop-color="#fe680b"/><stop offset="0.2587" stop-color="#fe330b"/><stop offset="0.2703" stop-color="#fd0f0b"/><stop offset="0.2819" stop-color="#f00f0b"/><stop offset="0.2934" stop-color="#fd0f0b"/><stop offset="0.3012" stop-color="#fe260b"/><stop offset="0.3127" stop-color="#fe5e0b"/><stop offset="0.3243" stop-color="#fea90b"/><stop offset="0.3320" stop-color="#fee10b"/><stop offset="0.3359" stop-color="#f4f515"/><stop offset="0.3552" stop-color="#67f5a2"/><stop offset="0.3668" stop-color="#22f5e7"/><stop offset="0.3707" stop-color="#18ebf1"/><stop offset="0.3861" stop-color="#18abf1"/><stop offset="0.4247" stop-color="#1838f1"/><stop offset="0.4402" stop-color="#1810f1"/><stop offset="0.4633" stop-color="#180fc3"/><stop offset="0.4903" stop-color="#180fa4"/><stop offset="0.5405" stop-color="#180f8a"/><stop offset="0.6332" stop-color="#180f7f"/><stop offset="0.7876" stop-color="#180f7e"/><stop offset="0.9421" stop-color="#180f7e"/><stop offset="1.0000" stop-color="#180f7e"/></linearGradient><linearGradient id="b15" gradientUnits="userSpaceOnUse" x1="638.31" y1="0" x2="929.30" y2="0"><stop offset="0.0000" stop-color="#180f85"/><stop offset="0.0502" stop-color="#180f97"/><stop offset="0.0849" stop-color="#180fb7"/><stop offset="0.1120" stop-color="#180fe4"/><stop offset="0.1197" stop-color="#1814f1"/><stop offset="0.1390" stop-color="#184cf1"/><stop offset="0.1583" stop-color="#1895f1"/><stop offset="0.1776" stop-color="#18f0f1"/><stop offset="0.1853" stop-color="#3cf5cd"/><stop offset="0.2162" stop-color="#f2f517"/><stop offset="0.2201" stop-color="#fee90b"/><stop offset="0.2432" stop-color="#fe630b"/><stop offset="0.2548" stop-color="#fe2e0b"/><stop offset="0.2625" stop-color="#fe130b"/><stop offset="0.2741" stop-color="#ec0f0b"/><stop offset="0.2857" stop-color="#ef0f0b"/><stop offset="0.2934" stop-color="#fe120b"/><stop offset="0.3050" stop-color="#fe430b"/><stop offset="0.3166" stop-color="#fe8c0b"/><stop offset="0.3282" stop-color="#fee40b"/><stop offset="0.3320" stop-color="#eff51a"/><stop offset="0.3514" stop-color="#56f5b4"/><stop offset="0.3591" stop-color="#21f5e8"/><stop offset="0.3629" stop-color="#18e7f1"/><stop offset="0.3745" stop-color="#18aff1"/><stop offset="0.3900" stop-color="#187df1"/><stop offset="0.4324" stop-color="#1815f1"/><stop offset="0.4402" stop-color="#180fe4"/><stop offset="0.4633" stop-color="#180fb9"/><stop offset="0.4903" stop-color="#180f9f"/><stop offset="0.5483" stop-color="#180f86"/><stop offset="0.6911" stop-color="#180f7e"/><stop offset="0.8456" stop-color="#180f7e"/><stop offset="1.0000" stop-color="#180f7e"/></linearGradient><linearGradient id="b16" gradientUnits="userSpaceOnUse" x1="638.31" y1="0" x2="929.30" y2="0"><stop offset="0.0000" stop-color="#180f85"/><stop offset="0.0502" stop-color="#180f98"/><stop offset="0.0811" stop-color="#180fb5"/><stop offset="0.1081" stop-color="#180fe2"/><stop offset="0.1158" stop-color="#1812f1"/><stop offset="0.1351" stop-color="#1848f1"/><stop offset="0.1544" stop-color="#1891f1"/><stop offset="0.1737" stop-color="#18ecf1"/><stop offset="0.1776" stop-color="#24f5e5"/><stop offset="0.2046" stop-color="#c2f547"/><stop offset="0.2124" stop-color="#f2f517"/><stop offset="0.2162" stop-color="#fee90b"/><stop offset="0.2394" stop-color="#fe610b"/><stop offset="0.2510" stop-color="#fe2a0b"/><stop offset="0.2587" stop-color="#fd0f0b"/><stop offset="0.2703" stop-color="#e60f0b"/><stop offset="0.2819" stop-color="#e80f0b"/><stop offset="0.2896" stop-color="#f80f0b"/><stop offset="0.2934" stop-color="#fe170b"/><stop offset="0.3050" stop-color="#fe510b"/><stop offset="0.3166" stop-color="#fea20b"/><stop offset="0.3243" stop-color="#fee20b"/><stop offset="0.3282" stop-color="#eff51a"/><stop offset="0.3475" stop-color="#48f5c1"/><stop offset="0.3514" stop-color="#29f5e0"/><stop offset="0.3552" stop-color="#18eaf1"/><stop offset="0.3668" stop-color="#18a4f1"/><stop offset="0.3784" stop-color="#1877f1"/><stop offset="0.3977" stop-color="#184ff1"/><stop offset="0.4286" stop-color="#1810f1"/><stop offset="0.4595" stop-color="#180fb4"/><stop offset="0.4826" stop-color="#180f9e"/><stop offset="0.5521" stop-color="#180f84"/><stop offset="0.7066" stop-color="#180f7e"/><stop offset="0.8610" stop-color="#180f7e"/><stop offset="1.0000" stop-color="#180f7e"/></linearGradient><linearGradient id="b17" gradientUnits="userSpaceOnUse" x1="638.31" y1="0" x2="929.30" y2="0"><stop offset="0.0000" stop-color="#180f86"/><stop offset="0.0502" stop-color="#180f9a"/><stop offset="0.0811" stop-color="#180fb8"/><stop offset="0.1081" stop-color="#180fe7"/><stop offset="0.1120" stop-color="#180ff0"/><stop offset="0.1313" stop-color="#1844f1"/><stop offset="0.1506" stop-color="#188bf1"/><stop offset="0.1699" stop-color="#18e6f1"/><stop offset="0.1737" stop-color="#1ef5eb"/><stop offset="0.2008" stop-color="#bdf54d"/><stop offset="0.2085" stop-color="#edf51c"/><stop offset="0.2124" stop-color="#feed0b"/><stop offset="0.2355" stop-color="#fe620b"/><stop offset="0.2471" stop-color="#fe2a0b"/><stop offset="0.2548" stop-color="#fb0f0b"/><stop offset="0.2664" stop-color="#e10f0b"/><stop offset="0.2780" stop-color="#e00f0b"/><stop offset="0.2857" stop-color="#ef0f0b"/><stop offset="0.2896" stop-color="#fb0f0b"/><stop offset="0.2973" stop-color="#fe2f0b"/><stop offset="0.3089" stop-color="#fe790b"/><stop offset="0.3205" stop-color="#fed80b"/><stop offset="0.3243" stop-color="#f7f512"/><stop offset="0.3475" stop-color="#1ff5ea"/><stop offset="0.3514" stop-color="#18dbf1"/><stop offset="0.3591" stop-color="#18a2f1"/><stop offset="0.3668" stop-color="#1876f1"/><stop offset="0.3745" stop-color="#1858f1"/><stop offset="0.3861" stop-color="#1841f1"/><stop offset="0.4131" stop-color="#1822f1"/><stop offset="0.4247" stop-color="#180fee"/><stop offset="0.4556" stop-color="#180fb1"/><stop offset="0.4749" stop-color="#180f9c"/><stop offset="0.5598" stop-color="#180f82"/><stop offset="0.7143" stop-color="#180f7e"/><stop offset="0.8687" stop-color="#180f7e"/><stop offset="1.0000" stop-color="#180f7e"/></linearGradient><linearGradient id="b18" gradientUnits="userSpaceOnUse" x1="638.31" y1="0" x2="929.30" y2="0"><stop offset="0.0000" stop-color="#180f86"/><stop offset="0.0463" stop-color="#180f98"/><stop offset="0.0772" stop-color="#180fb5"/><stop offset="0.1042" stop-color="#180fe2"/><stop offset="0.1120" stop-color="#1812f1"/><stop offset="0.1313" stop-color="#184af1"/><stop offset="0.1506" stop-color="#1894f1"/><stop offset="0.1699" stop-color="#18f1f1"/><stop offset="0.1776" stop-color="#3ff5cb"/><stop offset="0.2085" stop-color="#fdf50d"/><stop offset="0.2317" stop-color="#fe680b"/><stop offset="0.2471" stop-color="#fe1c0b"/><stop offset="0.2510" stop-color="#fc0f0b"/><stop offset="0.2625" stop-color="#de0f0b"/><stop offset="0.2741" stop-color="#d80f0b"/><stop offset="0.2819" stop-color="#e40f0b"/><stop offset="0.2896" stop-color="#fe0f0b"/><stop offset="0.2973" stop-color="#fe360b"/><stop offset="0.3089" stop-color="#fe860b"/><stop offset="0.3205" stop-color="#feec0b"/><stop offset="0.3243" stop-color="#e1f529"/><stop offset="0.3436" stop-color="#1ff5eb"/><stop offset="0.3475" stop-color="#18d6f1"/><stop offset="0.3591" stop-color="#1876f1"/><stop offset="0.3668" stop-color="#1847f1"/><stop offset="0.3745" stop-color="#182cf1"/><stop offset="0.3822" stop-color="#1821f1"/><stop offset="0.4054" stop-color="#181df1"/><stop offset="0.4170" stop-color="#1810f1"/><stop offset="0.4595" stop-color="#180fa3"/><stop offset="0.4788" stop-color="#180f93"/><stop offset="0.5753" stop-color="#180f80"/><stop offset="0.7297" stop-color="#180f7e"/><stop offset="0.8842" stop-color="#180f7e"/><stop offset="1.0000" stop-color="#180f7e"/></linearGradient><linearGradient id="b19" gradientUnits="userSpaceOnUse" x1="638.31" y1="0" x2="929.30" y2="0"><stop offset="0.0000" stop-color="#180f86"/><stop offset="0.0463" stop-color="#180f99"/><stop offset="0.0772" stop-color="#180fb7"/><stop offset="0.1042" stop-color="#180fe5"/><stop offset="0.1120" stop-color="#1815f1"/><stop offset="0.1313" stop-color="#184ef1"/><stop offset="0.1506" stop-color="#189af1"/><stop offset="0.1660" stop-color="#18e4f1"/><stop offset="0.1699" stop-color="#1cf5ed"/><stop offset="0.1931" stop-color="#a5f564"/><stop offset="0.2046" stop-color="#eff51a"/><stop offset="0.2085" stop-color="#feeb0b"/><stop offset="0.2317" stop-color="#fe5d0b"/><stop offset="0.2432" stop-color="#fe230b"/><stop offset="0.2471" stop-color="#fe130b"/><stop offset="0.2625" stop-color="#d80f0b"/><stop offset="0.2703" stop-color="#d30f0b"/><stop offset="0.2780" stop-color="#db0f0b"/><stop offset="0.2896" stop-color="#fe120b"/><stop offset="0.2973" stop-color="#fe3b0b"/><stop offset="0.3089" stop-color="#fe900b"/><stop offset="0.3166" stop-color="#fed60b"/><stop offset="0.3205" stop-color="#f7f512"/><stop offset="0.3398" stop-color="#2bf5de"/><stop offset="0.3436" stop-color="#18dff1"/><stop offset="0.3552" stop-color="#186ff1"/><stop offset="0.3629" stop-color="#1832f1"/><stop offset="0.3668" stop-color="#181af1"/><stop offset="0.3707" stop-color="#180fea"/><stop offset="0.3745" stop-color="#180fe0"/><stop offset="0.3822" stop-color="#180fdf"/><stop offset="0.3977" stop-color="#180ff0"/><stop offset="0.4131" stop-color="#180fed"/><stop offset="0.4324" stop-color="#180fce"/><stop offset="0.4595" stop-color="#180f9b"/><stop offset="0.4749" stop-color="#180f8d"/><stop offset="0.5869" stop-color="#180f80"/><stop offset="0.7413" stop-color="#180f7e"/><stop offset="0.8958" stop-color="#180f7e"/><stop offset="1.0000" stop-color="#180f7e"/></linearGradient><linearGradient id="b20" gradientUnits="userSpaceOnUse" x1="638.31" y1="0" x2="929.30" y2="0"><stop offset="0.0000" stop-color="#180f86"/><stop offset="0.0463" stop-color="#180f9a"/><stop offset="0.0772" stop-color="#180fb8"/><stop offset="0.1042" stop-color="#180fe7"/><stop offset="0.1081" stop-color="#180fef"/><stop offset="0.1274" stop-color="#1844f1"/><stop offset="0.1467" stop-color="#188cf1"/><stop offset="0.1660" stop-color="#18e9f1"/><stop offset="0.1699" stop-color="#21f5e8"/><stop offset="0.1931" stop-color="#abf55e"/><stop offset="0.2046" stop-color="#f5f514"/><stop offset="0.2085" stop-color="#fee40b"/><stop offset="0.2317" stop-color="#fe560b"/><stop offset="0.2432" stop-color="#fe1d0b"/><stop offset="0.2471" stop-color="#fc0f0b"/><stop offset="0.2587" stop-color="#da0f0b"/><stop offset="0.2703" stop-color="#d10f0b"/><stop offset="0.2780" stop-color="#da0f0b"/><stop offset="0.2896" stop-color="#fe130b"/><stop offset="0.2973" stop-color="#fe3e0b"/><stop offset="0.3089" stop-color="#fe970b"/><stop offset="0.3166" stop-color="#fede0b"/><stop offset="0.3205" stop-color="#edf51c"/><stop offset="0.3398" stop-color="#1bf5ee"/><stop offset="0.3552" stop-color="#1855f1"/><stop offset="0.3629" stop-color="#180ff1"/><stop offset="0.3668" stop-color="#180fd3"/><stop offset="0.3707" stop-color="#180fbc"/><stop offset="0.3745" stop-color="#180fb1"/><stop offset="0.3784" stop-color="#180fb3"/><stop offset="0.3938" stop-color="#180fde"/><stop offset="0.4054" stop-color="#180fea"/><stop offset="0.4170" stop-color="#180fe4"/><stop offset="0.4633" stop-color="#180f90"/><stop offset="0.4749" stop-color="#180f86"/><stop offset="0.5097" stop-color="#180f8b"/><stop offset="0.5714" stop-color="#180f7f"/><stop offset="0.7259" stop-color="#180f7e"/><stop offset="0.8803" stop-color="#180f7e"/><stop offset="1.0000" stop-color="#180f7e"/></linearGradient><linearGradient id="b21" gradientUnits="userSpaceOnUse" x1="638.31" y1="0" x2="929.30" y2="0"><stop offset="0.0000" stop-color="#180f86"/><stop offset="0.0463" stop-color="#180f9a"/><stop offset="0.0772" stop-color="#180fb8"/><stop offset="0.1042" stop-color="#180fe7"/><stop offset="0.1081" stop-color="#180ff0"/><stop offset="0.1274" stop-color="#1845f1"/><stop offset="0.1467" stop-color="#188df1"/><stop offset="0.1660" stop-color="#18eaf1"/><stop offset="0.1699" stop-color="#22f5e7"/><stop offset="0.1931" stop-color="#adf55d"/><stop offset="0.2046" stop-color="#f7f512"/><stop offset="0.2085" stop-color="#fee20b"/><stop offset="0.2317" stop-color="#fe540b"/><stop offset="0.2432" stop-color="#fe1b0b"/><stop offset="0.2471" stop-color="#fa0f0b"/><stop offset="0.2587" stop-color="#d90f0b"/><stop offset="0.2703" stop-color="#d00f0b"/><stop offset="0.2780" stop-color="#da0f0b"/><stop offset="0.2896" stop-color="#fe140b"/><stop offset="0.2973" stop-color="#fe3f0b"/><stop offset="0.3089" stop-color="#fe990b"/><stop offset="0.3166" stop-color="#fee10b"/><stop offset="0.3205" stop-color="#eaf51f"/><stop offset="0.3398" stop-color="#18f2f1"/><stop offset="0.3552" stop-color="#184cf1"/><stop offset="0.3591" stop-color="#1826f1"/><stop offset="0.3629" stop-color="#180fe3"/><stop offset="0.3745" stop-color="#180f82"/><stop offset="0.3822" stop-color="#180faf"/><stop offset="0.3900" stop-color="#180fcf"/><stop offset="0.4015" stop-color="#180fe5"/><stop offset="0.4131" stop-color="#180fe6"/><stop offset="0.4286" stop-color="#180fd1"/><stop offset="0.4633" stop-color="#180f8e"/><stop offset="0.4749" stop-color="#180f7f"/><stop offset="0.4981" stop-color="#180f8b"/><stop offset="0.5753" stop-color="#180f7f"/><stop offset="0.7297" stop-color="#180f7e"/><stop offset="0.8842" stop-color="#180f7e"/><stop offset="1.0000" stop-color="#180f7e"/></linearGradient><linearGradient id="b22" gradientUnits="userSpaceOnUse" x1="638.31" y1="0" x2="929.30" y2="0"><stop offset="0.0000" stop-color="#180f86"/><stop offset="0.0463" stop-color="#180f99"/><stop offset="0.0772" stop-color="#180fb8"/><stop offset="0.1042" stop-color="#180fe7"/><stop offset="0.1081" stop-color="#180fef"/><stop offset="0.1274" stop-color="#1844f1"/><stop offset="0.1467" stop-color="#188cf1"/><stop offset="0.1660" stop-color="#18e8f1"/><stop offset="0.1699" stop-color="#20f5e9"/><stop offset="0.1931" stop-color="#aaf55f"/><stop offset="0.2046" stop-color="#f5f514"/><stop offset="0.2085" stop-color="#fee50b"/><stop offset="0.2317" stop-color="#fe570b"/><stop offset="0.2432" stop-color="#fe1d0b"/><stop offset="0.2471" stop-color="#fc0f0b"/><stop offset="0.2587" stop-color="#da0f0b"/><stop offset="0.2703" stop-color="#d10f0b"/><stop offset="0.2780" stop-color="#da0f0b"/><stop offset="0.2896" stop-color="#fe130b"/><stop offset="0.2973" stop-color="#fe3e0b"/><stop offset="0.3089" stop-color="#fe960b"/><stop offset="0.3166" stop-color="#fede0b"/><stop offset="0.3205" stop-color="#eef51b"/><stop offset="0.3398" stop-color="#1cf5ed"/><stop offset="0.3552" stop-color="#1857f1"/><stop offset="0.3629" stop-color="#1812f1"/><stop offset="0.3707" stop-color="#180fc0"/><stop offset="0.3745" stop-color="#180fb5"/><stop offset="0.3784" stop-color="#180fb7"/><stop offset="0.3938" stop-color="#180fdf"/><stop offset="0.4054" stop-color="#180feb"/><stop offset="0.4170" stop-color="#180fe4"/><stop offset="0.4633" stop-color="#180f90"/><stop offset="0.4749" stop-color="#180f87"/><stop offset="0.5097" stop-color="#180f8b"/><stop offset="0.5714" stop-color="#180f7f"/><stop offset="0.7259" stop-color="#180f7e"/><stop offset="0.8803" stop-color="#180f7e"/><stop offset="1.0000" stop-color="#180f7e"/></linearGradient><linearGradient id="b23" gradientUnits="userSpaceOnUse" x1="638.31" y1="0" x2="929.30" y2="0"><stop offset="0.0000" stop-color="#180f86"/><stop offset="0.0463" stop-color="#180f99"/><stop offset="0.0772" stop-color="#180fb7"/><stop offset="0.1042" stop-color="#180fe5"/><stop offset="0.1120" stop-color="#1815f1"/><stop offset="0.1313" stop-color="#184ef1"/><stop offset="0.1506" stop-color="#1899f1"/><stop offset="0.1699" stop-color="#1bf5ee"/><stop offset="0.1931" stop-color="#a4f565"/><stop offset="0.2046" stop-color="#eef51b"/><stop offset="0.2085" stop-color="#feec0b"/><stop offset="0.2317" stop-color="#fe5e0b"/><stop offset="0.2432" stop-color="#fe240b"/><stop offset="0.2471" stop-color="#fe140b"/><stop offset="0.2587" stop-color="#df0f0b"/><stop offset="0.2703" stop-color="#d30f0b"/><stop offset="0.2780" stop-color="#db0f0b"/><stop offset="0.2896" stop-color="#fe110b"/><stop offset="0.2973" stop-color="#fe3b0b"/><stop offset="0.3089" stop-color="#fe8f0b"/><stop offset="0.3166" stop-color="#fed50b"/><stop offset="0.3205" stop-color="#f8f511"/><stop offset="0.3398" stop-color="#2df5dc"/><stop offset="0.3436" stop-color="#18e1f1"/><stop offset="0.3552" stop-color="#1872f1"/><stop offset="0.3629" stop-color="#1835f1"/><stop offset="0.3668" stop-color="#181ef1"/><stop offset="0.3707" stop-color="#180fee"/><stop offset="0.3745" stop-color="#180fe4"/><stop offset="0.3822" stop-color="#180fe2"/><stop offset="0.3977" stop-color="#1810f1"/><stop offset="0.4131" stop-color="#180fee"/><stop offset="0.4324" stop-color="#180fcf"/><stop offset="0.4595" stop-color="#180f9c"/><stop offset="0.4749" stop-color="#180f8e"/><stop offset="0.5830" stop-color="#180f80"/><stop offset="0.7375" stop-color="#180f7e"/><stop offset="0.8919" stop-color="#180f7e"/><stop offset="1.0000" stop-color="#180f7e"/></linearGradient><linearGradient id="b24" gradientUnits="userSpaceOnUse" x1="638.31" y1="0" x2="929.30" y2="0"><stop offset="0.0000" stop-color="#180f86"/><stop offset="0.0463" stop-color="#180f98"/><stop offset="0.0772" stop-color="#180fb5"/><stop offset="0.1042" stop-color="#180fe2"/><stop offset="0.1120" stop-color="#1812f1"/><stop offset="0.1313" stop-color="#1849f1"/><stop offset="0.1506" stop-color="#1893f1"/><stop offset="0.1699" stop-color="#18f0f1"/><stop offset="0.1776" stop-color="#3ef5cb"/><stop offset="0.2085" stop-color="#fbf50e"/><stop offset="0.2355" stop-color="#fe540b"/><stop offset="0.2471" stop-color="#fe1d0b"/><stop offset="0.2510" stop-color="#fd0f0b"/><stop offset="0.2625" stop-color="#df0f0b"/><stop offset="0.2741" stop-color="#d90f0b"/><stop offset="0.2819" stop-color="#e40f0b"/><stop offset="0.2896" stop-color="#fd0f0b"/><stop offset="0.2973" stop-color="#fe350b"/><stop offset="0.3089" stop-color="#fe850b"/><stop offset="0.3205" stop-color="#feeb0b"/><stop offset="0.3243" stop-color="#e2f527"/><stop offset="0.3436" stop-color="#21f5e8"/><stop offset="0.3475" stop-color="#18d9f1"/><stop offset="0.3591" stop-color="#187af1"/><stop offset="0.3668" stop-color="#184bf1"/><stop offset="0.3745" stop-color="#1830f1"/><stop offset="0.3861" stop-color="#1823f1"/><stop offset="0.4054" stop-color="#181ef1"/><stop offset="0.4170" stop-color="#1811f1"/><stop offset="0.4595" stop-color="#180fa3"/><stop offset="0.4788" stop-color="#180f93"/><stop offset="0.5753" stop-color="#180f80"/><stop offset="0.7297" stop-color="#180f7e"/><stop offset="0.8842" stop-color="#180f7e"/><stop offset="1.0000" stop-color="#180f7e"/></linearGradient><linearGradient id="b25" gradientUnits="userSpaceOnUse" x1="638.31" y1="0" x2="929.30" y2="0"><stop offset="0.0000" stop-color="#180f86"/><stop offset="0.0502" stop-color="#180f9a"/><stop offset="0.0811" stop-color="#180fb8"/><stop offset="0.1081" stop-color="#180fe6"/><stop offset="0.1120" stop-color="#180fef"/><stop offset="0.1313" stop-color="#1843f1"/><stop offset="0.1506" stop-color="#188af1"/><stop offset="0.1699" stop-color="#18e5f1"/><stop offset="0.1737" stop-color="#1df5ec"/><stop offset="0.1969" stop-color="#a3f566"/><stop offset="0.2085" stop-color="#ecf51e"/><stop offset="0.2124" stop-color="#feef0b"/><stop offset="0.2355" stop-color="#fe640b"/><stop offset="0.2471" stop-color="#fe2b0b"/><stop offset="0.2548" stop-color="#fc0f0b"/><stop offset="0.2664" stop-color="#e20f0b"/><stop offset="0.2780" stop-color="#e00f0b"/><stop offset="0.2857" stop-color="#ef0f0b"/><stop offset="0.2896" stop-color="#fb0f0b"/><stop offset="0.2934" stop-color="#fe1c0b"/><stop offset="0.3050" stop-color="#fe5c0b"/><stop offset="0.3166" stop-color="#feb50b"/><stop offset="0.3243" stop-color="#f9f510"/><stop offset="0.3475" stop-color="#22f5e7"/><stop offset="0.3514" stop-color="#18dff1"/><stop offset="0.3591" stop-color="#18a6f1"/><stop offset="0.3668" stop-color="#187af1"/><stop offset="0.3745" stop-color="#185cf1"/><stop offset="0.3861" stop-color="#1845f1"/><stop offset="0.4131" stop-color="#1824f1"/><stop offset="0.4247" stop-color="#180fef"/><stop offset="0.4556" stop-color="#180fb2"/><stop offset="0.4749" stop-color="#180f9c"/><stop offset="0.5598" stop-color="#180f82"/><stop offset="0.7143" stop-color="#180f7e"/><stop offset="0.8687" stop-color="#180f7e"/><stop offset="1.0000" stop-color="#180f7e"/></linearGradient><linearGradient id="b26" gradientUnits="userSpaceOnUse" x1="638.31" y1="0" x2="929.30" y2="0"><stop offset="0.0000" stop-color="#180f85"/><stop offset="0.0502" stop-color="#180f98"/><stop offset="0.0849" stop-color="#180fba"/><stop offset="0.1120" stop-color="#180fea"/><stop offset="0.1158" stop-color="#1811f1"/><stop offset="0.1351" stop-color="#1848f1"/><stop offset="0.1544" stop-color="#1890f1"/><stop offset="0.1737" stop-color="#18ebf1"/><stop offset="0.1776" stop-color="#23f5e6"/><stop offset="0.2046" stop-color="#c0f549"/><stop offset="0.2124" stop-color="#f0f519"/><stop offset="0.2162" stop-color="#feeb0b"/><stop offset="0.2394" stop-color="#fe630b"/><stop offset="0.2510" stop-color="#fe2c0b"/><stop offset="0.2587" stop-color="#fe100b"/><stop offset="0.2703" stop-color="#e60f0b"/><stop offset="0.2819" stop-color="#e80f0b"/><stop offset="0.2896" stop-color="#f80f0b"/><stop offset="0.2934" stop-color="#fe170b"/><stop offset="0.3050" stop-color="#fe500b"/><stop offset="0.3166" stop-color="#fea00b"/><stop offset="0.3243" stop-color="#fedf0b"/><stop offset="0.3282" stop-color="#f2f517"/><stop offset="0.3475" stop-color="#4cf5be"/><stop offset="0.3514" stop-color="#2df5dc"/><stop offset="0.3552" stop-color="#18eef1"/><stop offset="0.3668" stop-color="#18a8f1"/><stop offset="0.3784" stop-color="#187bf1"/><stop offset="0.3977" stop-color="#1851f1"/><stop offset="0.4286" stop-color="#1811f1"/><stop offset="0.4595" stop-color="#180fb5"/><stop offset="0.4826" stop-color="#180f9e"/><stop offset="0.5521" stop-color="#180f84"/><stop offset="0.7066" stop-color="#180f7e"/><stop offset="0.8610" stop-color="#180f7e"/><stop offset="1.0000" stop-color="#180f7e"/></linearGradient><linearGradient id="b27" gradientUnits="userSpaceOnUse" x1="638.31" y1="0" x2="929.30" y2="0"><stop offset="0.0000" stop-color="#180f85"/><stop offset="0.0502" stop-color="#180f97"/><stop offset="0.0849" stop-color="#180fb6"/><stop offset="0.1120" stop-color="#180fe4"/><stop offset="0.1197" stop-color="#1814f1"/><stop offset="0.1390" stop-color="#184bf1"/><stop offset="0.1583" stop-color="#1893f1"/><stop offset="0.1776" stop-color="#18eef1"/><stop offset="0.1815" stop-color="#26f5e4"/><stop offset="0.2085" stop-color="#c1f549"/><stop offset="0.2162" stop-color="#f0f519"/><stop offset="0.2201" stop-color="#feeb0b"/><stop offset="0.2432" stop-color="#fe650b"/><stop offset="0.2548" stop-color="#fe2f0b"/><stop offset="0.2625" stop-color="#fe150b"/><stop offset="0.2703" stop-color="#f10f0b"/><stop offset="0.2819" stop-color="#eb0f0b"/><stop offset="0.2934" stop-color="#fe120b"/><stop offset="0.3050" stop-color="#fe420b"/><stop offset="0.3166" stop-color="#fe8a0b"/><stop offset="0.3282" stop-color="#fee10b"/><stop offset="0.3320" stop-color="#f2f517"/><stop offset="0.3514" stop-color="#5af5b0"/><stop offset="0.3591" stop-color="#25f5e4"/><stop offset="0.3629" stop-color="#18ebf1"/><stop offset="0.3745" stop-color="#18b2f1"/><stop offset="0.3900" stop-color="#1880f1"/><stop offset="0.4363" stop-color="#180fee"/><stop offset="0.4595" stop-color="#180fbf"/><stop offset="0.4865" stop-color="#180fa2"/><stop offset="0.5444" stop-color="#180f87"/><stop offset="0.6641" stop-color="#180f7f"/><stop offset="0.8185" stop-color="#180f7e"/><stop offset="0.9730" stop-color="#180f7e"/><stop offset="1.0000" stop-color="#180f7e"/></linearGradient><linearGradient id="b28" gradientUnits="userSpaceOnUse" x1="638.31" y1="0" x2="929.30" y2="0"><stop offset="0.0000" stop-color="#180f84"/><stop offset="0.0541" stop-color="#180f97"/><stop offset="0.0888" stop-color="#180fb7"/><stop offset="0.1158" stop-color="#180fe5"/><stop offset="0.1236" stop-color="#1815f1"/><stop offset="0.1467" stop-color="#1859f1"/><stop offset="0.1660" stop-color="#18a5f1"/><stop offset="0.1815" stop-color="#18eef1"/><stop offset="0.1853" stop-color="#25f5e4"/><stop offset="0.2124" stop-color="#bdf54c"/><stop offset="0.2201" stop-color="#ebf51e"/><stop offset="0.2239" stop-color="#fef00b"/><stop offset="0.2471" stop-color="#fe6b0b"/><stop offset="0.2587" stop-color="#fe350b"/><stop offset="0.2703" stop-color="#fe100b"/><stop offset="0.2819" stop-color="#f10f0b"/><stop offset="0.2934" stop-color="#fc0f0b"/><stop offset="0.3012" stop-color="#fe250b"/><stop offset="0.3127" stop-color="#fe5c0b"/><stop offset="0.3243" stop-color="#fea60b"/><stop offset="0.3320" stop-color="#fede0b"/><stop offset="0.3359" stop-color="#f7f512"/><stop offset="0.3552" stop-color="#6bf59e"/><stop offset="0.3668" stop-color="#26f5e3"/><stop offset="0.3707" stop-color="#18eff1"/><stop offset="0.3861" stop-color="#18aef1"/><stop offset="0.4208" stop-color="#1844f1"/><stop offset="0.4402" stop-color="#1811f1"/><stop offset="0.4672" stop-color="#180fbe"/><stop offset="0.4981" stop-color="#180f9f"/><stop offset="0.5483" stop-color="#180f88"/><stop offset="0.6641" stop-color="#180f7f"/><stop offset="0.8185" stop-color="#180f7e"/><stop offset="0.9730" stop-color="#180f7e"/><stop offset="1.0000" stop-color="#180f7e"/></linearGradient><linearGradient id="b29" gradientUnits="userSpaceOnUse" x1="638.31" y1="0" x2="929.30" y2="0"><stop offset="0.0000" stop-color="#180f84"/><stop offset="0.0541" stop-color="#180f95"/><stop offset="0.0888" stop-color="#180fb3"/><stop offset="0.1158" stop-color="#180fdd"/><stop offset="0.1236" stop-color="#180fed"/><stop offset="0.1313" stop-color="#181ef1"/><stop offset="0.1544" stop-color="#1866f1"/><stop offset="0.1776" stop-color="#18c5f1"/><stop offset="0.1853" stop-color="#18eaf1"/><stop offset="0.1892" stop-color="#21f5e9"/><stop offset="0.2162" stop-color="#b5f554"/><stop offset="0.2278" stop-color="#faf50f"/><stop offset="0.2548" stop-color="#fe5e0b"/><stop offset="0.2664" stop-color="#fe2d0b"/><stop offset="0.2780" stop-color="#fd0f0b"/><stop offset="0.2896" stop-color="#f60f0b"/><stop offset="0.2973" stop-color="#fe120b"/><stop offset="0.3089" stop-color="#fe370b"/><stop offset="0.3205" stop-color="#fe720b"/><stop offset="0.3398" stop-color="#fef20b"/><stop offset="0.3629" stop-color="#68f5a2"/><stop offset="0.3745" stop-color="#29f5e0"/><stop offset="0.3784" stop-color="#18f3f1"/><stop offset="0.3977" stop-color="#18a5f1"/><stop offset="0.4324" stop-color="#1834f1"/><stop offset="0.4440" stop-color="#1815f1"/><stop offset="0.4517" stop-color="#180fe5"/><stop offset="0.4749" stop-color="#180fbc"/><stop offset="0.5097" stop-color="#180f9b"/><stop offset="0.5598" stop-color="#180f86"/><stop offset="0.6950" stop-color="#180f7e"/><stop offset="0.8494" stop-color="#180f7e"/><stop offset="1.0000" stop-color="#180f7e"/></linearGradient><linearGradient id="b30" gradientUnits="userSpaceOnUse" x1="638.31" y1="0" x2="929.30" y2="0"><stop offset="0.0000" stop-color="#180f83"/><stop offset="0.0579" stop-color="#180f95"/><stop offset="0.0927" stop-color="#180fb2"/><stop offset="0.1197" stop-color="#180fdc"/><stop offset="0.1313" stop-color="#1813f1"/><stop offset="0.1544" stop-color="#1856f1"/><stop offset="0.1776" stop-color="#18aff1"/><stop offset="0.1931" stop-color="#19f5f0"/><stop offset="0.2162" stop-color="#93f576"/><stop offset="0.2317" stop-color="#eff51b"/><stop offset="0.2355" stop-color="#feec0b"/><stop offset="0.2587" stop-color="#fe670b"/><stop offset="0.2703" stop-color="#fe330b"/><stop offset="0.2819" stop-color="#fe130b"/><stop offset="0.2934" stop-color="#f90f0b"/><stop offset="0.3012" stop-color="#fe140b"/><stop offset="0.3127" stop-color="#fe360b"/><stop offset="0.3243" stop-color="#fe6e0b"/><stop offset="0.3436" stop-color="#fee60b"/><stop offset="0.3475" stop-color="#f3f516"/><stop offset="0.3668" stop-color="#7bf58e"/><stop offset="0.3861" stop-color="#18f5f1"/><stop offset="0.4131" stop-color="#1887f1"/><stop offset="0.4402" stop-color="#182ef1"/><stop offset="0.4517" stop-color="#1810f1"/><stop offset="0.4788" stop-color="#180fbf"/><stop offset="0.5135" stop-color="#180f9c"/><stop offset="0.5598" stop-color="#180f88"/><stop offset="0.6757" stop-color="#180f7f"/><stop offset="0.8301" stop-color="#180f7e"/><stop offset="0.9846" stop-color="#180f7e"/><stop offset="1.0000" stop-color="#180f7e"/></linearGradient><linearGradient id="b31" gradientUnits="userSpaceOnUse" x1="638.31" y1="0" x2="929.30" y2="0"><stop offset="0.0000" stop-color="#180f83"/><stop offset="0.0579" stop-color="#180f93"/><stop offset="0.0965" stop-color="#180fb1"/><stop offset="0.1236" stop-color="#180fd9"/><stop offset="0.1351" stop-color="#1810f1"/><stop offset="0.1583" stop-color="#1852f1"/><stop offset="0.1853" stop-color="#18b8f1"/><stop offset="0.1969" stop-color="#18ebf1"/><stop offset="0.2008" stop-color="#20f5e9"/><stop offset="0.2201" stop-color="#85f585"/><stop offset="0.2394" stop-color="#f9f510"/><stop offset="0.2471" stop-color="#fec90b"/><stop offset="0.2625" stop-color="#fe6e0b"/><stop offset="0.2741" stop-color="#fe380b"/><stop offset="0.2857" stop-color="#fe160b"/><stop offset="0.2934" stop-color="#fb0f0b"/><stop offset="0.3050" stop-color="#fe130b"/><stop offset="0.3166" stop-color="#fe330b"/><stop offset="0.3282" stop-color="#fe680b"/><stop offset="0.3514" stop-color="#fef10b"/><stop offset="0.3745" stop-color="#77f592"/><stop offset="0.3900" stop-color="#27f5e2"/><stop offset="0.3938" stop-color="#18f1f1"/><stop offset="0.4208" stop-color="#1880f1"/><stop offset="0.4440" stop-color="#1832f1"/><stop offset="0.4556" stop-color="#1813f1"/><stop offset="0.4672" stop-color="#180fdc"/><stop offset="0.4942" stop-color="#180fb3"/><stop offset="0.5328" stop-color="#180f93"/><stop offset="0.5907" stop-color="#180f83"/><stop offset="0.7452" stop-color="#180f7e"/><stop offset="0.8996" stop-color="#180f7e"/><stop offset="1.0000" stop-color="#180f7e"/></linearGradient><linearGradient id="b32" gradientUnits="userSpaceOnUse" x1="638.31" y1="0" x2="929.30" y2="0"><stop offset="0.0000" stop-color="#180f82"/><stop offset="0.0579" stop-color="#180f90"/><stop offset="0.0965" stop-color="#180fac"/><stop offset="0.1236" stop-color="#180fcf"/><stop offset="0.1390" stop-color="#180fef"/><stop offset="0.1544" stop-color="#1836f1"/><stop offset="0.1815" stop-color="#1890f1"/><stop offset="0.2046" stop-color="#18eef1"/><stop offset="0.2085" stop-color="#23f5e6"/><stop offset="0.2278" stop-color="#89f580"/><stop offset="0.2432" stop-color="#eaf51f"/><stop offset="0.2471" stop-color="#feef0b"/><stop offset="0.2664" stop-color="#fe750b"/><stop offset="0.2780" stop-color="#fe3b0b"/><stop offset="0.2896" stop-color="#fe160b"/><stop offset="0.2934" stop-color="#fe0f0b"/><stop offset="0.3050" stop-color="#fa0f0b"/><stop offset="0.3127" stop-color="#fe180b"/><stop offset="0.3243" stop-color="#fe3d0b"/><stop offset="0.3398" stop-color="#fe890b"/><stop offset="0.3552" stop-color="#fee40b"/><stop offset="0.3591" stop-color="#f7f512"/><stop offset="0.3861" stop-color="#5bf5ae"/><stop offset="0.3977" stop-color="#20f5e9"/><stop offset="0.4015" stop-color="#18eaf1"/><stop offset="0.4247" stop-color="#1885f1"/><stop offset="0.4479" stop-color="#1835f1"/><stop offset="0.4633" stop-color="#180fee"/><stop offset="0.4903" stop-color="#180fbe"/><stop offset="0.5251" stop-color="#180f9b"/><stop offset="0.5753" stop-color="#180f86"/><stop offset="0.7066" stop-color="#180f7e"/><stop offset="0.8610" stop-color="#180f7e"/><stop offset="1.0000" stop-color="#180f7e"/></linearGradient><linearGradient id="b33" gradientUnits="userSpaceOnUse" x1="638.31" y1="0" x2="929.30" y2="0"><stop offset="0.0000" stop-color="#180f82"/><stop offset="0.0618" stop-color="#180f90"/><stop offset="0.1042" stop-color="#180fad"/><stop offset="0.1313" stop-color="#180fd3"/><stop offset="0.1467" stop-color="#1812f1"/><stop offset="0.1776" stop-color="#186bf1"/><stop offset="0.2046" stop-color="#18cbf1"/><stop offset="0.2124" stop-color="#18ecf1"/><stop offset="0.2162" stop-color="#21f5e8"/><stop offset="0.2317" stop-color="#76f593"/><stop offset="0.2510" stop-color="#f8f512"/><stop offset="0.2587" stop-color="#fec50b"/><stop offset="0.2741" stop-color="#fe630b"/><stop offset="0.2857" stop-color="#fe2c0b"/><stop offset="0.2934" stop-color="#fe140b"/><stop offset="0.3012" stop-color="#f70f0b"/><stop offset="0.3127" stop-color="#fb0f0b"/><stop offset="0.3205" stop-color="#fe1d0b"/><stop offset="0.3320" stop-color="#fe460b"/><stop offset="0.3475" stop-color="#fe950b"/><stop offset="0.3629" stop-color="#fef00b"/><stop offset="0.3745" stop-color="#bdf54c"/><stop offset="0.4015" stop-color="#27f5e2"/><stop offset="0.4054" stop-color="#18f0f1"/><stop offset="0.4286" stop-color="#1888f1"/><stop offset="0.4517" stop-color="#1837f1"/><stop offset="0.4672" stop-color="#180ff0"/><stop offset="0.4942" stop-color="#180fbe"/><stop offset="0.5251" stop-color="#180f9e"/><stop offset="0.5714" stop-color="#180f88"/><stop offset="0.6795" stop-color="#180f7f"/><stop offset="0.8340" stop-color="#180f7e"/><stop offset="0.9884" stop-color="#180f7e"/><stop offset="1.0000" stop-color="#180f7e"/></linearGradient><linearGradient id="b34" gradientUnits="userSpaceOnUse" x1="638.31" y1="0" x2="929.30" y2="0"><stop offset="0.0000" stop-color="#180f81"/><stop offset="0.0618" stop-color="#180f8e"/><stop offset="0.1081" stop-color="#180faa"/><stop offset="0.1313" stop-color="#180fc8"/><stop offset="0.1506" stop-color="#180fef"/><stop offset="0.1815" stop-color="#1861f1"/><stop offset="0.2085" stop-color="#18b6f1"/><stop offset="0.2201" stop-color="#18e7f1"/><stop offset="0.2239" stop-color="#1ef5ec"/><stop offset="0.2355" stop-color="#62f5a7"/><stop offset="0.2548" stop-color="#eef51b"/><stop offset="0.2587" stop-color="#fee70b"/><stop offset="0.2741" stop-color="#fe7a0b"/><stop offset="0.2857" stop-color="#fe3a0b"/><stop offset="0.2973" stop-color="#fe100b"/><stop offset="0.3089" stop-color="#f00f0b"/><stop offset="0.3205" stop-color="#fc0f0b"/><stop offset="0.3282" stop-color="#fe220b"/><stop offset="0.3398" stop-color="#fe510b"/><stop offset="0.3591" stop-color="#feba0b"/><stop offset="0.3668" stop-color="#fee80b"/><stop offset="0.3707" stop-color="#f3f516"/><stop offset="0.4015" stop-color="#40f5ca"/><stop offset="0.4093" stop-color="#18f4f1"/><stop offset="0.4324" stop-color="#1889f1"/><stop offset="0.4517" stop-color="#1843f1"/><stop offset="0.4710" stop-color="#180ff0"/><stop offset="0.4981" stop-color="#180fbe"/><stop offset="0.5290" stop-color="#180f9d"/><stop offset="0.5753" stop-color="#180f88"/><stop offset="0.6834" stop-color="#180f7f"/><stop offset="0.8378" stop-color="#180f7e"/><stop offset="0.9923" stop-color="#180f7e"/><stop offset="1.0000" stop-color="#180f7e"/></linearGradient><linearGradient id="b35" gradientUnits="userSpaceOnUse" x1="638.31" y1="0" x2="929.30" y2="0"><stop offset="0.0000" stop-color="#180f81"/><stop offset="0.0656" stop-color="#180f8d"/><stop offset="0.1158" stop-color="#180faa"/><stop offset="0.1390" stop-color="#180fca"/><stop offset="0.1583" stop-color="#1813f1"/><stop offset="0.2085" stop-color="#1890f1"/><stop offset="0.2201" stop-color="#18bbf1"/><stop offset="0.2317" stop-color="#1cf5ed"/><stop offset="0.2432" stop-color="#6cf59d"/><stop offset="0.2587" stop-color="#e8f521"/><stop offset="0.2625" stop-color="#feeb0b"/><stop offset="0.2780" stop-color="#fe770b"/><stop offset="0.2896" stop-color="#fe340b"/><stop offset="0.2973" stop-color="#fe150b"/><stop offset="0.3050" stop-color="#f00f0b"/><stop offset="0.3166" stop-color="#eb0f0b"/><stop offset="0.3282" stop-color="#fe110b"/><stop offset="0.3398" stop-color="#fe3a0b"/><stop offset="0.3552" stop-color="#fe880b"/><stop offset="0.3707" stop-color="#fee40b"/><stop offset="0.3745" stop-color="#f7f512"/><stop offset="0.4054" stop-color="#41f5c9"/><stop offset="0.4131" stop-color="#18f4f1"/><stop offset="0.4324" stop-color="#1898f1"/><stop offset="0.4517" stop-color="#184ef1"/><stop offset="0.4710" stop-color="#1816f1"/><stop offset="0.4749" stop-color="#180fef"/><stop offset="0.5019" stop-color="#180fbd"/><stop offset="0.5328" stop-color="#180f9d"/><stop offset="0.5792" stop-color="#180f87"/><stop offset="0.6911" stop-color="#180f7f"/><stop offset="0.8456" stop-color="#180f7e"/><stop offset="1.0000" stop-color="#180f7e"/></linearGradient><linearGradient id="b36" gradientUnits="userSpaceOnUse" x1="638.31" y1="0" x2="929.30" y2="0"><stop offset="0.0000" stop-color="#180f80"/><stop offset="0.0656" stop-color="#180f8b"/><stop offset="0.1197" stop-color="#180fa6"/><stop offset="0.1429" stop-color="#180fc7"/><stop offset="0.1622" stop-color="#180ff0"/><stop offset="0.2124" stop-color="#1875f1"/><stop offset="0.2239" stop-color="#18a0f1"/><stop offset="0.2355" stop-color="#18e4f1"/><stop offset="0.2394" stop-color="#23f5e6"/><stop offset="0.2548" stop-color="#a4f565"/><stop offset="0.2625" stop-color="#e8f521"/><stop offset="0.2664" stop-color="#fee90b"/><stop offset="0.2780" stop-color="#fe8b0b"/><stop offset="0.2896" stop-color="#fe3f0b"/><stop offset="0.2973" stop-color="#fe1a0b"/><stop offset="0.3012" stop-color="#fb0f0b"/><stop offset="0.3089" stop-color="#e90f0b"/><stop offset="0.3166" stop-color="#e30f0b"/><stop offset="0.3282" stop-color="#f10f0b"/><stop offset="0.3320" stop-color="#fb0f0b"/><stop offset="0.3398" stop-color="#fe270b"/><stop offset="0.3552" stop-color="#fe710b"/><stop offset="0.3745" stop-color="#fee40b"/><stop offset="0.3784" stop-color="#f7f512"/><stop offset="0.4093" stop-color="#3ef5cb"/><stop offset="0.4170" stop-color="#18f1f1"/><stop offset="0.4363" stop-color="#1895f1"/><stop offset="0.4556" stop-color="#184bf1"/><stop offset="0.4749" stop-color="#1814f1"/><stop offset="0.4865" stop-color="#180fdc"/><stop offset="0.5135" stop-color="#180fb1"/><stop offset="0.5483" stop-color="#180f94"/><stop offset="0.6062" stop-color="#180f83"/><stop offset="0.7606" stop-color="#180f7e"/><stop offset="0.9151" stop-color="#180f7e"/><stop offset="1.0000" stop-color="#180f7e"/></linearGradient><linearGradient id="b37" gradientUnits="userSpaceOnUse" x1="638.31" y1="0" x2="929.30" y2="0"><stop offset="0.0000" stop-color="#180f80"/><stop offset="0.0656" stop-color="#180f89"/><stop offset="0.1197" stop-color="#180f9e"/><stop offset="0.1390" stop-color="#180fb6"/><stop offset="0.1660" stop-color="#180fed"/><stop offset="0.1776" stop-color="#1821f1"/><stop offset="0.2124" stop-color="#184cf1"/><stop offset="0.2201" stop-color="#1862f1"/><stop offset="0.2278" stop-color="#1885f1"/><stop offset="0.2355" stop-color="#18b7f1"/><stop offset="0.2432" stop-color="#18f4f1"/><stop offset="0.2664" stop-color="#eff51a"/><stop offset="0.2703" stop-color="#fee00b"/><stop offset="0.2819" stop-color="#fe7f0b"/><stop offset="0.2934" stop-color="#fe330b"/><stop offset="0.3012" stop-color="#fe100b"/><stop offset="0.3089" stop-color="#e70f0b"/><stop offset="0.3166" stop-color="#dd0f0b"/><stop offset="0.3282" stop-color="#e50f0b"/><stop offset="0.3359" stop-color="#f80f0b"/><stop offset="0.3398" stop-color="#fe170b"/><stop offset="0.3514" stop-color="#fe4a0b"/><stop offset="0.3707" stop-color="#feb80b"/><stop offset="0.3784" stop-color="#fee80b"/><stop offset="0.3822" stop-color="#f2f517"/><stop offset="0.4131" stop-color="#37f5d2"/><stop offset="0.4170" stop-color="#22f5e7"/><stop offset="0.4208" stop-color="#18eaf1"/><stop offset="0.4402" stop-color="#188ff1"/><stop offset="0.4595" stop-color="#1846f1"/><stop offset="0.4788" stop-color="#1810f1"/><stop offset="0.5058" stop-color="#180fbe"/><stop offset="0.5367" stop-color="#180f9d"/><stop offset="0.5830" stop-color="#180f88"/><stop offset="0.6911" stop-color="#180f7f"/><stop offset="0.8456" stop-color="#180f7e"/><stop offset="1.0000" stop-color="#180f7e"/></linearGradient><linearGradient id="b38" gradientUnits="userSpaceOnUse" x1="638.31" y1="0" x2="929.30" y2="0"><stop offset="0.0000" stop-color="#180f80"/><stop offset="0.0656" stop-color="#180f88"/><stop offset="0.1236" stop-color="#180f99"/><stop offset="0.1429" stop-color="#180fb4"/><stop offset="0.1737" stop-color="#180ff0"/><stop offset="0.1892" stop-color="#181ff1"/><stop offset="0.2124" stop-color="#1824f1"/><stop offset="0.2201" stop-color="#1834f1"/><stop offset="0.2278" stop-color="#1857f1"/><stop offset="0.2355" stop-color="#188df1"/><stop offset="0.2471" stop-color="#18f3f1"/><stop offset="0.2703" stop-color="#fef40b"/><stop offset="0.2819" stop-color="#fe8d0b"/><stop offset="0.2934" stop-color="#fe3b0b"/><stop offset="0.3012" stop-color="#fe130b"/><stop offset="0.3127" stop-color="#de0f0b"/><stop offset="0.3205" stop-color="#d70f0b"/><stop offset="0.3320" stop-color="#e40f0b"/><stop offset="0.3398" stop-color="#f90f0b"/><stop offset="0.3436" stop-color="#fe190b"/><stop offset="0.3591" stop-color="#fe640b"/><stop offset="0.3822" stop-color="#fef10b"/><stop offset="0.3977" stop-color="#a0f569"/><stop offset="0.4208" stop-color="#19f5f1"/><stop offset="0.4402" stop-color="#1897f1"/><stop offset="0.4595" stop-color="#184cf1"/><stop offset="0.4788" stop-color="#1814f1"/><stop offset="0.4865" stop-color="#180fe4"/><stop offset="0.5135" stop-color="#180fb6"/><stop offset="0.5483" stop-color="#180f96"/><stop offset="0.6023" stop-color="#180f84"/><stop offset="0.7568" stop-color="#180f7e"/><stop offset="0.9112" stop-color="#180f7e"/><stop offset="1.0000" stop-color="#180f7e"/></linearGradient><linearGradient id="b39" gradientUnits="userSpaceOnUse" x1="638.31" y1="0" x2="929.30" y2="0"><stop offset="0.0000" stop-color="#180f80"/><stop offset="0.0618" stop-color="#180f86"/><stop offset="0.1236" stop-color="#180f91"/><stop offset="0.1429" stop-color="#180fae"/><stop offset="0.1737" stop-color="#180fe8"/><stop offset="0.1853" stop-color="#1810f1"/><stop offset="0.1969" stop-color="#180fee"/><stop offset="0.2124" stop-color="#180fdd"/><stop offset="0.2162" stop-color="#180fdf"/><stop offset="0.2201" stop-color="#180fe7"/><stop offset="0.2239" stop-color="#1816f1"/><stop offset="0.2317" stop-color="#1848f1"/><stop offset="0.2432" stop-color="#18b0f1"/><stop offset="0.2471" stop-color="#18d7f1"/><stop offset="0.2510" stop-color="#23f5e7"/><stop offset="0.2703" stop-color="#eff51b"/><stop offset="0.2741" stop-color="#fede0b"/><stop offset="0.2857" stop-color="#fe770b"/><stop offset="0.2973" stop-color="#fe290b"/><stop offset="0.3012" stop-color="#fe150b"/><stop offset="0.3089" stop-color="#e60f0b"/><stop offset="0.3166" stop-color="#d60f0b"/><stop offset="0.3243" stop-color="#d30f0b"/><stop offset="0.3359" stop-color="#e50f0b"/><stop offset="0.3436" stop-color="#fe100b"/><stop offset="0.3552" stop-color="#fe440b"/><stop offset="0.3745" stop-color="#feb40b"/><stop offset="0.3822" stop-color="#fee60b"/><stop offset="0.3861" stop-color="#f4f515"/><stop offset="0.4131" stop-color="#4cf5bd"/><stop offset="0.4208" stop-color="#20f5e9"/><stop offset="0.4247" stop-color="#18e8f1"/><stop offset="0.4440" stop-color="#188cf1"/><stop offset="0.4633" stop-color="#1844f1"/><stop offset="0.4826" stop-color="#180ff0"/><stop offset="0.5058" stop-color="#180fc3"/><stop offset="0.5367" stop-color="#180f9f"/><stop offset="0.5792" stop-color="#180f89"/><stop offset="0.6718" stop-color="#180f7f"/><stop offset="0.8263" stop-color="#180f7e"/><stop offset="0.9807" stop-color="#180f7e"/><stop offset="1.0000" stop-color="#180f7e"/></linearGradient><clipPath id="hc"><rect x="415.3" y="288.8" width="512.3" height="288.49999999999994"/></clipPath></defs><rect x="415.3" y="288.8" width="512.3" height="288.49999999999994" fill="#180f7e"/><g clip-path="url(#hc)"><rect x="415.3" y="288" width="222.81" height="1.6" fill="url(#a15)"/><rect x="636.61" y="288" width="290.99" height="1.6" fill="url(#b39)"/><rect x="415.3" y="289" width="222.81" height="1.6" fill="url(#a14)"/><rect x="636.61" y="289" width="290.99" height="1.6" fill="url(#b38)"/><rect x="415.3" y="290" width="222.81" height="1.6" fill="url(#a12)"/><rect x="636.61" y="290" width="290.99" height="1.6" fill="url(#b36)"/><rect x="415.3" y="291" width="222.81" height="1.6" fill="url(#a11)"/><rect x="636.61" y="291" width="290.99" height="1.6" fill="url(#b35)"/><rect x="415.3" y="292" width="222.81" height="1.6" fill="url(#a10)"/><rect x="636.61" y="292" width="290.99" height="1.6" fill="url(#b34)"/><rect x="415.3" y="293" width="222.81" height="1.6" fill="url(#a8)"/><rect x="636.61" y="293" width="290.99" height="1.6" fill="url(#b32)"/><rect x="415.3" y="294" width="222.81" height="1.6" fill="url(#a7)"/><rect x="636.61" y="294" width="290.99" height="1.6" fill="url(#b31)"/><rect x="415.3" y="295" width="222.81" height="1.6" fill="url(#a5)"/><rect x="636.61" y="295" width="290.99" height="1.6" fill="url(#b29)"/><rect x="415.3" y="296" width="222.81" height="1.6" fill="url(#a4)"/><rect x="636.61" y="296" width="290.99" height="1.6" fill="url(#b28)"/><rect x="415.3" y="297" width="222.81" height="1.6" fill="url(#a3)"/><rect x="636.61" y="297" width="290.99" height="1.6" fill="url(#b27)"/><rect x="415.3" y="298" width="222.81" height="1.6" fill="url(#a1)"/><rect x="636.61" y="298" width="290.99" height="1.6" fill="url(#b25)"/><rect x="415.3" y="299" width="222.81" height="1.6" fill="url(#a0)"/><rect x="636.61" y="299" width="290.99" height="1.6" fill="url(#b24)"/><rect x="415.3" y="300" width="222.81" height="1.6" fill="url(#a14)"/><rect x="636.61" y="300" width="290.99" height="1.6" fill="url(#b22)"/><rect x="415.3" y="301" width="222.81" height="1.6" fill="url(#a13)"/><rect x="636.61" y="301" width="290.99" height="1.6" fill="url(#b21)"/><rect x="415.3" y="302" width="222.81" height="1.6" fill="url(#a12)"/><rect x="636.61" y="302" width="290.99" height="1.6" fill="url(#b20)"/><rect x="415.3" y="303" width="222.81" height="1.6" fill="url(#a10)"/><rect x="636.61" y="303" width="290.99" height="1.6" fill="url(#b18)"/><rect x="415.3" y="304" width="222.81" height="1.6" fill="url(#a9)"/><rect x="636.61" y="304" width="290.99" height="1.6" fill="url(#b17)"/><rect x="415.3" y="305" width="222.81" height="1.6" fill="url(#a8)"/><rect x="636.61" y="305" width="290.99" height="1.6" fill="url(#b16)"/><rect x="415.3" y="306" width="222.81" height="1.6" fill="url(#a6)"/><rect x="636.61" y="306" width="290.99" height="1.6" fill="url(#b14)"/><rect x="415.3" y="307" width="222.81" height="1.6" fill="url(#a5)"/><rect x="636.61" y="307" width="290.99" height="1.6" fill="url(#b13)"/><rect x="415.3" y="308" width="222.81" height="1.6" fill="url(#a3)"/><rect x="636.61" y="308" width="290.99" height="1.6" fill="url(#b11)"/><rect x="415.3" y="309" width="222.81" height="1.6" fill="url(#a2)"/><rect x="636.61" y="309" width="290.99" height="1.6" fill="url(#b10)"/><rect x="415.3" y="310" width="222.81" height="1.6" fill="url(#a1)"/><rect x="636.61" y="310" width="290.99" height="1.6" fill="url(#b9)"/><rect x="415.3" y="311" width="222.81" height="1.6" fill="url(#a15)"/><rect x="636.61" y="311" width="290.99" height="1.6" fill="url(#b7)"/><rect x="415.3" y="312" width="222.81" height="1.6" fill="url(#a14)"/><rect x="636.61" y="312" width="290.99" height="1.6" fill="url(#b6)"/><rect x="415.3" y="313" width="222.81" height="1.6" fill="url(#a12)"/><rect x="636.61" y="313" width="290.99" height="1.6" fill="url(#b4)"/><rect x="415.3" y="314" width="222.81" height="1.6" fill="url(#a11)"/><rect x="636.61" y="314" width="290.99" height="1.6" fill="url(#b3)"/><rect x="415.3" y="315" width="222.81" height="1.6" fill="url(#a10)"/><rect x="636.61" y="315" width="290.99" height="1.6" fill="url(#b2)"/><rect x="415.3" y="316" width="222.81" height="1.6" fill="url(#a8)"/><rect x="636.61" y="316" width="290.99" height="1.6" fill="url(#b0)"/><rect x="415.3" y="317" width="222.81" height="1.6" fill="url(#a7)"/><rect x="636.61" y="317" width="290.99" height="1.6" fill="url(#b39)"/><rect x="415.3" y="318" width="222.81" height="1.6" fill="url(#a6)"/><rect x="636.61" y="318" width="290.99" height="1.6" fill="url(#b38)"/><rect x="415.3" y="319" width="222.81" height="1.6" fill="url(#a4)"/><rect x="636.61" y="319" width="290.99" height="1.6" fill="url(#b36)"/><rect x="415.3" y="320" width="222.81" height="1.6" fill="url(#a3)"/><rect x="636.61" y="320" width="290.99" height="1.6" fill="url(#b35)"/><rect x="415.3" y="321" width="222.81" height="1.6" fill="url(#a1)"/><rect x="636.61" y="321" width="290.99" height="1.6" fill="url(#b33)"/><rect x="415.3" y="322" width="222.81" height="1.6" fill="url(#a0)"/><rect x="636.61" y="322" width="290.99" height="1.6" fill="url(#b32)"/><rect x="415.3" y="323" width="222.81" height="1.6" fill="url(#a15)"/><rect x="636.61" y="323" width="290.99" height="1.6" fill="url(#b31)"/><rect x="415.3" y="324" width="222.81" height="1.6" fill="url(#a13)"/><rect x="636.61" y="324" width="290.99" height="1.6" fill="url(#b29)"/><rect x="415.3" y="325" width="222.81" height="1.6" fill="url(#a12)"/><rect x="636.61" y="325" width="290.99" height="1.6" fill="url(#b28)"/><rect x="415.3" y="326" width="222.81" height="1.6" fill="url(#a11)"/><rect x="636.61" y="326" width="290.99" height="1.6" fill="url(#b27)"/><rect x="415.3" y="327" width="222.81" height="1.6" fill="url(#a9)"/><rect x="636.61" y="327" width="290.99" height="1.6" fill="url(#b25)"/><rect x="415.3" y="328" width="222.81" height="1.6" fill="url(#a8)"/><rect x="636.61" y="328" width="290.99" height="1.6" fill="url(#b24)"/><rect x="415.3" y="329" width="222.81" height="1.6" fill="url(#a6)"/><rect x="636.61" y="329" width="290.99" height="1.6" fill="url(#b22)"/><rect x="415.3" y="330" width="222.81" height="1.6" fill="url(#a5)"/><rect x="636.61" y="330" width="290.99" height="1.6" fill="url(#b21)"/><rect x="415.3" y="331" width="222.81" height="1.6" fill="url(#a4)"/><rect x="636.61" y="331" width="290.99" height="1.6" fill="url(#b20)"/><rect x="415.3" y="332" width="222.81" height="1.6" fill="url(#a2)"/><rect x="636.61" y="332" width="290.99" height="1.6" fill="url(#b18)"/><rect x="415.3" y="333" width="222.81" height="1.6" fill="url(#a1)"/><rect x="636.61" y="333" width="290.99" height="1.6" fill="url(#b17)"/><rect x="415.3" y="334" width="222.81" height="1.6" fill="url(#a15)"/><rect x="636.61" y="334" width="290.99" height="1.6" fill="url(#b15)"/><rect x="415.3" y="335" width="222.81" height="1.6" fill="url(#a14)"/><rect x="636.61" y="335" width="290.99" height="1.6" fill="url(#b14)"/><rect x="415.3" y="336" width="222.81" height="1.6" fill="url(#a13)"/><rect x="636.61" y="336" width="290.99" height="1.6" fill="url(#b13)"/><rect x="415.3" y="337" width="222.81" height="1.6" fill="url(#a11)"/><rect x="636.61" y="337" width="290.99" height="1.6" fill="url(#b11)"/><rect x="415.3" y="338" width="222.81" height="1.6" fill="url(#a10)"/><rect x="636.61" y="338" width="290.99" height="1.6" fill="url(#b10)"/><rect x="415.3" y="339" width="222.81" height="1.6" fill="url(#a9)"/><rect x="636.61" y="339" width="290.99" height="1.6" fill="url(#b9)"/><rect x="415.3" y="340" width="222.81" height="1.6" fill="url(#a7)"/><rect x="636.61" y="340" width="290.99" height="1.6" fill="url(#b7)"/><rect x="415.3" y="341" width="222.81" height="1.6" fill="url(#a6)"/><rect x="636.61" y="341" width="290.99" height="1.6" fill="url(#b6)"/><rect x="415.3" y="342" width="222.81" height="1.6" fill="url(#a4)"/><rect x="636.61" y="342" width="290.99" height="1.6" fill="url(#b4)"/><rect x="415.3" y="343" width="222.81" height="1.6" fill="url(#a3)"/><rect x="636.61" y="343" width="290.99" height="1.6" fill="url(#b3)"/><rect x="415.3" y="344" width="222.81" height="1.6" fill="url(#a2)"/><rect x="636.61" y="344" width="290.99" height="1.6" fill="url(#b2)"/><rect x="415.3" y="345" width="222.81" height="1.6" fill="url(#a0)"/><rect x="636.61" y="345" width="290.99" height="1.6" fill="url(#b0)"/><rect x="415.3" y="346" width="222.81" height="1.6" fill="url(#a15)"/><rect x="636.61" y="346" width="290.99" height="1.6" fill="url(#b39)"/><rect x="415.3" y="347" width="222.81" height="1.6" fill="url(#a14)"/><rect x="636.61" y="347" width="290.99" height="1.6" fill="url(#b38)"/><rect x="415.3" y="348" width="222.81" height="1.6" fill="url(#a12)"/><rect x="636.61" y="348" width="290.99" height="1.6" fill="url(#b36)"/><rect x="415.3" y="349" width="222.81" height="1.6" fill="url(#a11)"/><rect x="636.61" y="349" width="290.99" height="1.6" fill="url(#b35)"/><rect x="415.3" y="350" width="222.81" height="1.6" fill="url(#a9)"/><rect x="636.61" y="350" width="290.99" height="1.6" fill="url(#b33)"/><rect x="415.3" y="351" width="222.81" height="1.6" fill="url(#a8)"/><rect x="636.61" y="351" width="290.99" height="1.6" fill="url(#b32)"/><rect x="415.3" y="352" width="222.81" height="1.6" fill="url(#a7)"/><rect x="636.61" y="352" width="290.99" height="1.6" fill="url(#b31)"/><rect x="415.3" y="353" width="222.81" height="1.6" fill="url(#a5)"/><rect x="636.61" y="353" width="290.99" height="1.6" fill="url(#b29)"/><rect x="415.3" y="354" width="222.81" height="1.6" fill="url(#a4)"/><rect x="636.61" y="354" width="290.99" height="1.6" fill="url(#b28)"/><rect x="415.3" y="355" width="222.81" height="1.6" fill="url(#a2)"/><rect x="636.61" y="355" width="290.99" height="1.6" fill="url(#b26)"/><rect x="415.3" y="356" width="222.81" height="1.6" fill="url(#a1)"/><rect x="636.61" y="356" width="290.99" height="1.6" fill="url(#b25)"/><rect x="415.3" y="357" width="222.81" height="1.6" fill="url(#a0)"/><rect x="636.61" y="357" width="290.99" height="1.6" fill="url(#b24)"/><rect x="415.3" y="358" width="222.81" height="1.6" fill="url(#a14)"/><rect x="636.61" y="358" width="290.99" height="1.6" fill="url(#b22)"/><rect x="415.3" y="359" width="222.81" height="1.6" fill="url(#a13)"/><rect x="636.61" y="359" width="290.99" height="1.6" fill="url(#b21)"/><rect x="415.3" y="360" width="222.81" height="1.6" fill="url(#a12)"/><rect x="636.61" y="360" width="290.99" height="1.6" fill="url(#b20)"/><rect x="415.3" y="361" width="222.81" height="1.6" fill="url(#a10)"/><rect x="636.61" y="361" width="290.99" height="1.6" fill="url(#b18)"/><rect x="415.3" y="362" width="222.81" height="1.6" fill="url(#a9)"/><rect x="636.61" y="362" width="290.99" height="1.6" fill="url(#b17)"/><rect x="415.3" y="363" width="222.81" height="1.6" fill="url(#a7)"/><rect x="636.61" y="363" width="290.99" height="1.6" fill="url(#b15)"/><rect x="415.3" y="364" width="222.81" height="1.6" fill="url(#a6)"/><rect x="636.61" y="364" width="290.99" height="1.6" fill="url(#b14)"/><rect x="415.3" y="365" width="222.81" height="1.6" fill="url(#a5)"/><rect x="636.61" y="365" width="290.99" height="1.6" fill="url(#b13)"/><rect x="415.3" y="366" width="222.81" height="1.6" fill="url(#a3)"/><rect x="636.61" y="366" width="290.99" height="1.6" fill="url(#b11)"/><rect x="415.3" y="367" width="222.81" height="1.6" fill="url(#a2)"/><rect x="636.61" y="367" width="290.99" height="1.6" fill="url(#b10)"/><rect x="415.3" y="368" width="222.81" height="1.6" fill="url(#a0)"/><rect x="636.61" y="368" width="290.99" height="1.6" fill="url(#b8)"/><rect x="415.3" y="369" width="222.81" height="1.6" fill="url(#a15)"/><rect x="636.61" y="369" width="290.99" height="1.6" fill="url(#b7)"/><rect x="415.3" y="370" width="222.81" height="1.6" fill="url(#a14)"/><rect x="636.61" y="370" width="290.99" height="1.6" fill="url(#b6)"/><rect x="415.3" y="371" width="222.81" height="1.6" fill="url(#a12)"/><rect x="636.61" y="371" width="290.99" height="1.6" fill="url(#b4)"/><rect x="415.3" y="372" width="222.81" height="1.6" fill="url(#a11)"/><rect x="636.61" y="372" width="290.99" height="1.6" fill="url(#b3)"/><rect x="415.3" y="373" width="222.81" height="1.6" fill="url(#a10)"/><rect x="636.61" y="373" width="290.99" height="1.6" fill="url(#b2)"/><rect x="415.3" y="374" width="222.81" height="1.6" fill="url(#a8)"/><rect x="636.61" y="374" width="290.99" height="1.6" fill="url(#b0)"/><rect x="415.3" y="375" width="222.81" height="1.6" fill="url(#a7)"/><rect x="636.61" y="375" width="290.99" height="1.6" fill="url(#b39)"/><rect x="415.3" y="376" width="222.81" height="1.6" fill="url(#a5)"/><rect x="636.61" y="376" width="290.99" height="1.6" fill="url(#b37)"/><rect x="415.3" y="377" width="222.81" height="1.6" fill="url(#a4)"/><rect x="636.61" y="377" width="290.99" height="1.6" fill="url(#b36)"/><rect x="415.3" y="378" width="222.81" height="1.6" fill="url(#a3)"/><rect x="636.61" y="378" width="290.99" height="1.6" fill="url(#b35)"/><rect x="415.3" y="379" width="222.81" height="1.6" fill="url(#a1)"/><rect x="636.61" y="379" width="290.99" height="1.6" fill="url(#b33)"/><rect x="415.3" y="380" width="222.81" height="1.6" fill="url(#a0)"/><rect x="636.61" y="380" width="290.99" height="1.6" fill="url(#b32)"/><rect x="415.3" y="381" width="222.81" height="1.6" fill="url(#a15)"/><rect x="636.61" y="381" width="290.99" height="1.6" fill="url(#b31)"/><rect x="415.3" y="382" width="222.81" height="1.6" fill="url(#a13)"/><rect x="636.61" y="382" width="290.99" height="1.6" fill="url(#b29)"/><rect x="415.3" y="383" width="222.81" height="1.6" fill="url(#a12)"/><rect x="636.61" y="383" width="290.99" height="1.6" fill="url(#b28)"/><rect x="415.3" y="384" width="222.81" height="1.6" fill="url(#a10)"/><rect x="636.61" y="384" width="290.99" height="1.6" fill="url(#b26)"/><rect x="415.3" y="385" width="222.81" height="1.6" fill="url(#a9)"/><rect x="636.61" y="385" width="290.99" height="1.6" fill="url(#b25)"/><rect x="415.3" y="386" width="222.81" height="1.6" fill="url(#a8)"/><rect x="636.61" y="386" width="290.99" height="1.6" fill="url(#b24)"/><rect x="415.3" y="387" width="222.81" height="1.6" fill="url(#a6)"/><rect x="636.61" y="387" width="290.99" height="1.6" fill="url(#b22)"/><rect x="415.3" y="388" width="222.81" height="1.6" fill="url(#a5)"/><rect x="636.61" y="388" width="290.99" height="1.6" fill="url(#b21)"/><rect x="415.3" y="389" width="222.81" height="1.6" fill="url(#a3)"/><rect x="636.61" y="389" width="290.99" height="1.6" fill="url(#b19)"/><rect x="415.3" y="390" width="222.81" height="1.6" fill="url(#a2)"/><rect x="636.61" y="390" width="290.99" height="1.6" fill="url(#b18)"/><rect x="415.3" y="391" width="222.81" height="1.6" fill="url(#a1)"/><rect x="636.61" y="391" width="290.99" height="1.6" fill="url(#b17)"/><rect x="415.3" y="392" width="222.81" height="1.6" fill="url(#a15)"/><rect x="636.61" y="392" width="290.99" height="1.6" fill="url(#b15)"/><rect x="415.3" y="393" width="222.81" height="1.6" fill="url(#a14)"/><rect x="636.61" y="393" width="290.99" height="1.6" fill="url(#b14)"/><rect x="415.3" y="394" width="222.81" height="1.6" fill="url(#a13)"/><rect x="636.61" y="394" width="290.99" height="1.6" fill="url(#b13)"/><rect x="415.3" y="395" width="222.81" height="1.6" fill="url(#a11)"/><rect x="636.61" y="395" width="290.99" height="1.6" fill="url(#b11)"/><rect x="415.3" y="396" width="222.81" height="1.6" fill="url(#a10)"/><rect x="636.61" y="396" width="290.99" height="1.6" fill="url(#b10)"/><rect x="415.3" y="397" width="222.81" height="1.6" fill="url(#a8)"/><rect x="636.61" y="397" width="290.99" height="1.6" fill="url(#b8)"/><rect x="415.3" y="398" width="222.81" height="1.6" fill="url(#a7)"/><rect x="636.61" y="398" width="290.99" height="1.6" fill="url(#b7)"/><rect x="415.3" y="399" width="222.81" height="1.6" fill="url(#a6)"/><rect x="636.61" y="399" width="290.99" height="1.6" fill="url(#b6)"/><rect x="415.3" y="400" width="222.81" height="1.6" fill="url(#a4)"/><rect x="636.61" y="400" width="290.99" height="1.6" fill="url(#b4)"/><rect x="415.3" y="401" width="222.81" height="1.6" fill="url(#a3)"/><rect x="636.61" y="401" width="290.99" height="1.6" fill="url(#b3)"/><rect x="415.3" y="402" width="222.81" height="1.6" fill="url(#a2)"/><rect x="636.61" y="402" width="290.99" height="1.6" fill="url(#b2)"/><rect x="415.3" y="403" width="222.81" height="1.6" fill="url(#a0)"/><rect x="636.61" y="403" width="290.99" height="1.6" fill="url(#b0)"/><rect x="415.3" y="404" width="222.81" height="1.6" fill="url(#a15)"/><rect x="636.61" y="404" width="290.99" height="1.6" fill="url(#b39)"/><rect x="415.3" y="405" width="222.81" height="1.6" fill="url(#a13)"/><rect x="636.61" y="405" width="290.99" height="1.6" fill="url(#b37)"/><rect x="415.3" y="406" width="222.81" height="1.6" fill="url(#a12)"/><rect x="636.61" y="406" width="290.99" height="1.6" fill="url(#b36)"/><rect x="415.3" y="407" width="222.81" height="1.6" fill="url(#a11)"/><rect x="636.61" y="407" width="290.99" height="1.6" fill="url(#b35)"/><rect x="415.3" y="408" width="222.81" height="1.6" fill="url(#a9)"/><rect x="636.61" y="408" width="290.99" height="1.6" fill="url(#b33)"/><rect x="415.3" y="409" width="222.81" height="1.6" fill="url(#a8)"/><rect x="636.61" y="409" width="290.99" height="1.6" fill="url(#b32)"/><rect x="415.3" y="410" width="222.81" height="1.6" fill="url(#a6)"/><rect x="636.61" y="410" width="290.99" height="1.6" fill="url(#b30)"/><rect x="415.3" y="411" width="222.81" height="1.6" fill="url(#a5)"/><rect x="636.61" y="411" width="290.99" height="1.6" fill="url(#b29)"/><rect x="415.3" y="412" width="222.81" height="1.6" fill="url(#a4)"/><rect x="636.61" y="412" width="290.99" height="1.6" fill="url(#b28)"/><rect x="415.3" y="413" width="222.81" height="1.6" fill="url(#a2)"/><rect x="636.61" y="413" width="290.99" height="1.6" fill="url(#b26)"/><rect x="415.3" y="414" width="222.81" height="1.6" fill="url(#a1)"/><rect x="636.61" y="414" width="290.99" height="1.6" fill="url(#b25)"/><rect x="415.3" y="415" width="222.81" height="1.6" fill="url(#a0)"/><rect x="636.61" y="415" width="290.99" height="1.6" fill="url(#b24)"/><rect x="415.3" y="416" width="222.81" height="1.6" fill="url(#a14)"/><rect x="636.61" y="416" width="290.99" height="1.6" fill="url(#b22)"/><rect x="415.3" y="417" width="222.81" height="1.6" fill="url(#a13)"/><rect x="636.61" y="417" width="290.99" height="1.6" fill="url(#b21)"/><rect x="415.3" y="418" width="222.81" height="1.6" fill="url(#a11)"/><rect x="636.61" y="418" width="290.99" height="1.6" fill="url(#b19)"/><rect x="415.3" y="419" width="222.81" height="1.6" fill="url(#a10)"/><rect x="636.61" y="419" width="290.99" height="1.6" fill="url(#b18)"/><rect x="415.3" y="420" width="222.81" height="1.6" fill="url(#a9)"/><rect x="636.61" y="420" width="290.99" height="1.6" fill="url(#b17)"/><rect x="415.3" y="421" width="222.81" height="1.6" fill="url(#a7)"/><rect x="636.61" y="421" width="290.99" height="1.6" fill="url(#b15)"/><rect x="415.3" y="422" width="222.81" height="1.6" fill="url(#a6)"/><rect x="636.61" y="422" width="290.99" height="1.6" fill="url(#b14)"/><rect x="415.3" y="423" width="222.81" height="1.6" fill="url(#a5)"/><rect x="636.61" y="423" width="290.99" height="1.6" fill="url(#b13)"/><rect x="415.3" y="424" width="222.81" height="1.6" fill="url(#a3)"/><rect x="636.61" y="424" width="290.99" height="1.6" fill="url(#b11)"/><rect x="415.3" y="425" width="222.81" height="1.6" fill="url(#a2)"/><rect x="636.61" y="425" width="290.99" height="1.6" fill="url(#b10)"/><rect x="415.3" y="426" width="222.81" height="1.6" fill="url(#a0)"/><rect x="636.61" y="426" width="290.99" height="1.6" fill="url(#b8)"/><rect x="415.3" y="427" width="222.81" height="1.6" fill="url(#a15)"/><rect x="636.61" y="427" width="290.99" height="1.6" fill="url(#b7)"/><rect x="415.3" y="428" width="222.81" height="1.6" fill="url(#a14)"/><rect x="636.61" y="428" width="290.99" height="1.6" fill="url(#b6)"/><rect x="415.3" y="429" width="222.81" height="1.6" fill="url(#a12)"/><rect x="636.61" y="429" width="290.99" height="1.6" fill="url(#b4)"/><rect x="415.3" y="430" width="222.81" height="1.6" fill="url(#a11)"/><rect x="636.61" y="430" width="290.99" height="1.6" fill="url(#b3)"/><rect x="415.3" y="431" width="222.81" height="1.6" fill="url(#a9)"/><rect x="636.61" y="431" width="290.99" height="1.6" fill="url(#b1)"/><rect x="415.3" y="432" width="222.81" height="1.6" fill="url(#a8)"/><rect x="636.61" y="432" width="290.99" height="1.6" fill="url(#b0)"/><rect x="415.3" y="433" width="222.81" height="1.6" fill="url(#a7)"/><rect x="636.61" y="433" width="290.99" height="1.6" fill="url(#b39)"/><rect x="415.3" y="434" width="222.81" height="1.6" fill="url(#a5)"/><rect x="636.61" y="434" width="290.99" height="1.6" fill="url(#b37)"/><rect x="415.3" y="435" width="222.81" height="1.6" fill="url(#a4)"/><rect x="636.61" y="435" width="290.99" height="1.6" fill="url(#b36)"/><rect x="415.3" y="436" width="222.81" height="1.6" fill="url(#a3)"/><rect x="636.61" y="436" width="290.99" height="1.6" fill="url(#b35)"/><rect x="415.3" y="437" width="222.81" height="1.6" fill="url(#a1)"/><rect x="636.61" y="437" width="290.99" height="1.6" fill="url(#b33)"/><rect x="415.3" y="438" width="222.81" height="1.6" fill="url(#a0)"/><rect x="636.61" y="438" width="290.99" height="1.6" fill="url(#b32)"/><rect x="415.3" y="439" width="222.81" height="1.6" fill="url(#a14)"/><rect x="636.61" y="439" width="290.99" height="1.6" fill="url(#b30)"/><rect x="415.3" y="440" width="222.81" height="1.6" fill="url(#a13)"/><rect x="636.61" y="440" width="290.99" height="1.6" fill="url(#b29)"/><rect x="415.3" y="441" width="222.81" height="1.6" fill="url(#a12)"/><rect x="636.61" y="441" width="290.99" height="1.6" fill="url(#b28)"/><rect x="415.3" y="442" width="222.81" height="1.6" fill="url(#a10)"/><rect x="636.61" y="442" width="290.99" height="1.6" fill="url(#b26)"/><rect x="415.3" y="443" width="222.81" height="1.6" fill="url(#a9)"/><rect x="636.61" y="443" width="290.99" height="1.6" fill="url(#b25)"/><rect x="415.3" y="444" width="222.81" height="1.6" fill="url(#a7)"/><rect x="636.61" y="444" width="290.99" height="1.6" fill="url(#b23)"/><rect x="415.3" y="445" width="222.81" height="1.6" fill="url(#a6)"/><rect x="636.61" y="445" width="290.99" height="1.6" fill="url(#b22)"/><rect x="415.3" y="446" width="222.81" height="1.6" fill="url(#a5)"/><rect x="636.61" y="446" width="290.99" height="1.6" fill="url(#b21)"/><rect x="415.3" y="447" width="222.81" height="1.6" fill="url(#a3)"/><rect x="636.61" y="447" width="290.99" height="1.6" fill="url(#b19)"/><rect x="415.3" y="448" width="222.81" height="1.6" fill="url(#a2)"/><rect x="636.61" y="448" width="290.99" height="1.6" fill="url(#b18)"/><rect x="415.3" y="449" width="222.81" height="1.6" fill="url(#a1)"/><rect x="636.61" y="449" width="290.99" height="1.6" fill="url(#b17)"/><rect x="415.3" y="450" width="222.81" height="1.6" fill="url(#a15)"/><rect x="636.61" y="450" width="290.99" height="1.6" fill="url(#b15)"/><rect x="415.3" y="451" width="222.81" height="1.6" fill="url(#a14)"/><rect x="636.61" y="451" width="290.99" height="1.6" fill="url(#b14)"/><rect x="415.3" y="452" width="222.81" height="1.6" fill="url(#a12)"/><rect x="636.61" y="452" width="290.99" height="1.6" fill="url(#b12)"/><rect x="415.3" y="453" width="222.81" height="1.6" fill="url(#a11)"/><rect x="636.61" y="453" width="290.99" height="1.6" fill="url(#b11)"/><rect x="415.3" y="454" width="222.81" height="1.6" fill="url(#a10)"/><rect x="636.61" y="454" width="290.99" height="1.6" fill="url(#b10)"/><rect x="415.3" y="455" width="222.81" height="1.6" fill="url(#a8)"/><rect x="636.61" y="455" width="290.99" height="1.6" fill="url(#b8)"/><rect x="415.3" y="456" width="222.81" height="1.6" fill="url(#a7)"/><rect x="636.61" y="456" width="290.99" height="1.6" fill="url(#b7)"/><rect x="415.3" y="457" width="222.81" height="1.6" fill="url(#a6)"/><rect x="636.61" y="457" width="290.99" height="1.6" fill="url(#b6)"/><rect x="415.3" y="458" width="222.81" height="1.6" fill="url(#a4)"/><rect x="636.61" y="458" width="290.99" height="1.6" fill="url(#b4)"/><rect x="415.3" y="459" width="222.81" height="1.6" fill="url(#a3)"/><rect x="636.61" y="459" width="290.99" height="1.6" fill="url(#b3)"/><rect x="415.3" y="460" width="222.81" height="1.6" fill="url(#a1)"/><rect x="636.61" y="460" width="290.99" height="1.6" fill="url(#b1)"/><rect x="415.3" y="461" width="222.81" height="1.6" fill="url(#a0)"/><rect x="636.61" y="461" width="290.99" height="1.6" fill="url(#b0)"/><rect x="415.3" y="462" width="222.81" height="1.6" fill="url(#a15)"/><rect x="636.61" y="462" width="290.99" height="1.6" fill="url(#b39)"/><rect x="415.3" y="463" width="222.81" height="1.6" fill="url(#a13)"/><rect x="636.61" y="463" width="290.99" height="1.6" fill="url(#b37)"/><rect x="415.3" y="464" width="222.81" height="1.6" fill="url(#a12)"/><rect x="636.61" y="464" width="290.99" height="1.6" fill="url(#b36)"/><rect x="415.3" y="465" width="222.81" height="1.6" fill="url(#a10)"/><rect x="636.61" y="465" width="290.99" height="1.6" fill="url(#b34)"/><rect x="415.3" y="466" width="222.81" height="1.6" fill="url(#a9)"/><rect x="636.61" y="466" width="290.99" height="1.6" fill="url(#b33)"/><rect x="415.3" y="467" width="222.81" height="1.6" fill="url(#a8)"/><rect x="636.61" y="467" width="290.99" height="1.6" fill="url(#b32)"/><rect x="415.3" y="468" width="222.81" height="1.6" fill="url(#a6)"/><rect x="636.61" y="468" width="290.99" height="1.6" fill="url(#b30)"/><rect x="415.3" y="469" width="222.81" height="1.6" fill="url(#a5)"/><rect x="636.61" y="469" width="290.99" height="1.6" fill="url(#b29)"/><rect x="415.3" y="470" width="222.81" height="1.6" fill="url(#a4)"/><rect x="636.61" y="470" width="290.99" height="1.6" fill="url(#b28)"/><rect x="415.3" y="471" width="222.81" height="1.6" fill="url(#a2)"/><rect x="636.61" y="471" width="290.99" height="1.6" fill="url(#b26)"/><rect x="415.3" y="472" width="222.81" height="1.6" fill="url(#a1)"/><rect x="636.61" y="472" width="290.99" height="1.6" fill="url(#b25)"/><rect x="415.3" y="473" width="222.81" height="1.6" fill="url(#a15)"/><rect x="636.61" y="473" width="290.99" height="1.6" fill="url(#b23)"/><rect x="415.3" y="474" width="222.81" height="1.6" fill="url(#a14)"/><rect x="636.61" y="474" width="290.99" height="1.6" fill="url(#b22)"/><rect x="415.3" y="475" width="222.81" height="1.6" fill="url(#a13)"/><rect x="636.61" y="475" width="290.99" height="1.6" fill="url(#b21)"/><rect x="415.3" y="476" width="222.81" height="1.6" fill="url(#a11)"/><rect x="636.61" y="476" width="290.99" height="1.6" fill="url(#b19)"/><rect x="415.3" y="477" width="222.81" height="1.6" fill="url(#a10)"/><rect x="636.61" y="477" width="290.99" height="1.6" fill="url(#b18)"/><rect x="415.3" y="478" width="222.81" height="1.6" fill="url(#a9)"/><rect x="636.61" y="478" width="290.99" height="1.6" fill="url(#b17)"/><rect x="415.3" y="479" width="222.81" height="1.6" fill="url(#a7)"/><rect x="636.61" y="479" width="290.99" height="1.6" fill="url(#b15)"/><rect x="415.3" y="480" width="222.81" height="1.6" fill="url(#a6)"/><rect x="636.61" y="480" width="290.99" height="1.6" fill="url(#b14)"/><rect x="415.3" y="481" width="222.81" height="1.6" fill="url(#a4)"/><rect x="636.61" y="481" width="290.99" height="1.6" fill="url(#b12)"/><rect x="415.3" y="482" width="222.81" height="1.6" fill="url(#a3)"/><rect x="636.61" y="482" width="290.99" height="1.6" fill="url(#b11)"/><rect x="415.3" y="483" width="222.81" height="1.6" fill="url(#a2)"/><rect x="636.61" y="483" width="290.99" height="1.6" fill="url(#b10)"/><rect x="415.3" y="484" width="222.81" height="1.6" fill="url(#a0)"/><rect x="636.61" y="484" width="290.99" height="1.6" fill="url(#b8)"/><rect x="415.3" y="485" width="222.81" height="1.6" fill="url(#a15)"/><rect x="636.61" y="485" width="290.99" height="1.6" fill="url(#b7)"/><rect x="415.3" y="486" width="222.81" height="1.6" fill="url(#a13)"/><rect x="636.61" y="486" width="290.99" height="1.6" fill="url(#b5)"/><rect x="415.3" y="487" width="222.81" height="1.6" fill="url(#a12)"/><rect x="636.61" y="487" width="290.99" height="1.6" fill="url(#b4)"/><rect x="415.3" y="488" width="222.81" height="1.6" fill="url(#a11)"/><rect x="636.61" y="488" width="290.99" height="1.6" fill="url(#b3)"/><rect x="415.3" y="489" width="222.81" height="1.6" fill="url(#a9)"/><rect x="636.61" y="489" width="290.99" height="1.6" fill="url(#b1)"/><rect x="415.3" y="490" width="222.81" height="1.6" fill="url(#a8)"/><rect x="636.61" y="490" width="290.99" height="1.6" fill="url(#b0)"/><rect x="415.3" y="491" width="222.81" height="1.6" fill="url(#a7)"/><rect x="636.61" y="491" width="290.99" height="1.6" fill="url(#b39)"/><rect x="415.3" y="492" width="222.81" height="1.6" fill="url(#a5)"/><rect x="636.61" y="492" width="290.99" height="1.6" fill="url(#b37)"/><rect x="415.3" y="493" width="222.81" height="1.6" fill="url(#a4)"/><rect x="636.61" y="493" width="290.99" height="1.6" fill="url(#b36)"/><rect x="415.3" y="494" width="222.81" height="1.6" fill="url(#a2)"/><rect x="636.61" y="494" width="290.99" height="1.6" fill="url(#b34)"/><rect x="415.3" y="495" width="222.81" height="1.6" fill="url(#a1)"/><rect x="636.61" y="495" width="290.99" height="1.6" fill="url(#b33)"/><rect x="415.3" y="496" width="222.81" height="1.6" fill="url(#a0)"/><rect x="636.61" y="496" width="290.99" height="1.6" fill="url(#b32)"/><rect x="415.3" y="497" width="222.81" height="1.6" fill="url(#a14)"/><rect x="636.61" y="497" width="290.99" height="1.6" fill="url(#b30)"/><rect x="415.3" y="498" width="222.81" height="1.6" fill="url(#a13)"/><rect x="636.61" y="498" width="290.99" height="1.6" fill="url(#b29)"/><rect x="415.3" y="499" width="222.81" height="1.6" fill="url(#a11)"/><rect x="636.61" y="499" width="290.99" height="1.6" fill="url(#b27)"/><rect x="415.3" y="500" width="222.81" height="1.6" fill="url(#a10)"/><rect x="636.61" y="500" width="290.99" height="1.6" fill="url(#b26)"/><rect x="415.3" y="501" width="222.81" height="1.6" fill="url(#a9)"/><rect x="636.61" y="501" width="290.99" height="1.6" fill="url(#b25)"/><rect x="415.3" y="502" width="222.81" height="1.6" fill="url(#a7)"/><rect x="636.61" y="502" width="290.99" height="1.6" fill="url(#b23)"/><rect x="415.3" y="503" width="222.81" height="1.6" fill="url(#a6)"/><rect x="636.61" y="503" width="290.99" height="1.6" fill="url(#b22)"/><rect x="415.3" y="504" width="222.81" height="1.6" fill="url(#a5)"/><rect x="636.61" y="504" width="290.99" height="1.6" fill="url(#b21)"/><rect x="415.3" y="505" width="222.81" height="1.6" fill="url(#a3)"/><rect x="636.61" y="505" width="290.99" height="1.6" fill="url(#b19)"/><rect x="415.3" y="506" width="222.81" height="1.6" fill="url(#a2)"/><rect x="636.61" y="506" width="290.99" height="1.6" fill="url(#b18)"/><rect x="415.3" y="507" width="222.81" height="1.6" fill="url(#a0)"/><rect x="636.61" y="507" width="290.99" height="1.6" fill="url(#b16)"/><rect x="415.3" y="508" width="222.81" height="1.6" fill="url(#a15)"/><rect x="636.61" y="508" width="290.99" height="1.6" fill="url(#b15)"/><rect x="415.3" y="509" width="222.81" height="1.6" fill="url(#a14)"/><rect x="636.61" y="509" width="290.99" height="1.6" fill="url(#b14)"/><rect x="415.3" y="510" width="222.81" height="1.6" fill="url(#a12)"/><rect x="636.61" y="510" width="290.99" height="1.6" fill="url(#b12)"/><rect x="415.3" y="511" width="222.81" height="1.6" fill="url(#a11)"/><rect x="636.61" y="511" width="290.99" height="1.6" fill="url(#b11)"/><rect x="415.3" y="512" width="222.81" height="1.6" fill="url(#a10)"/><rect x="636.61" y="512" width="290.99" height="1.6" fill="url(#b10)"/><rect x="415.3" y="513" width="222.81" height="1.6" fill="url(#a8)"/><rect x="636.61" y="513" width="290.99" height="1.6" fill="url(#b8)"/><rect x="415.3" y="514" width="222.81" height="1.6" fill="url(#a7)"/><rect x="636.61" y="514" width="290.99" height="1.6" fill="url(#b7)"/><rect x="415.3" y="515" width="222.81" height="1.6" fill="url(#a5)"/><rect x="636.61" y="515" width="290.99" height="1.6" fill="url(#b5)"/><rect x="415.3" y="516" width="222.81" height="1.6" fill="url(#a4)"/><rect x="636.61" y="516" width="290.99" height="1.6" fill="url(#b4)"/><rect x="415.3" y="517" width="222.81" height="1.6" fill="url(#a3)"/><rect x="636.61" y="517" width="290.99" height="1.6" fill="url(#b3)"/><rect x="415.3" y="518" width="222.81" height="1.6" fill="url(#a1)"/><rect x="636.61" y="518" width="290.99" height="1.6" fill="url(#b1)"/><rect x="415.3" y="519" width="222.81" height="1.6" fill="url(#a0)"/><rect x="636.61" y="519" width="290.99" height="1.6" fill="url(#b0)"/><rect x="415.3" y="520" width="222.81" height="1.6" fill="url(#a14)"/><rect x="636.61" y="520" width="290.99" height="1.6" fill="url(#b38)"/><rect x="415.3" y="521" width="222.81" height="1.6" fill="url(#a13)"/><rect x="636.61" y="521" width="290.99" height="1.6" fill="url(#b37)"/><rect x="415.3" y="522" width="222.81" height="1.6" fill="url(#a12)"/><rect x="636.61" y="522" width="290.99" height="1.6" fill="url(#b36)"/><rect x="415.3" y="523" width="222.81" height="1.6" fill="url(#a10)"/><rect x="636.61" y="523" width="290.99" height="1.6" fill="url(#b34)"/><rect x="415.3" y="524" width="222.81" height="1.6" fill="url(#a9)"/><rect x="636.61" y="524" width="290.99" height="1.6" fill="url(#b33)"/><rect x="415.3" y="525" width="222.81" height="1.6" fill="url(#a8)"/><rect x="636.61" y="525" width="290.99" height="1.6" fill="url(#b32)"/><rect x="415.3" y="526" width="222.81" height="1.6" fill="url(#a6)"/><rect x="636.61" y="526" width="290.99" height="1.6" fill="url(#b30)"/><rect x="415.3" y="527" width="222.81" height="1.6" fill="url(#a5)"/><rect x="636.61" y="527" width="290.99" height="1.6" fill="url(#b29)"/><rect x="415.3" y="528" width="222.81" height="1.6" fill="url(#a3)"/><rect x="636.61" y="528" width="290.99" height="1.6" fill="url(#b27)"/><rect x="415.3" y="529" width="222.81" height="1.6" fill="url(#a2)"/><rect x="636.61" y="529" width="290.99" height="1.6" fill="url(#b26)"/><rect x="415.3" y="530" width="222.81" height="1.6" fill="url(#a1)"/><rect x="636.61" y="530" width="290.99" height="1.6" fill="url(#b25)"/><rect x="415.3" y="531" width="222.81" height="1.6" fill="url(#a15)"/><rect x="636.61" y="531" width="290.99" height="1.6" fill="url(#b23)"/><rect x="415.3" y="532" width="222.81" height="1.6" fill="url(#a14)"/><rect x="636.61" y="532" width="290.99" height="1.6" fill="url(#b22)"/><rect x="415.3" y="533" width="222.81" height="1.6" fill="url(#a13)"/><rect x="636.61" y="533" width="290.99" height="1.6" fill="url(#b21)"/><rect x="415.3" y="534" width="222.81" height="1.6" fill="url(#a11)"/><rect x="636.61" y="534" width="290.99" height="1.6" fill="url(#b19)"/><rect x="415.3" y="535" width="222.81" height="1.6" fill="url(#a10)"/><rect x="636.61" y="535" width="290.99" height="1.6" fill="url(#b18)"/><rect x="415.3" y="536" width="222.81" height="1.6" fill="url(#a8)"/><rect x="636.61" y="536" width="290.99" height="1.6" fill="url(#b16)"/><rect x="415.3" y="537" width="222.81" height="1.6" fill="url(#a7)"/><rect x="636.61" y="537" width="290.99" height="1.6" fill="url(#b15)"/><rect x="415.3" y="538" width="222.81" height="1.6" fill="url(#a6)"/><rect x="636.61" y="538" width="290.99" height="1.6" fill="url(#b14)"/><rect x="415.3" y="539" width="222.81" height="1.6" fill="url(#a4)"/><rect x="636.61" y="539" width="290.99" height="1.6" fill="url(#b12)"/><rect x="415.3" y="540" width="222.81" height="1.6" fill="url(#a3)"/><rect x="636.61" y="540" width="290.99" height="1.6" fill="url(#b11)"/><rect x="415.3" y="541" width="222.81" height="1.6" fill="url(#a1)"/><rect x="636.61" y="541" width="290.99" height="1.6" fill="url(#b9)"/><rect x="415.3" y="542" width="222.81" height="1.6" fill="url(#a0)"/><rect x="636.61" y="542" width="290.99" height="1.6" fill="url(#b8)"/><rect x="415.3" y="543" width="222.81" height="1.6" fill="url(#a15)"/><rect x="636.61" y="543" width="290.99" height="1.6" fill="url(#b7)"/><rect x="415.3" y="544" width="222.81" height="1.6" fill="url(#a13)"/><rect x="636.61" y="544" width="290.99" height="1.6" fill="url(#b5)"/><rect x="415.3" y="545" width="222.81" height="1.6" fill="url(#a12)"/><rect x="636.61" y="545" width="290.99" height="1.6" fill="url(#b4)"/><rect x="415.3" y="546" width="222.81" height="1.6" fill="url(#a11)"/><rect x="636.61" y="546" width="290.99" height="1.6" fill="url(#b3)"/><rect x="415.3" y="547" width="222.81" height="1.6" fill="url(#a9)"/><rect x="636.61" y="547" width="290.99" height="1.6" fill="url(#b1)"/><rect x="415.3" y="548" width="222.81" height="1.6" fill="url(#a8)"/><rect x="636.61" y="548" width="290.99" height="1.6" fill="url(#b0)"/><rect x="415.3" y="549" width="222.81" height="1.6" fill="url(#a6)"/><rect x="636.61" y="549" width="290.99" height="1.6" fill="url(#b38)"/><rect x="415.3" y="550" width="222.81" height="1.6" fill="url(#a5)"/><rect x="636.61" y="550" width="290.99" height="1.6" fill="url(#b37)"/><rect x="415.3" y="551" width="222.81" height="1.6" fill="url(#a4)"/><rect x="636.61" y="551" width="290.99" height="1.6" fill="url(#b36)"/><rect x="415.3" y="552" width="222.81" height="1.6" fill="url(#a2)"/><rect x="636.61" y="552" width="290.99" height="1.6" fill="url(#b34)"/><rect x="415.3" y="553" width="222.81" height="1.6" fill="url(#a1)"/><rect x="636.61" y="553" width="290.99" height="1.6" fill="url(#b33)"/><rect x="415.3" y="554" width="222.81" height="1.6" fill="url(#a0)"/><rect x="636.61" y="554" width="290.99" height="1.6" fill="url(#b32)"/><rect x="415.3" y="555" width="222.81" height="1.6" fill="url(#a14)"/><rect x="636.61" y="555" width="290.99" height="1.6" fill="url(#b30)"/><rect x="415.3" y="556" width="222.81" height="1.6" fill="url(#a13)"/><rect x="636.61" y="556" width="290.99" height="1.6" fill="url(#b29)"/><rect x="415.3" y="557" width="222.81" height="1.6" fill="url(#a11)"/><rect x="636.61" y="557" width="290.99" height="1.6" fill="url(#b27)"/><rect x="415.3" y="558" width="222.81" height="1.6" fill="url(#a10)"/><rect x="636.61" y="558" width="290.99" height="1.6" fill="url(#b26)"/><rect x="415.3" y="559" width="222.81" height="1.6" fill="url(#a9)"/><rect x="636.61" y="559" width="290.99" height="1.6" fill="url(#b25)"/><rect x="415.3" y="560" width="222.81" height="1.6" fill="url(#a7)"/><rect x="636.61" y="560" width="290.99" height="1.6" fill="url(#b23)"/><rect x="415.3" y="561" width="222.81" height="1.6" fill="url(#a6)"/><rect x="636.61" y="561" width="290.99" height="1.6" fill="url(#b22)"/><rect x="415.3" y="562" width="222.81" height="1.6" fill="url(#a4)"/><rect x="636.61" y="562" width="290.99" height="1.6" fill="url(#b20)"/><rect x="415.3" y="563" width="222.81" height="1.6" fill="url(#a3)"/><rect x="636.61" y="563" width="290.99" height="1.6" fill="url(#b19)"/><rect x="415.3" y="564" width="222.81" height="1.6" fill="url(#a2)"/><rect x="636.61" y="564" width="290.99" height="1.6" fill="url(#b18)"/><rect x="415.3" y="565" width="222.81" height="1.6" fill="url(#a0)"/><rect x="636.61" y="565" width="290.99" height="1.6" fill="url(#b16)"/><rect x="415.3" y="566" width="222.81" height="1.6" fill="url(#a15)"/><rect x="636.61" y="566" width="290.99" height="1.6" fill="url(#b15)"/><rect x="415.3" y="567" width="222.81" height="1.6" fill="url(#a14)"/><rect x="636.61" y="567" width="290.99" height="1.6" fill="url(#b14)"/><rect x="415.3" y="568" width="222.81" height="1.6" fill="url(#a12)"/><rect x="636.61" y="568" width="290.99" height="1.6" fill="url(#b12)"/><rect x="415.3" y="569" width="222.81" height="1.6" fill="url(#a11)"/><rect x="636.61" y="569" width="290.99" height="1.6" fill="url(#b11)"/><rect x="415.3" y="570" width="222.81" height="1.6" fill="url(#a9)"/><rect x="636.61" y="570" width="290.99" height="1.6" fill="url(#b9)"/><rect x="415.3" y="571" width="222.81" height="1.6" fill="url(#a8)"/><rect x="636.61" y="571" width="290.99" height="1.6" fill="url(#b8)"/><rect x="415.3" y="572" width="222.81" height="1.6" fill="url(#a7)"/><rect x="636.61" y="572" width="290.99" height="1.6" fill="url(#b7)"/><rect x="415.3" y="573" width="222.81" height="1.6" fill="url(#a5)"/><rect x="636.61" y="573" width="290.99" height="1.6" fill="url(#b5)"/><rect x="415.3" y="574" width="222.81" height="1.6" fill="url(#a4)"/><rect x="636.61" y="574" width="290.99" height="1.6" fill="url(#b4)"/><rect x="415.3" y="575" width="222.81" height="1.6" fill="url(#a2)"/><rect x="636.61" y="575" width="290.99" height="1.6" fill="url(#b2)"/><rect x="415.3" y="576" width="222.81" height="1.6" fill="url(#a1)"/><rect x="636.61" y="576" width="290.99" height="1.6" fill="url(#b1)"/><rect x="415.3" y="577" width="222.81" height="1.6" fill="url(#a0)"/><rect x="636.61" y="577" width="290.99" height="1.6" fill="url(#b0)"/></g><path d="M415.3 562.9 H927.6" stroke="#07052e" stroke-width="1.9"/><path d="M415.3 303.2 H927.6" stroke="#07052e" stroke-width="1.9"/><rect x="415.3" y="573.3" width="3" height="4" fill="#05050c"/><rect x="923.6" y="573.8" width="4" height="3.5" fill="#0a0840"/><path d="M472.5 280.5 H545.6 M472.5 280.5 V592.5 M545.6 280.5 V598 M472.5 592.7 H554.6" stroke="#1c1c1c" stroke-width="0.7" fill="none" opacity=".85"/><rect x="470.2" y="278.2" width="4.6" height="4.6" fill="#0a0a0a"/><rect x="506.5" y="278.2" width="4.6" height="4.6" fill="#0a0a0a"/><rect x="543.3000000000001" y="278.2" width="4.6" height="4.6" fill="#0a0a0a"/><rect x="543.3000000000001" y="434.7" width="4.6" height="4.6" fill="#0a0a0a"/><rect x="470.2" y="590.4000000000001" width="4.6" height="4.6" fill="#0a0a0a"/><rect x="506.5" y="590.4000000000001" width="4.6" height="4.6" fill="#0a0a0a"/><rect x="470.3" y="434.8" width="4.4" height="4.4" fill="#15157a" stroke="#f2f2f2" stroke-width="1.1"/><rect x="542.8000000000001" y="434.2" width="5.6" height="5.6" fill="none" stroke="#e8e8e8" stroke-width=".7"/><path d="M539.6 592.7 h13 M545.6 588.5 v10.5" stroke="#222" stroke-width="1" fill="none"/><rect x="544.3000000000001" y="591.4000000000001" width="2.6" height="2.6" fill="#fff"/></svg>
<div style="left:0px;top:693px;width:1280px;height:27px;background:linear-gradient(#9a9fa9 0%,#8f949f 15%,#888e99 55%,#828893 100%);border-top:1px solid #5f636b;"></div>
<svg style="left:5px;top:695px" width="26" height="25" viewBox="0 0 26 25"><defs><radialGradient id="orb" cx=".5" cy=".35" r=".7"><stop offset="0" stop-color="#7fb6e6"/><stop offset=".55" stop-color="#2f6fb4"/><stop offset="1" stop-color="#16345f"/></radialGradient></defs><circle cx="13" cy="12.500" r="11.500" fill="url(#orb)" stroke="#1b2a44" stroke-width=".8"/><path d="M6.500 8.500 q3-1.600 5.500 0 v4 q-2.500-1.400-5.500 0z" fill="#e8572a"/><path d="M13 8.300 q3 1.600 6-.300 v4.200 q-3 1.600-6 0z" fill="#7cc142"/><path d="M6.500 13.500 q3-1.500 5.500 0 v4 q-2.500-1.400-5.500 0z" fill="#3a9be0"/><path d="M13 13.400 q3 1.600 6-.300 v4.200 q-3 1.600-6 0z" fill="#f7c52e"/></svg>
<div style="left:40px;top:693.8px;width:64.5px;height:25.8px;border:1px solid #575b64;border-top-color:#6a6e77;border-radius:2px;background:linear-gradient(#b0b4bc 0%,#a6aab3 45%,#9a9fa9 52%,#9ea3ad 100%);box-shadow:inset 0 0 0 1px rgba(255,255,255,.28);"></div>
<span class="t fs" style="left:68.00px;top:701.20px;font-size:8.6px;line-height:12px;color:#fff;transform:scaleX(0.952);transform-origin:0 50%;text-shadow:0 0 2px rgba(40,45,60,.9);">MATLA...</span>
<svg style="left:46px;top:695.8px" width="21.5" height="21.5" viewBox="0 0 20 19" preserveAspectRatio="none"><path d="M1 11.500 L7 8.500 L10 10.500 L13.500 1.500 L19 15.500 L14.500 12.500 L11.500 17.500 L7.500 13.500z" fill="#d9682a"/><path d="M1 11.500 L7 8.500 L10 10.500 L8 13.600z" fill="#7f9fb8"/><path d="M13.500 1.500 L19 15.500 L15.500 12.900z" fill="#8a3212"/><path d="M13.500 1.500 L12 8 L13 12.500 L15.500 12.900z" fill="#f09a4a" opacity=".8"/></svg>
<div style="left:106px;top:693.8px;width:65px;height:25.8px;border:1px solid #575b64;border-top-color:#6a6e77;border-radius:2px;background:linear-gradient(#b0b4bc 0%,#a6aab3 45%,#9a9fa9 52%,#9ea3ad 100%);box-shadow:inset 0 0 0 1px rgba(255,255,255,.28);"></div>
<span class="t fs" style="left:134.50px;top:701.20px;font-size:8.6px;line-height:12px;color:#fff;transform:scaleX(0.946);transform-origin:0 50%;text-shadow:0 0 2px rgba(40,45,60,.9);">Editor -...</span>
<svg style="left:112px;top:698px" width="20" height="19" viewBox="0 0 20 19"><rect x="2.500" y="3" width="13" height="14" rx="1" fill="#f4f4f0" stroke="#9a9a92" stroke-width=".8"/><rect x="2.500" y="3" width="13" height="3" fill="#d9d9d2"/><path d="M5 9h8M5 11.500h8M5 14h6" stroke="#b5b5ad" stroke-width=".8"/><path d="M17.500 2 L9.500 10.500 l-1 2.500 l2.500-1 L19 3.500z" fill="#e0b84a" stroke="#8a6a1a" stroke-width=".5"/></svg>
<div style="left:172px;top:693.8px;width:65.5px;height:25.8px;border:1px solid #6a6663;border-radius:2px;background:linear-gradient(90deg,rgba(236,236,236,.95) 0%,rgba(238,232,226,.6) 35%,rgba(240,216,192,0) 70%),linear-gradient(#ecdccd 0%,#efd9c3 45%,#e8ccb2 52%,#edd5bf 100%);box-shadow:inset 0 0 0 1px rgba(255,255,255,.5);"></div>
<span class="t fs" style="left:200.50px;top:701.20px;font-size:8.6px;line-height:12px;color:#fffaf5;transform:scaleX(0.840);transform-origin:0 50%;text-shadow:0 0 2px rgba(120,90,60,.8);">Figure 1</span>
<svg style="left:177.5px;top:695.8px" width="21.5" height="21.5" viewBox="0 0 20 19" preserveAspectRatio="none"><rect width="20" height="19" fill="#120e0b"/><path d="M1 11.500 L7 8.500 L10 10.500 L13.500 1.500 L19 15.500 L14.500 12.500 L11.500 17.500 L7.500 13.500z" fill="#d9682a"/><path d="M1 11.500 L7 8.500 L10 10.500 L8 13.600z" fill="#7f9fb8"/><path d="M13.500 1.500 L19 15.500 L15.500 12.900z" fill="#8a3212"/><path d="M13.500 1.500 L12 8 L13 12.500 L15.500 12.900z" fill="#f09a4a" opacity=".8"/></svg>
<div style="left:239px;top:693.8px;width:65px;height:25.8px;border:1px solid #575b64;border-top-color:#6a6e77;border-radius:2px;background:linear-gradient(#b0b4bc 0%,#a6aab3 45%,#9a9fa9 52%,#9ea3ad 100%);box-shadow:inset 0 0 0 1px rgba(255,255,255,.28);"></div>
<span class="t fs" style="left:267.50px;top:701.20px;font-size:8.6px;line-height:12px;color:#fff;transform:scaleX(0.872);transform-origin:0 50%;text-shadow:0 0 2px rgba(40,45,60,.9);">Figure 2</span>
<svg style="left:244px;top:695.8px" width="21.5" height="21.5" viewBox="0 0 20 19" preserveAspectRatio="none"><rect width="20" height="19" fill="#120e0b"/><path d="M1 11.500 L7 8.500 L10 10.500 L13.500 1.500 L19 15.500 L14.500 12.500 L11.500 17.500 L7.500 13.500z" fill="#d9682a"/><path d="M1 11.500 L7 8.500 L10 10.500 L8 13.600z" fill="#7f9fb8"/><path d="M13.500 1.500 L19 15.500 L15.500 12.900z" fill="#8a3212"/><path d="M13.500 1.500 L12 8 L13 12.500 L15.500 12.900z" fill="#f09a4a" opacity=".8"/></svg>
<div style="left:305.5px;top:693.8px;width:65.5px;height:25.8px;border:1px solid #575b64;border-top-color:#6a6e77;border-radius:2px;background:linear-gradient(#b0b4bc 0%,#a6aab3 45%,#9a9fa9 52%,#9ea3ad 100%);box-shadow:inset 0 0 0 1px rgba(255,255,255,.28);"></div>
<span class="t fs" style="left:333.50px;top:701.20px;font-size:8.6px;line-height:12px;color:#fff;transform:scaleX(0.888);transform-origin:0 50%;text-shadow:0 0 2px rgba(40,45,60,.9);">Figure 3</span>
<svg style="left:310.5px;top:695.8px" width="21.5" height="21.5" viewBox="0 0 20 19" preserveAspectRatio="none"><rect width="20" height="19" fill="#120e0b"/><path d="M1 11.500 L7 8.500 L10 10.500 L13.500 1.500 L19 15.500 L14.500 12.500 L11.500 17.500 L7.500 13.500z" fill="#d9682a"/><path d="M1 11.500 L7 8.500 L10 10.500 L8 13.600z" fill="#7f9fb8"/><path d="M13.500 1.500 L19 15.500 L15.500 12.900z" fill="#8a3212"/><path d="M13.500 1.500 L12 8 L13 12.500 L15.500 12.900z" fill="#f09a4a" opacity=".8"/></svg>
<div style="left:372.5px;top:693.8px;width:64.5px;height:25.8px;border:1px solid #575b64;border-top-color:#6a6e77;border-radius:2px;background:linear-gradient(#b0b4bc 0%,#a6aab3 45%,#9a9fa9 52%,#9ea3ad 100%);box-shadow:inset 0 0 0 1px rgba(255,255,255,.28);"></div>
<span class="t fs" style="left:400.00px;top:701.20px;font-size:8.6px;line-height:12px;color:#fff;transform:scaleX(0.888);transform-origin:0 50%;text-shadow:0 0 2px rgba(40,45,60,.9);">Figure 4</span>
<svg style="left:377px;top:695.8px" width="21.5" height="21.5" viewBox="0 0 20 19" preserveAspectRatio="none"><rect width="20" height="19" fill="#120e0b"/><path d="M1 11.500 L7 8.500 L10 10.500 L13.500 1.500 L19 15.500 L14.500 12.500 L11.500 17.500 L7.500 13.500z" fill="#d9682a"/><path d="M1 11.500 L7 8.500 L10 10.500 L8 13.600z" fill="#7f9fb8"/><path d="M13.500 1.500 L19 15.500 L15.500 12.900z" fill="#8a3212"/><path d="M13.500 1.500 L12 8 L13 12.500 L15.500 12.900z" fill="#f09a4a" opacity=".8"/></svg>
<svg style="left:446px;top:697px" width="23" height="22" viewBox="0 0 23 22"><circle cx="11.500" cy="11.500" r="7" fill="none" stroke="#3aa0e6" stroke-width="3.600"/><rect x="7" y="10.200" width="10" height="2.300" fill="#3aa0e6"/><rect x="12" y="12.400" width="8" height="3.500" fill="#8791a0"/><path d="M2.500 17 q-2-6 8-12.500 q7-3.500 9.500-.5" fill="none" stroke="#f2c53a" stroke-width="1.500"/></svg>
<div style="left:477px;top:693.8px;width:66px;height:25.8px;border:1px solid #575b64;border-top-color:#6a6e77;border-radius:2px;background:linear-gradient(#b0b4bc 0%,#a6aab3 45%,#9a9fa9 52%,#9ea3ad 100%);box-shadow:inset 0 0 0 1px rgba(255,255,255,.28);"></div>
<span class="t fs" style="left:505.50px;top:701.20px;font-size:8.6px;line-height:12px;color:#fff;transform:scaleX(0.832);transform-origin:0 50%;text-shadow:0 0 2px rgba(40,45,60,.9);">Входя...</span>
<svg style="left:481.5px;top:697.5px" width="20" height="20" viewBox="0 0 20 20"><circle cx="10" cy="10" r="8.800" fill="#e8761c"/><circle cx="9.300" cy="9" r="5.200" fill="#2d5fb0"/><path d="M2 7 q2-6 9-5.500 q-4 1.500-3.500 4 q3 .5 3 3 q-2.500 1-2.500 3.500 q2 2 5 .5 q2.500-2 2-6 q3 5-.5 9.500 q-5 4-10.500.5 q-3.500-4-2-9.500z" fill="#f08a1e"/><path d="M2 7 q2-6 9-5.500 q-5 2-6 7z" fill="#f7c23c"/></svg>
<div style="left:545px;top:693.8px;width:66px;height:25.8px;border:1px solid #575b64;border-top-color:#6a6e77;border-radius:2px;background:linear-gradient(#b0b4bc 0%,#a6aab3 45%,#9a9fa9 52%,#9ea3ad 100%);box-shadow:inset 0 0 0 1px rgba(255,255,255,.28);"></div>
<span class="t fs" style="left:573.50px;top:701.20px;font-size:8.6px;line-height:12px;color:#fff;transform:scaleX(0.854);transform-origin:0 50%;text-shadow:0 0 2px rgba(40,45,60,.9);">Equatio...</span>
<svg style="left:549.5px;top:697.5px" width="20" height="20" viewBox="0 0 20 20"><circle cx="10" cy="10" r="9" fill="#dd4b3e"/><path d="M10 10 L2.200 5.500 A9 9 0 0 0 6.500 18.300z" fill="#1aa15f"/><path d="M10 10 L6.500 18.300 A9 9 0 0 0 18.900 9 L10 9z" fill="#fcd040"/><circle cx="10" cy="10" r="4.200" fill="#fff"/><circle cx="10" cy="10" r="3.300" fill="#4a8af4"/></svg>
<div style="left:612px;top:693.8px;width:199px;height:25.8px;border:1px solid #575b64;border-top-color:#6a6e77;border-radius:2px;background:linear-gradient(#b0b4bc 0%,#a6aab3 45%,#9a9fa9 52%,#9ea3ad 100%);box-shadow:inset 0 0 0 1px rgba(255,255,255,.28);"></div>
<div style="left:678.5px;top:695px;width:1px;height:24px;background:#6b7482;opacity:.8;"></div>
<div style="left:744.5px;top:695px;width:1px;height:24px;background:#6b7482;opacity:.8;"></div>
<svg style="left:616.5px;top:696.5px" width="16" height="21" viewBox="0 0 16 21"><path d="M1.500 1.500 h6 l1.500 2 h2 v15 h-9.500z" fill="#e9d88a" stroke="#bfa95a" stroke-width=".6"/><path d="M7.500 4 q5-2 7 0 v14.500 h-7z" fill="#f7eeb4" stroke="#c9b468" stroke-width=".6"/><path d="M3 3 v14" stroke="#f5eec0" stroke-width="1" opacity=".7"/></svg>
<span class="t fs" style="left:641.50px;top:701.20px;font-size:8.6px;line-height:12px;color:#fff;transform:scaleX(0.904);transform-origin:0 50%;text-shadow:0 0 2px rgba(40,45,60,.9);">MATLAB</span>
<svg style="left:683px;top:696.5px" width="16" height="21" viewBox="0 0 16 21"><path d="M1.500 1.500 h6 l1.500 2 h2 v15 h-9.500z" fill="#e9d88a" stroke="#bfa95a" stroke-width=".6"/><path d="M7.500 4 q5-2 7 0 v14.500 h-7z" fill="#f7eeb4" stroke="#c9b468" stroke-width=".6"/><path d="M3 3 v14" stroke="#f5eec0" stroke-width="1" opacity=".7"/></svg>
<span class="t fs" style="left:708.00px;top:701.20px;font-size:8.6px;line-height:12px;color:#fff;transform:scaleX(0.856);transform-origin:0 50%;text-shadow:0 0 2px rgba(40,45,60,.9);">v1.02</span>
<svg style="left:749.5px;top:696.5px" width="16" height="21" viewBox="0 0 16 21"><path d="M1.500 1.500 h6 l1.500 2 h2 v15 h-9.500z" fill="#e9d88a" stroke="#bfa95a" stroke-width=".6"/><path d="M7.500 4 q5-2 7 0 v14.500 h-7z" fill="#f7eeb4" stroke="#c9b468" stroke-width=".6"/><path d="M3 3 v14" stroke="#f5eec0" stroke-width="1" opacity=".7"/></svg>
<span class="t fs" style="left:774.00px;top:701.20px;font-size:8.6px;line-height:12px;color:#fff;transform:scaleX(0.913);transform-origin:0 50%;text-shadow:0 0 2px rgba(40,45,60,.9);">AMV</span>
<div style="left:813.7px;top:693.8px;width:65.29999999999995px;height:25.8px;border:1px solid #575b64;border-top-color:#6a6e77;border-radius:2px;background:linear-gradient(#b0b4bc 0%,#a6aab3 45%,#9a9fa9 52%,#9ea3ad 100%);box-shadow:inset 0 0 0 1px rgba(255,255,255,.28);"></div>
<span class="t fs" style="left:842.00px;top:701.20px;font-size:8.6px;line-height:12px;color:#fff;transform:scaleX(0.848);transform-origin:0 50%;text-shadow:0 0 2px rgba(40,45,60,.9);">Входя...</span>
<svg style="left:817.5px;top:698px" width="21" height="19" viewBox="0 0 21 19"><rect x="0.500" y="0.500" width="19.500" height="17.500" rx="1.500" fill="#f3d56a" stroke="#c79a2a" stroke-width=".9"/><circle cx="7.500" cy="8" r="4.500" fill="#fdf3c4" stroke="#e0942a" stroke-width="1.600"/><circle cx="16.500" cy="5.500" r="3" fill="#fff" stroke="#8a8a8a" stroke-width=".6"/><path d="M1.500 13 h18 v4.500 h-18z" fill="#fbeeb0"/></svg>
<div style="left:881px;top:693.8px;width:66px;height:25.8px;border:1px solid #575b64;border-top-color:#6a6e77;border-radius:2px;background:linear-gradient(#b0b4bc 0%,#a6aab3 45%,#9a9fa9 52%,#9ea3ad 100%);box-shadow:inset 0 0 0 1px rgba(255,255,255,.28);"></div>
<span class="t fs" style="left:909.50px;top:701.20px;font-size:8.6px;line-height:12px;color:#fff;transform:scaleX(0.888);transform-origin:0 50%;text-shadow:0 0 2px rgba(40,45,60,.9);">Windo...</span>
<svg style="left:885px;top:697.5px" width="22" height="20" viewBox="0 0 22 20"><rect x="4" y="1.500" width="12" height="10" fill="#2c4a34" stroke="#cfd3d8" stroke-width="1.300"/><path d="M6 4h3M11 4h3M6 6.500h8M6 9h5" stroke="#7fe08a" stroke-width=".8"/><path d="M2 14 h14 l2.500 4 h-18z" fill="#e3e6ea" stroke="#a5aab2" stroke-width=".6"/></svg>
<div style="left:948px;top:693.8px;width:65.70000000000005px;height:25.8px;border:1px solid #575b64;border-top-color:#6a6e77;border-radius:2px;background:linear-gradient(#b0b4bc 0%,#a6aab3 45%,#9a9fa9 52%,#9ea3ad 100%);box-shadow:inset 0 0 0 1px rgba(255,255,255,.28);"></div>
<span class="t fs" style="left:977.00px;top:701.20px;font-size:8.6px;line-height:12px;color:#fff;transform:scaleX(0.936);transform-origin:0 50%;text-shadow:0 0 2px rgba(40,45,60,.9);">Untitle...</span>
<svg style="left:951px;top:698px" width="20" height="19" viewBox="0 0 20 19"><circle cx="9" cy="9.500" r="8.500" fill="#16171a"/><circle cx="9" cy="9.500" r="7.600" fill="none" stroke="#d8dade" stroke-width=".8"/><path d="M9 2 q4 3 1 7.500 q-3 4-7.500 1.500 M10 9.500 q5-1 6.500 3.500 M8.500 10 q-1 5 3 7" fill="none" stroke="#e8eaee" stroke-width="1.500"/></svg>
<div style="left:1016px;top:693.8px;width:65.70000000000005px;height:25.8px;border:1px solid #575b64;border-top-color:#6a6e77;border-radius:2px;background:linear-gradient(#b0b4bc 0%,#a6aab3 45%,#9a9fa9 52%,#9ea3ad 100%);box-shadow:inset 0 0 0 1px rgba(255,255,255,.28);"></div>
<span class="t fs" style="left:1044.50px;top:701.20px;font-size:8.6px;line-height:12px;color:#fff;transform:scaleX(0.889);transform-origin:0 50%;text-shadow:0 0 2px rgba(40,45,60,.9);">WinEdt...</span>
<svg style="left:1019.5px;top:697.5px" width="22" height="20" viewBox="0 0 22 20"><path d="M1 9 l9-4 l10 3.500 l-9 5z" fill="#f4e6a0" stroke="#c9b25a" stroke-width=".6"/><path d="M1 9 v7 l10 3.500 v-6z" fill="#fff7cf" stroke="#c9b25a" stroke-width=".6"/><path d="M11 13.500 l9-5 v6.500 l-9 4.500z" fill="#ecd98a" stroke="#c9b25a" stroke-width=".6"/><path d="M19 1 L9 11 l-1 2.500 l2.500-1 L20.500 2.500z" fill="#3a5fb4" stroke="#1d3a80" stroke-width=".5"/><path d="M2.500 11.500 h3.500 l-2 2 l2 2 h-3.500" fill="none" stroke="#c22" stroke-width="1"/></svg>
<div style="left:1083.7px;top:693.8px;width:65.0px;height:25.8px;border:1px solid #575b64;border-top-color:#6a6e77;border-radius:2px;background:linear-gradient(#b0b4bc 0%,#a6aab3 45%,#9a9fa9 52%,#9ea3ad 100%);box-shadow:inset 0 0 0 1px rgba(255,255,255,.28);"></div>
<span class="t fs" style="left:1112.50px;top:701.20px;font-size:8.6px;line-height:12px;color:#fff;transform:scaleX(0.889);transform-origin:0 50%;text-shadow:0 0 2px rgba(40,45,60,.9);">resoluti...</span>
<svg style="left:1088px;top:697.5px" width="21" height="20" viewBox="0 0 21 20"><rect x="0.500" y="0.500" width="20" height="19" rx="2" fill="#3b68b8" stroke="#e6eaf2" stroke-width="1"/><path d="M1.500 13 q5-7 9-3 q4 3.500 9-4 v12.500 h-18z" fill="#f3c46a"/><path d="M1.500 16 q5-5 9-2 q4 2.500 9-3 v7.500 h-18z" fill="#f7ddb0"/></svg>
<svg style="left:0;top:0" width="1280" height="720"><path d="M1154.500 709 l3-3.200 l3 3.200z" fill="#f2f4f7"/><path d="M1170 700.500 v11" stroke="#f4f6f9" stroke-width="1.200"/><path d="M1170.500 701 q2.500-1.500 4.500 0 q2 1.300 4 0 v5 q-2 1.300-4 0 q-2-1.500-4.500 0z" fill="#f4f6f9"/><rect x="1186" y="702" width="8" height="6.500" fill="#c9d4e6" stroke="#f4f6f9" stroke-width="1"/><path d="M1188 711.500 h6 M1191 708.500 v3" stroke="#f4f6f9" stroke-width="1"/><rect x="1184" y="700.500" width="4" height="3.500" fill="#f4f6f9"/><path d="M1201.500 705 h2.500 l3.500-3 v10 l-3.500-3 h-2.500z" fill="#f4f6f9"/><path d="M1209.500 703.500 q2.200 3 0 6 M1211.500 702 q3.300 4.500 0 9" stroke="#f4f6f9" stroke-width=".9" fill="none"/></svg>
<span class="t fs" style="left:1234.50px;top:695.30px;font-size:8.8px;line-height:13px;color:#fff;transform:scaleX(0.795);transform-origin:0 50%;">19:52</span>
<span class="t fs" style="left:1224.00px;top:706.70px;font-size:8.8px;line-height:13px;color:#fff;transform:scaleX(0.874);transform-origin:0 50%;">26/08/2013</span>
<div style="left:1270.5px;top:695px;width:9.5px;height:25px;border-left:1px solid #5a6370;background:linear-gradient(#aab2be,#8c96a6);"></div>
</div></body></html>
